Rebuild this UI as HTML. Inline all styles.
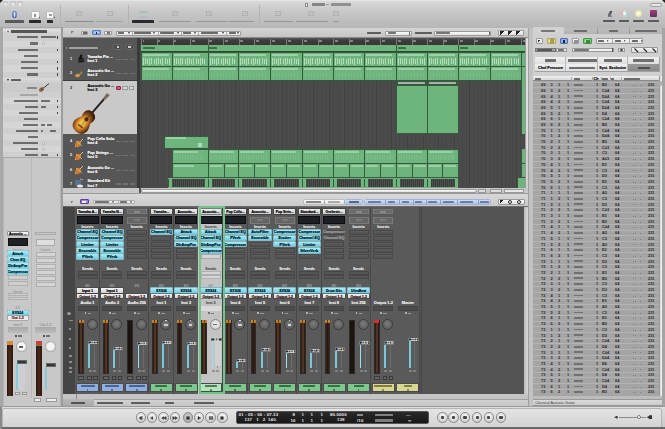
<!DOCTYPE html><html><head><meta charset="utf-8"><style>
html,body{margin:0;padding:0;width:665px;height:429px;overflow:hidden;background:#7a7a7a;}
body{position:relative;font-family:"Liberation Sans",sans-serif;}
div{box-sizing:border-box;}
.t{position:absolute;white-space:nowrap;line-height:1;}
</style></head><body>
<div style="position:absolute;left:0px;top:0px;width:665px;height:429px;background:#c3c3c3;"></div>
<div style="position:absolute;left:0px;top:0px;width:665px;height:27px;background:linear-gradient(#e8e8e8,#cfcfcf 40%,#b9b9b9);"></div>
<div style="position:absolute;left:0px;top:27.3px;width:665px;height:0.8px;background:#a4a4a4;"></div>
<div style="position:absolute;left:0px;top:0px;width:665px;height:27.5px;background:linear-gradient(#eeeeee 0,#d8d8d8 1.5px,#c8c8c8 40%,#b6b6b6);"></div>
<div style="position:absolute;left:0px;top:0px;width:3px;height:3px;background:#222;clip-path:polygon(0 0,100% 0,0 100%);"></div>
<div style="position:absolute;left:662px;top:0px;width:3px;height:3px;background:#222;clip-path:polygon(0 0,100% 0,100% 100%);"></div>
<div style="position:absolute;left:2.5000000000000004px;top:0.6px;width:5.8px;height:5.8px;border-radius:50%;background:radial-gradient(circle at 50% 65%,#f4f4f4,#d0d0d0 50%,#a8a8a8 80%,#8a8a8a);"></div>
<div style="position:absolute;left:10.0px;top:0.6px;width:5.8px;height:5.8px;border-radius:50%;background:radial-gradient(circle at 50% 65%,#f4f4f4,#d0d0d0 50%,#a8a8a8 80%,#8a8a8a);"></div>
<div style="position:absolute;left:17.400000000000002px;top:0.6px;width:5.8px;height:5.8px;border-radius:50%;background:radial-gradient(circle at 50% 65%,#f4f4f4,#d0d0d0 50%,#a8a8a8 80%,#8a8a8a);"></div>
<div style="position:absolute;left:650px;top:2.5px;width:12px;height:4px;border-radius:2px;background:#e8e8e8;border:0.5px solid #a0a0a0;"></div>
<div style="position:absolute;left:305.4px;top:2.5px;width:3px;height:4.5px;background:#f4f4f4;border:0.5px solid #888;"></div>
<div style="position:absolute;left:311.5px;top:3.4px;width:13px;height:2.4px;background:#666;opacity:0.72;border-radius:0.6px"></div>
<div style="position:absolute;left:326px;top:3.8px;width:3px;height:1px;background:#777;opacity:0.72;border-radius:0.6px"></div>
<div style="position:absolute;left:331px;top:3.4px;width:20px;height:2.4px;background:#777;opacity:0.72;border-radius:0.6px"></div>
<div style="position:absolute;left:12px;top:10.5px;width:5px;height:7.5px;border-radius:50%;background:radial-gradient(circle at 50% 40%,#a8c0f0,#4a70c8 60%,#2a4aa0);"></div>
<div style="position:absolute;left:14px;top:12px;width:1px;height:4.5px;background:#e0e8ff;"></div>
<div style="position:absolute;left:5.4px;top:20.4px;width:19px;height:2.3px;background:#333;opacity:0.72;border-radius:0.6px"></div>
<div style="position:absolute;left:31.8px;top:12.2px;width:6.8px;height:6px;background:#f8f8f8;box-shadow:0 0 0 0.5px #b0b0b0;"></div>
<div style="position:absolute;left:34.2px;top:14px;width:2px;height:2.5px;background:#666;opacity:.7"></div>
<div style="position:absolute;left:38.8px;top:16.5px;width:1px;height:1px;background:#444;"></div>
<div style="position:absolute;left:29px;top:20.3px;width:11.6px;height:2.5px;background:#111;opacity:0.86;border-radius:0.6px"></div>
<div style="position:absolute;left:47.4px;top:12.2px;width:6px;height:6px;background:#f8f8f8;box-shadow:0 0 0 0.5px #b0b0b0;"></div>
<div style="position:absolute;left:49.3px;top:14px;width:2.5px;height:2px;background:#777;opacity:.7"></div>
<div style="position:absolute;left:54px;top:16.5px;width:1px;height:1px;background:#444;"></div>
<div style="position:absolute;left:47.4px;top:20.3px;width:5.4px;height:2.5px;background:#111;opacity:0.86;border-radius:0.6px"></div>
<div style="position:absolute;left:59.5px;top:5px;width:0.8px;height:19px;background:#b4b4b4;"></div>
<div style="position:absolute;left:128px;top:5px;width:0.8px;height:19px;background:#b4b4b4;"></div>
<div style="position:absolute;left:258.8px;top:5px;width:0.8px;height:19px;background:#b4b4b4;"></div>
<div style="position:absolute;left:76px;top:11px;width:6px;height:5px;border:0.6px solid #a4a4a4;opacity:.6;border-radius:0.5px"></div>
<div style="position:absolute;left:77.5px;top:12.5px;width:3px;height:1px;background:#aaa;opacity:.5"></div>
<div style="position:absolute;left:107px;top:11px;width:6px;height:5px;border:0.6px solid #a4a4a4;opacity:.6;border-radius:0.5px"></div>
<div style="position:absolute;left:108.5px;top:12.5px;width:3px;height:1px;background:#aaa;opacity:.5"></div>
<div style="position:absolute;left:172px;top:11px;width:6px;height:5px;border:0.6px solid #a4a4a4;opacity:.6;border-radius:0.5px"></div>
<div style="position:absolute;left:173.5px;top:12.5px;width:3px;height:1px;background:#aaa;opacity:.5"></div>
<div style="position:absolute;left:206px;top:11px;width:6px;height:5px;border:0.6px solid #a4a4a4;opacity:.6;border-radius:0.5px"></div>
<div style="position:absolute;left:207.5px;top:12.5px;width:3px;height:1px;background:#aaa;opacity:.5"></div>
<div style="position:absolute;left:242px;top:11px;width:6px;height:5px;border:0.6px solid #a4a4a4;opacity:.6;border-radius:0.5px"></div>
<div style="position:absolute;left:243.5px;top:12.5px;width:3px;height:1px;background:#aaa;opacity:.5"></div>
<div style="position:absolute;left:275px;top:11px;width:6px;height:5px;border:0.6px solid #a4a4a4;opacity:.6;border-radius:0.5px"></div>
<div style="position:absolute;left:276.5px;top:12.5px;width:3px;height:1px;background:#aaa;opacity:.5"></div>
<div style="position:absolute;left:308px;top:11px;width:6px;height:5px;border:0.6px solid #a4a4a4;opacity:.6;border-radius:0.5px"></div>
<div style="position:absolute;left:309.5px;top:12.5px;width:3px;height:1px;background:#aaa;opacity:.5"></div>
<div style="position:absolute;left:333px;top:11px;width:6px;height:5px;border:0.6px solid #a4a4a4;opacity:.6;border-radius:0.5px"></div>
<div style="position:absolute;left:334.5px;top:12.5px;width:3px;height:1px;background:#aaa;opacity:.5"></div>
<div style="position:absolute;left:64.5px;top:20.6px;width:29.7px;height:1.8px;background:#777;opacity:0.72;border-radius:0.6px"></div>
<div style="position:absolute;left:96.3px;top:20.6px;width:26.4px;height:1.8px;background:#9a9a9a;opacity:0.72;border-radius:0.6px"></div>
<div style="position:absolute;left:138.5px;top:10.5px;width:9px;height:7px;background:linear-gradient(#7ab890,#b0d8c0 50%,#a898d8);opacity:.5;border-radius:1px"></div>
<div style="position:absolute;left:131.5px;top:20.3px;width:22.7px;height:2.5px;background:#111;opacity:0.86;border-radius:0.6px"></div>
<div style="position:absolute;left:159px;top:20.6px;width:31.7px;height:1.8px;background:#888;opacity:0.72;border-radius:0.6px"></div>
<div style="position:absolute;left:195.5px;top:20.6px;width:31px;height:1.8px;background:#888;opacity:0.72;border-radius:0.6px"></div>
<div style="position:absolute;left:227.7px;top:20.6px;width:26.3px;height:1.8px;background:#888;opacity:0.72;border-radius:0.6px"></div>
<div style="position:absolute;left:263.6px;top:20.6px;width:29px;height:1.8px;background:#888;opacity:0.72;border-radius:0.6px"></div>
<div style="position:absolute;left:296px;top:20.6px;width:31.7px;height:1.8px;background:#888;opacity:0.72;border-radius:0.6px"></div>
<div style="position:absolute;left:333px;top:20.6px;width:6px;height:1.8px;background:#888;opacity:0.72;border-radius:0.6px"></div>
<div style="position:absolute;left:607.5px;top:10.5px;width:5px;height:6.5px;background:linear-gradient(160deg,#333,#666 50%,#9090c0);clip-path:polygon(60% 0,100% 0,70% 70%,100% 100%,0 100%,10% 60%);"></div>
<div style="position:absolute;left:621px;top:10px;width:7px;height:7px;border-radius:50%;background:conic-gradient(#f0e0a0,#a0d0f0,#a0f0c0,#f0a0d0,#f0e0a0);opacity:.85"></div>
<div style="position:absolute;left:623px;top:12px;width:3px;height:3px;border-radius:50%;background:#fff;"></div>
<div style="position:absolute;left:635px;top:10px;width:6.5px;height:7px;border-radius:50%;background:radial-gradient(#fffff0,#e8e4b0 60%,#d0d8c0);"></div>
<div style="position:absolute;left:650px;top:10px;width:6.5px;height:7px;background:linear-gradient(#a04070,#603060);border-radius:1px;"></div>
<div style="position:absolute;left:603px;top:20.3px;width:12px;height:2px;background:#333;opacity:0.72;border-radius:0.6px"></div>
<div style="position:absolute;left:619px;top:20.3px;width:10px;height:2px;background:#333;opacity:0.72;border-radius:0.6px"></div>
<div style="position:absolute;left:633px;top:20.3px;width:11px;height:2px;background:#333;opacity:0.72;border-radius:0.6px"></div>
<div style="position:absolute;left:648px;top:20.3px;width:11px;height:2px;background:#333;opacity:0.72;border-radius:0.6px"></div>
<div style="position:absolute;left:0px;top:27px;width:63px;height:380px;background:#a8a8a8;"></div>
<div style="position:absolute;left:2.5px;top:28px;width:58.5px;height:129px;background:#cfcfcf;"></div>
<div style="position:absolute;left:61px;top:27px;width:2px;height:380px;background:#9c9c9c;"></div>
<div style="position:absolute;left:3px;top:29px;width:58px;height:5px;background:linear-gradient(#e0e0e0,#cfcfcf);"></div>
<div style="position:absolute;left:7px;top:30.5px;width:2px;height:2px;background:#222;clip-path:polygon(0 0,100% 0,50% 100%);"></div>
<div style="position:absolute;left:10.5px;top:30.4px;width:36px;height:2.3px;background:#222;opacity:0.72;border-radius:0.6px"></div>
<div style="position:absolute;left:3px;top:40.6px;width:58px;height:6.2px;background:#d6d6d6;"></div>
<div style="position:absolute;left:3px;top:53px;width:58px;height:6.2px;background:#d6d6d6;"></div>
<div style="position:absolute;left:3px;top:65.4px;width:58px;height:6.2px;background:#d6d6d6;"></div>
<div style="position:absolute;left:16.5px;top:36.199999999999996px;width:21px;height:2.2px;background:#222;opacity:0.58;border-radius:0.6px"></div>
<div style="position:absolute;left:29.5px;top:42.4px;width:8px;height:2.2px;background:#222;opacity:0.58;border-radius:0.6px"></div>
<div style="position:absolute;left:17.5px;top:48.599999999999994px;width:20px;height:2.2px;background:#222;opacity:0.58;border-radius:0.6px"></div>
<div style="position:absolute;left:23.5px;top:54.8px;width:14px;height:2.2px;background:#222;opacity:0.58;border-radius:0.6px"></div>
<div style="position:absolute;left:20.5px;top:61.0px;width:17px;height:2.2px;background:#222;opacity:0.58;border-radius:0.6px"></div>
<div style="position:absolute;left:20.5px;top:67.2px;width:17px;height:2.2px;background:#222;opacity:0.58;border-radius:0.6px"></div>
<div style="position:absolute;left:26.5px;top:73.39999999999999px;width:11px;height:2.2px;background:#222;opacity:0.58;border-radius:0.6px"></div>
<div style="position:absolute;left:41px;top:36.2px;width:15px;height:2.2px;background:#222;opacity:0.58;border-radius:0.6px"></div>
<div style="position:absolute;left:56.5px;top:36px;width:1px;height:2.6px;background:#333;"></div>
<div style="position:absolute;left:41.5px;top:42.2px;width:3.2px;height:3.2px;border-radius:50%;background:#f8f8f8;border:0.5px solid #aaa;"></div>
<div style="position:absolute;left:56.5px;top:48.5px;width:1px;height:2.6px;background:#444;"></div>
<div style="position:absolute;left:56.5px;top:60.900000000000006px;width:1px;height:2.6px;background:#444;"></div>
<div style="position:absolute;left:56.5px;top:67.10000000000001px;width:1px;height:2.6px;background:#444;"></div>
<div style="position:absolute;left:56.5px;top:73.3px;width:1px;height:2.6px;background:#444;"></div>
<div style="position:absolute;left:3px;top:77.5px;width:58px;height:5px;background:linear-gradient(#dcdcdc,#cdcdcd);"></div>
<div style="position:absolute;left:7px;top:79px;width:2px;height:2px;background:#222;clip-path:polygon(0 0,100% 0,50% 100%);"></div>
<div style="position:absolute;left:10.5px;top:79px;width:10px;height:2.3px;background:#333;opacity:0.72;border-radius:0.6px"></div>
<div style="position:absolute;left:3px;top:83px;width:58px;height:9px;background:#cbcbcb;"></div>
<div style="position:absolute;left:27px;top:86.5px;width:10px;height:2.3px;background:#555;opacity:0.58;border-radius:0.6px"></div>
<svg style="position:absolute;left:38px;top:83px" width="12" height="9" viewBox="0 0 12 9"><path d="M2 8 L11 0.5" stroke="#3a3a3a" stroke-width="1"/><ellipse cx="3.5" cy="6.5" rx="2.8" ry="2" transform="rotate(-40 3.5 6.5)" fill="#8a6a50"/><circle cx="3.8" cy="6.3" r=".7" fill="#222"/></svg>
<div style="position:absolute;left:20px;top:93.8px;width:18px;height:2px;background:#8a8a8a;opacity:0.58;border-radius:0.6px"></div>
<div style="position:absolute;left:3px;top:98.2px;width:58px;height:6px;background:#d6d6d6;"></div>
<div style="position:absolute;left:3px;top:110.2px;width:58px;height:6px;background:#d6d6d6;"></div>
<div style="position:absolute;left:3px;top:122.2px;width:58px;height:6px;background:#d6d6d6;"></div>
<div style="position:absolute;left:3px;top:134.2px;width:58px;height:6px;background:#d6d6d6;"></div>
<div style="position:absolute;left:3px;top:146.2px;width:58px;height:6px;background:#d6d6d6;"></div>
<div style="position:absolute;left:13.5px;top:100.0px;width:24px;height:2.2px;background:#222;opacity:0.58;border-radius:0.6px"></div>
<div style="position:absolute;left:24.5px;top:106.0px;width:13px;height:2.2px;background:#222;opacity:0.58;border-radius:0.6px"></div>
<div style="position:absolute;left:18.5px;top:112.0px;width:19px;height:2.2px;background:#222;opacity:0.58;border-radius:0.6px"></div>
<div style="position:absolute;left:23.5px;top:118.0px;width:14px;height:2.2px;background:#222;opacity:0.58;border-radius:0.6px"></div>
<div style="position:absolute;left:22.5px;top:124.0px;width:15px;height:2.2px;background:#222;opacity:0.58;border-radius:0.6px"></div>
<div style="position:absolute;left:15.5px;top:130.0px;width:22px;height:2.2px;background:#222;opacity:0.58;border-radius:0.6px"></div>
<div style="position:absolute;left:27.5px;top:136.0px;width:10px;height:2.2px;background:#222;opacity:0.58;border-radius:0.6px"></div>
<div style="position:absolute;left:12.5px;top:142.0px;width:25px;height:2.2px;background:#222;opacity:0.58;border-radius:0.6px"></div>
<div style="position:absolute;left:20.5px;top:148.0px;width:17px;height:2.2px;background:#222;opacity:0.58;border-radius:0.6px"></div>
<div style="position:absolute;left:24.5px;top:153.8px;width:13px;height:2.2px;background:#222;opacity:0.58;border-radius:0.6px"></div>
<div style="position:absolute;left:41px;top:100px;width:9px;height:2.2px;background:#222;opacity:0.58;border-radius:0.6px"></div>
<div style="position:absolute;left:41px;top:106px;width:5px;height:2.2px;background:#222;opacity:0.58;border-radius:0.6px"></div>
<div style="position:absolute;left:41px;top:124px;width:4px;height:2.2px;background:#222;opacity:0.58;border-radius:0.6px"></div>
<div style="position:absolute;left:47px;top:124px;width:5px;height:2.2px;background:#222;opacity:0.58;border-radius:0.6px"></div>
<div style="position:absolute;left:41px;top:130px;width:2px;height:2.2px;background:#222;opacity:0.58;border-radius:0.6px"></div>
<div style="position:absolute;left:50px;top:130px;width:6px;height:2.2px;background:#222;opacity:0.58;border-radius:0.6px"></div>
<div style="position:absolute;left:41px;top:153.8px;width:7px;height:2.2px;background:#222;opacity:0.58;border-radius:0.6px"></div>
<div style="position:absolute;left:56.5px;top:99.9px;width:1px;height:2.6px;background:#444;"></div>
<div style="position:absolute;left:56.5px;top:105.9px;width:1px;height:2.6px;background:#444;"></div>
<div style="position:absolute;left:56.5px;top:111.9px;width:1px;height:2.6px;background:#444;"></div>
<div style="position:absolute;left:56.5px;top:153.7px;width:1px;height:2.6px;background:#444;"></div>
<div style="position:absolute;left:41.5px;top:141.6px;width:3.2px;height:3.2px;border-radius:50%;background:#f8f8f8;border:0.5px solid #aaa;"></div>
<div style="position:absolute;left:41.5px;top:147.6px;width:3.2px;height:3.2px;border-radius:50%;background:#f8f8f8;border:0.5px solid #aaa;"></div>
<div style="position:absolute;left:2.5px;top:158px;width:58.5px;height:248px;background:#c8c8c8;"></div>
<div style="position:absolute;left:3px;top:158px;width:0.8px;height:248px;background:#b4b4b4;"></div>
<div style="position:absolute;left:30.5px;top:158px;width:0.8px;height:240px;background:#b8b8b8;"></div>
<div style="position:absolute;left:59.5px;top:158px;width:0.8px;height:248px;background:#b4b4b4;"></div>
<div style="position:absolute;left:2.5px;top:157px;width:58.5px;height:1px;background:#a8a8a8;"></div>
<div style="position:absolute;left:63px;top:28px;width:465px;height:10px;background:linear-gradient(#d4d4d4,#c4c4c4);"></div>
<div style="position:absolute;left:63px;top:37px;width:465px;height:1px;background:#8a8a8a;"></div>
<div style="position:absolute;left:70.5px;top:31px;width:4px;height:3px;background:linear-gradient(135deg,#555 40%,transparent 45%);opacity:.7"></div>
<div style="position:absolute;left:81px;top:30.5px;width:7px;height:4.8px;background:linear-gradient(#f8f8f8,#dcdcdc);border:0.5px solid #999;border-radius:1px;"></div>
<div style="position:absolute;left:83px;top:31.8px;width:3.5px;height:2.2px;background:#666;"></div>
<div style="position:absolute;left:91.6px;top:30.3px;width:9px;height:5.2px;background:radial-gradient(#c8dcff,#7aa0e8);border:0.5px solid #5a7ac0;border-radius:1px;"></div>
<div style="position:absolute;left:95.5px;top:31.5px;width:1.5px;height:2.8px;background:#224;"></div>
<div style="position:absolute;left:104.4px;top:30.5px;width:7.5px;height:4.8px;background:linear-gradient(#f8f8f8,#dcdcdc);border:0.5px solid #999;border-radius:1px;"></div>
<div style="position:absolute;left:106.5px;top:32px;width:3.5px;height:2px;background:#777;"></div>
<div style="position:absolute;left:116px;top:30.5px;width:125px;height:5px;background:linear-gradient(#fafafa,#e0e0e0);border:0.5px solid #999;border-radius:1px;"></div>
<div style="position:absolute;left:118px;top:32px;width:6px;height:2px;background:#333;opacity:0.72;border-radius:0.6px"></div>
<div style="position:absolute;left:134px;top:32px;width:17px;height:2px;background:#333;opacity:0.72;border-radius:0.6px"></div>
<div style="position:absolute;left:160px;top:32px;width:14px;height:2px;background:#333;opacity:0.72;border-radius:0.6px"></div>
<div style="position:absolute;left:183px;top:32px;width:8px;height:2px;background:#333;opacity:0.72;border-radius:0.6px"></div>
<div style="position:absolute;left:201px;top:32px;width:17px;height:2px;background:#333;opacity:0.72;border-radius:0.6px"></div>
<div style="position:absolute;left:229px;top:32px;width:7px;height:2px;background:#333;opacity:0.72;border-radius:0.6px"></div>
<div style="position:absolute;left:128px;top:32px;width:2px;height:2px;background:#333;clip-path:polygon(0 0,100% 0,50% 100%);"></div>
<div style="position:absolute;left:153px;top:32px;width:2px;height:2px;background:#333;clip-path:polygon(0 0,100% 0,50% 100%);"></div>
<div style="position:absolute;left:177px;top:32px;width:2px;height:2px;background:#333;clip-path:polygon(0 0,100% 0,50% 100%);"></div>
<div style="position:absolute;left:194px;top:32px;width:2px;height:2px;background:#333;clip-path:polygon(0 0,100% 0,50% 100%);"></div>
<div style="position:absolute;left:222px;top:32px;width:2px;height:2px;background:#333;clip-path:polygon(0 0,100% 0,50% 100%);"></div>
<div style="position:absolute;left:237px;top:32px;width:2px;height:2px;background:#333;clip-path:polygon(0 0,100% 0,50% 100%);"></div>
<div style="position:absolute;left:131.5px;top:30.8px;width:0.5px;height:4.4px;background:#aaa;"></div>
<div style="position:absolute;left:157.5px;top:30.8px;width:0.5px;height:4.4px;background:#aaa;"></div>
<div style="position:absolute;left:180.5px;top:30.8px;width:0.5px;height:4.4px;background:#aaa;"></div>
<div style="position:absolute;left:198px;top:30.8px;width:0.5px;height:4.4px;background:#aaa;"></div>
<div style="position:absolute;left:225.5px;top:30.8px;width:0.5px;height:4.4px;background:#aaa;"></div>
<div style="position:absolute;left:366.5px;top:32px;width:14px;height:2px;background:#333;opacity:0.72;border-radius:0.6px"></div>
<div style="position:absolute;left:385.3px;top:30.5px;width:26.3px;height:5px;background:linear-gradient(#fafafa,#e4e4e4);border:0.5px solid #999;border-radius:1px;"></div>
<div style="position:absolute;left:387.5px;top:32px;width:8px;height:2px;background:#444;opacity:0.72;border-radius:0.6px"></div>
<div style="position:absolute;left:409px;top:31.5px;width:0.6px;height:3px;background:#666;"></div>
<div style="position:absolute;left:415.4px;top:32px;width:17px;height:2px;background:#333;opacity:0.72;border-radius:0.6px"></div>
<div style="position:absolute;left:434px;top:30.5px;width:57px;height:5px;background:linear-gradient(#fafafa,#e4e4e4);border:0.5px solid #999;border-radius:1px;"></div>
<div style="position:absolute;left:436px;top:32px;width:14px;height:2px;background:#444;opacity:0.72;border-radius:0.6px"></div>
<div style="position:absolute;left:489px;top:31.5px;width:0.6px;height:3px;background:#666;"></div>
<div style="position:absolute;left:498px;top:29.5px;width:26px;height:6.5px;background:linear-gradient(#fafafa,#dedede);border:0.5px solid #999;border-radius:1px;"></div>
<div style="position:absolute;left:500px;top:31px;width:5px;height:4px;background:linear-gradient(135deg,#222 45%,transparent 50%);"></div>
<div style="position:absolute;left:508px;top:31px;width:5px;height:4px;background:linear-gradient(135deg,#222 45%,transparent 50%);"></div>
<div style="position:absolute;left:516px;top:31px;width:5px;height:4px;background:linear-gradient(135deg,#222 45%,transparent 50%);"></div>
<div style="position:absolute;left:63px;top:38px;width:74px;height:150px;background:#565656;"></div>
<div style="position:absolute;left:136.5px;top:38px;width:4.5px;height:150px;background:#3a3a3a;"></div>
<div style="position:absolute;left:140px;top:38px;width:385px;height:150px;background:#4b4b4b;"></div>
<div style="position:absolute;left:141px;top:46px;width:384px;height:142px;"><div style="position:absolute;left:0.00px;top:0;width:0.8px;height:142px;background:#424242"></div><div style="position:absolute;left:3.91px;top:0;width:0.8px;height:142px;background:#474747"></div><div style="position:absolute;left:7.82px;top:0;width:0.8px;height:142px;background:#474747"></div><div style="position:absolute;left:11.73px;top:0;width:0.8px;height:142px;background:#474747"></div><div style="position:absolute;left:15.64px;top:0;width:0.8px;height:142px;background:#424242"></div><div style="position:absolute;left:19.55px;top:0;width:0.8px;height:142px;background:#474747"></div><div style="position:absolute;left:23.46px;top:0;width:0.8px;height:142px;background:#474747"></div><div style="position:absolute;left:27.37px;top:0;width:0.8px;height:142px;background:#474747"></div><div style="position:absolute;left:31.28px;top:0;width:0.8px;height:142px;background:#424242"></div><div style="position:absolute;left:35.19px;top:0;width:0.8px;height:142px;background:#474747"></div><div style="position:absolute;left:39.10px;top:0;width:0.8px;height:142px;background:#474747"></div><div style="position:absolute;left:43.01px;top:0;width:0.8px;height:142px;background:#474747"></div><div style="position:absolute;left:46.92px;top:0;width:0.8px;height:142px;background:#424242"></div><div style="position:absolute;left:50.83px;top:0;width:0.8px;height:142px;background:#474747"></div><div style="position:absolute;left:54.74px;top:0;width:0.8px;height:142px;background:#474747"></div><div style="position:absolute;left:58.65px;top:0;width:0.8px;height:142px;background:#474747"></div><div style="position:absolute;left:62.56px;top:0;width:0.8px;height:142px;background:#424242"></div><div style="position:absolute;left:66.47px;top:0;width:0.8px;height:142px;background:#474747"></div><div style="position:absolute;left:70.38px;top:0;width:0.8px;height:142px;background:#474747"></div><div style="position:absolute;left:74.29px;top:0;width:0.8px;height:142px;background:#474747"></div><div style="position:absolute;left:78.20px;top:0;width:0.8px;height:142px;background:#424242"></div><div style="position:absolute;left:82.11px;top:0;width:0.8px;height:142px;background:#474747"></div><div style="position:absolute;left:86.02px;top:0;width:0.8px;height:142px;background:#474747"></div><div style="position:absolute;left:89.93px;top:0;width:0.8px;height:142px;background:#474747"></div><div style="position:absolute;left:93.84px;top:0;width:0.8px;height:142px;background:#424242"></div><div style="position:absolute;left:97.75px;top:0;width:0.8px;height:142px;background:#474747"></div><div style="position:absolute;left:101.66px;top:0;width:0.8px;height:142px;background:#474747"></div><div style="position:absolute;left:105.57px;top:0;width:0.8px;height:142px;background:#474747"></div><div style="position:absolute;left:109.48px;top:0;width:0.8px;height:142px;background:#424242"></div><div style="position:absolute;left:113.39px;top:0;width:0.8px;height:142px;background:#474747"></div><div style="position:absolute;left:117.30px;top:0;width:0.8px;height:142px;background:#474747"></div><div style="position:absolute;left:121.21px;top:0;width:0.8px;height:142px;background:#474747"></div><div style="position:absolute;left:125.12px;top:0;width:0.8px;height:142px;background:#424242"></div><div style="position:absolute;left:129.03px;top:0;width:0.8px;height:142px;background:#474747"></div><div style="position:absolute;left:132.94px;top:0;width:0.8px;height:142px;background:#474747"></div><div style="position:absolute;left:136.85px;top:0;width:0.8px;height:142px;background:#474747"></div><div style="position:absolute;left:140.76px;top:0;width:0.8px;height:142px;background:#424242"></div><div style="position:absolute;left:144.67px;top:0;width:0.8px;height:142px;background:#474747"></div><div style="position:absolute;left:148.58px;top:0;width:0.8px;height:142px;background:#474747"></div><div style="position:absolute;left:152.49px;top:0;width:0.8px;height:142px;background:#474747"></div><div style="position:absolute;left:156.40px;top:0;width:0.8px;height:142px;background:#424242"></div><div style="position:absolute;left:160.31px;top:0;width:0.8px;height:142px;background:#474747"></div><div style="position:absolute;left:164.22px;top:0;width:0.8px;height:142px;background:#474747"></div><div style="position:absolute;left:168.13px;top:0;width:0.8px;height:142px;background:#474747"></div><div style="position:absolute;left:172.04px;top:0;width:0.8px;height:142px;background:#424242"></div><div style="position:absolute;left:175.95px;top:0;width:0.8px;height:142px;background:#474747"></div><div style="position:absolute;left:179.86px;top:0;width:0.8px;height:142px;background:#474747"></div><div style="position:absolute;left:183.77px;top:0;width:0.8px;height:142px;background:#474747"></div><div style="position:absolute;left:187.68px;top:0;width:0.8px;height:142px;background:#424242"></div><div style="position:absolute;left:191.59px;top:0;width:0.8px;height:142px;background:#474747"></div><div style="position:absolute;left:195.50px;top:0;width:0.8px;height:142px;background:#474747"></div><div style="position:absolute;left:199.41px;top:0;width:0.8px;height:142px;background:#474747"></div><div style="position:absolute;left:203.32px;top:0;width:0.8px;height:142px;background:#424242"></div><div style="position:absolute;left:207.23px;top:0;width:0.8px;height:142px;background:#474747"></div><div style="position:absolute;left:211.14px;top:0;width:0.8px;height:142px;background:#474747"></div><div style="position:absolute;left:215.05px;top:0;width:0.8px;height:142px;background:#474747"></div><div style="position:absolute;left:218.96px;top:0;width:0.8px;height:142px;background:#424242"></div><div style="position:absolute;left:222.87px;top:0;width:0.8px;height:142px;background:#474747"></div><div style="position:absolute;left:226.78px;top:0;width:0.8px;height:142px;background:#474747"></div><div style="position:absolute;left:230.69px;top:0;width:0.8px;height:142px;background:#474747"></div><div style="position:absolute;left:234.60px;top:0;width:0.8px;height:142px;background:#424242"></div><div style="position:absolute;left:238.51px;top:0;width:0.8px;height:142px;background:#474747"></div><div style="position:absolute;left:242.42px;top:0;width:0.8px;height:142px;background:#474747"></div><div style="position:absolute;left:246.33px;top:0;width:0.8px;height:142px;background:#474747"></div><div style="position:absolute;left:250.24px;top:0;width:0.8px;height:142px;background:#424242"></div><div style="position:absolute;left:254.15px;top:0;width:0.8px;height:142px;background:#474747"></div><div style="position:absolute;left:258.06px;top:0;width:0.8px;height:142px;background:#474747"></div><div style="position:absolute;left:261.97px;top:0;width:0.8px;height:142px;background:#474747"></div><div style="position:absolute;left:265.88px;top:0;width:0.8px;height:142px;background:#424242"></div><div style="position:absolute;left:269.79px;top:0;width:0.8px;height:142px;background:#474747"></div><div style="position:absolute;left:273.70px;top:0;width:0.8px;height:142px;background:#474747"></div><div style="position:absolute;left:277.61px;top:0;width:0.8px;height:142px;background:#474747"></div><div style="position:absolute;left:281.52px;top:0;width:0.8px;height:142px;background:#424242"></div><div style="position:absolute;left:285.43px;top:0;width:0.8px;height:142px;background:#474747"></div><div style="position:absolute;left:289.34px;top:0;width:0.8px;height:142px;background:#474747"></div><div style="position:absolute;left:293.25px;top:0;width:0.8px;height:142px;background:#474747"></div><div style="position:absolute;left:297.16px;top:0;width:0.8px;height:142px;background:#424242"></div><div style="position:absolute;left:301.07px;top:0;width:0.8px;height:142px;background:#474747"></div><div style="position:absolute;left:304.98px;top:0;width:0.8px;height:142px;background:#474747"></div><div style="position:absolute;left:308.89px;top:0;width:0.8px;height:142px;background:#474747"></div><div style="position:absolute;left:312.80px;top:0;width:0.8px;height:142px;background:#424242"></div><div style="position:absolute;left:316.71px;top:0;width:0.8px;height:142px;background:#474747"></div><div style="position:absolute;left:320.62px;top:0;width:0.8px;height:142px;background:#474747"></div><div style="position:absolute;left:324.53px;top:0;width:0.8px;height:142px;background:#474747"></div><div style="position:absolute;left:328.44px;top:0;width:0.8px;height:142px;background:#424242"></div><div style="position:absolute;left:332.35px;top:0;width:0.8px;height:142px;background:#474747"></div><div style="position:absolute;left:336.26px;top:0;width:0.8px;height:142px;background:#474747"></div><div style="position:absolute;left:340.17px;top:0;width:0.8px;height:142px;background:#474747"></div><div style="position:absolute;left:344.08px;top:0;width:0.8px;height:142px;background:#424242"></div><div style="position:absolute;left:347.99px;top:0;width:0.8px;height:142px;background:#474747"></div><div style="position:absolute;left:351.90px;top:0;width:0.8px;height:142px;background:#474747"></div><div style="position:absolute;left:355.81px;top:0;width:0.8px;height:142px;background:#474747"></div><div style="position:absolute;left:359.72px;top:0;width:0.8px;height:142px;background:#424242"></div><div style="position:absolute;left:363.63px;top:0;width:0.8px;height:142px;background:#474747"></div><div style="position:absolute;left:367.54px;top:0;width:0.8px;height:142px;background:#474747"></div><div style="position:absolute;left:371.45px;top:0;width:0.8px;height:142px;background:#474747"></div><div style="position:absolute;left:375.36px;top:0;width:0.8px;height:142px;background:#424242"></div><div style="position:absolute;left:379.27px;top:0;width:0.8px;height:142px;background:#474747"></div><div style="position:absolute;left:383.18px;top:0;width:0.8px;height:142px;background:#474747"></div></div>
<div style="position:absolute;left:140px;top:38px;width:385px;height:7px;background:linear-gradient(#5a5a5a,#3e3e3e 30%,#363636);"></div>
<div style="position:absolute;left:141px;top:45px;width:384px;height:7px;background:#6eb67d;border-bottom:0.6px solid #2e4a33;"></div>
<div style="position:absolute;left:63px;top:80px;width:73.5px;height:53.5px;background:#c9c9c9;border-top:0.6px solid #3a3a3a;"></div>
<div style="position:absolute;left:65.5px;top:47px;width:2px;height:2px;background:#ccc;clip-path:polygon(0 0,100% 50%,0 100%);"></div>
<div style="position:absolute;left:68.5px;top:46.8px;width:29.5px;height:2.2px;background:#cfcfcf;opacity:0.61;border-radius:0.6px"></div>
<div style="position:absolute;left:114px;top:44.5px;width:7px;height:4.5px;background:#4a4a4a;box-shadow:0 0 0 0.5px #7a7a7a;border-radius:1px;"></div>
<div style="position:absolute;left:116.5px;top:46px;width:2px;height:1.5px;background:#ccc;"></div>
<div style="position:absolute;left:125.5px;top:44.5px;width:7.5px;height:4.5px;background:#4a4a4a;box-shadow:0 0 0 0.5px #7a7a7a;border-radius:1px;"></div>
<div style="position:absolute;left:127.5px;top:46px;width:3.5px;height:1.5px;background:#ccc;"></div>
<div class="t" style="left:70px;top:58.10px;font-size:3.8px;color:#f4f4f4;font-weight:bold">1</div>
<div class="t" style="left:87.5px;top:56.00px;font-size:3.8px;color:#f4f4f4;font-weight:bold;text-shadow:0 0 0.3px #f4f4f4">Yamaha Pia ...</div>
<div class="t" style="left:87.5px;top:60.10px;font-size:3.8px;color:#f4f4f4;font-weight:bold;text-shadow:0 0 0.3px #f4f4f4">Inst 1</div>
<div style="position:absolute;left:115.5px;top:59.0px;width:5px;height:1.2px;background:#777;opacity:0.8;"></div>
<div style="position:absolute;left:122.5px;top:59.0px;width:5px;height:1.2px;background:#777;opacity:0.8;"></div>
<div style="position:absolute;left:129.5px;top:59.0px;width:5px;height:1.2px;background:#777;opacity:0.8;"></div>
<div class="t" style="left:70px;top:72.10px;font-size:3.8px;color:#f4f4f4;font-weight:bold">2</div>
<div class="t" style="left:87.5px;top:70.00px;font-size:3.8px;color:#f4f4f4;font-weight:bold;text-shadow:0 0 0.3px #f4f4f4">Acoustic Gu ...</div>
<div class="t" style="left:87.5px;top:74.10px;font-size:3.8px;color:#f4f4f4;font-weight:bold;text-shadow:0 0 0.3px #f4f4f4">Inst 2</div>
<div style="position:absolute;left:115.5px;top:73.0px;width:5px;height:1.2px;background:#777;opacity:0.8;"></div>
<div style="position:absolute;left:122.5px;top:73.0px;width:5px;height:1.2px;background:#777;opacity:0.8;"></div>
<div style="position:absolute;left:129.5px;top:73.0px;width:5px;height:1.2px;background:#777;opacity:0.8;"></div>
<div class="t" style="left:70px;top:86.60px;font-size:3.8px;color:#1a1a1a;font-weight:bold">3</div>
<div class="t" style="left:87.5px;top:84.50px;font-size:3.8px;color:#1a1a1a;font-weight:bold;text-shadow:0 0 0.3px #1a1a1a">Acoustic Gu ...</div>
<div class="t" style="left:87.5px;top:88.60px;font-size:3.8px;color:#1a1a1a;font-weight:bold;text-shadow:0 0 0.3px #1a1a1a">Inst 3</div>
<div style="position:absolute;left:115.9px;top:85.8px;width:5.2px;height:4.6px;background:radial-gradient(#f070a0,#d03a70);border:0.5px solid #902050;border-radius:1px;"></div>
<div style="position:absolute;left:122px;top:86.2px;width:5.5px;height:3.8px;background:#d8d8d8;border:0.5px solid #999;"></div>
<div style="position:absolute;left:128.8px;top:86.2px;width:5.5px;height:3.8px;background:#d8d8d8;border:0.5px solid #999;"></div>
<div class="t" style="left:70px;top:140.10px;font-size:3.8px;color:#f4f4f4;font-weight:bold">4</div>
<div class="t" style="left:87.5px;top:138.00px;font-size:3.8px;color:#f4f4f4;font-weight:bold;text-shadow:0 0 0.3px #f4f4f4">Pop Cello Solo</div>
<div class="t" style="left:87.5px;top:142.10px;font-size:3.8px;color:#f4f4f4;font-weight:bold;text-shadow:0 0 0.3px #f4f4f4">Inst 4</div>
<div style="position:absolute;left:115.5px;top:141.0px;width:5px;height:1.2px;background:#777;opacity:0.8;"></div>
<div style="position:absolute;left:122.5px;top:141.0px;width:5px;height:1.2px;background:#777;opacity:0.8;"></div>
<div style="position:absolute;left:129.5px;top:141.0px;width:5px;height:1.2px;background:#777;opacity:0.8;"></div>
<div class="t" style="left:70px;top:154.30px;font-size:3.8px;color:#f4f4f4;font-weight:bold">5</div>
<div class="t" style="left:87.5px;top:152.20px;font-size:3.8px;color:#f4f4f4;font-weight:bold;text-shadow:0 0 0.3px #f4f4f4">Pop Strings ...</div>
<div class="t" style="left:87.5px;top:156.30px;font-size:3.8px;color:#f4f4f4;font-weight:bold;text-shadow:0 0 0.3px #f4f4f4">Inst 5</div>
<div style="position:absolute;left:115.5px;top:155.20000000000002px;width:5px;height:1.2px;background:#777;opacity:0.8;"></div>
<div style="position:absolute;left:122.5px;top:155.20000000000002px;width:5px;height:1.2px;background:#777;opacity:0.8;"></div>
<div style="position:absolute;left:129.5px;top:155.20000000000002px;width:5px;height:1.2px;background:#777;opacity:0.8;"></div>
<div class="t" style="left:70px;top:168.70px;font-size:3.8px;color:#f4f4f4;font-weight:bold">6</div>
<div class="t" style="left:87.5px;top:166.60px;font-size:3.8px;color:#f4f4f4;font-weight:bold;text-shadow:0 0 0.3px #f4f4f4">Acoustic Gu ...</div>
<div class="t" style="left:87.5px;top:170.70px;font-size:3.8px;color:#f4f4f4;font-weight:bold;text-shadow:0 0 0.3px #f4f4f4">Inst 6</div>
<div style="position:absolute;left:115.5px;top:169.60000000000002px;width:5px;height:1.2px;background:#777;opacity:0.8;"></div>
<div style="position:absolute;left:122.5px;top:169.60000000000002px;width:5px;height:1.2px;background:#777;opacity:0.8;"></div>
<div style="position:absolute;left:129.5px;top:169.60000000000002px;width:5px;height:1.2px;background:#777;opacity:0.8;"></div>
<div class="t" style="left:70px;top:182.50px;font-size:3.8px;color:#f4f4f4;font-weight:bold">7</div>
<div class="t" style="left:87.5px;top:180.40px;font-size:3.8px;color:#f4f4f4;font-weight:bold;text-shadow:0 0 0.3px #f4f4f4">Standard Kit</div>
<div class="t" style="left:87.5px;top:184.50px;font-size:3.8px;color:#f4f4f4;font-weight:bold;text-shadow:0 0 0.3px #f4f4f4">Inst 7</div>
<div style="position:absolute;left:115.5px;top:183.4px;width:5px;height:1.2px;background:#777;opacity:0.8;"></div>
<div style="position:absolute;left:122.5px;top:183.4px;width:5px;height:1.2px;background:#777;opacity:0.8;"></div>
<div style="position:absolute;left:129.5px;top:183.4px;width:5px;height:1.2px;background:#777;opacity:0.8;"></div>
<svg style="position:absolute;left:76px;top:53.5px" width="10" height="10" viewBox="0 0 10 10"><path d="M4.5 0.5 L6.5 1 L5.5 3.5 L8 4.5 L8.5 7 L5 8.5 L2 7.5 L2.5 5Z" fill="#111"/><path d="M2.5 6.5 L8 5.5" stroke="#777" stroke-width=".5"/><path d="M3 8 L3 9.5 M7 7.5 L7 9" stroke="#222" stroke-width=".6"/></svg>
<svg style="position:absolute;left:75px;top:70px" width="8" height="8" viewBox="0 0 8 8"><path d="M0.5 7 L7 1 L7.5 3 L3 7.5Z" fill="#a08040"/><ellipse cx="2.5" cy="5.5" rx="2.2" ry="1.8" fill="#d0a040"/></svg>
<svg style="position:absolute;left:74px;top:137.5px" width="10" height="10" viewBox="0 0 10 10"><path d="M1 9 L9 1" stroke="#e0c090" stroke-width="1"/><ellipse cx="4" cy="6" rx="2.6" ry="3.3" transform="rotate(40 4 6)" fill="#d07a28"/><path d="M2 3 L8 8" stroke="#f0e0c0" stroke-width=".6"/></svg>
<svg style="position:absolute;left:74px;top:151px" width="10" height="10" viewBox="0 0 10 10"><path d="M1 9 L9 1" stroke="#e0c090" stroke-width="1"/><ellipse cx="4" cy="6" rx="2.6" ry="3.3" transform="rotate(40 4 6)" fill="#d07a28"/><path d="M2 3 L8 8" stroke="#f0e0c0" stroke-width=".6"/></svg>
<svg style="position:absolute;left:74px;top:164.5px" width="10" height="10" viewBox="0 0 10 10"><path d="M1 9 L9 1" stroke="#e0c090" stroke-width="1"/><ellipse cx="4" cy="6" rx="2.6" ry="3.3" transform="rotate(40 4 6)" fill="#d07a28"/><path d="M2 3 L8 8" stroke="#f0e0c0" stroke-width=".6"/></svg>
<svg style="position:absolute;left:74px;top:178px" width="10" height="10" viewBox="0 0 10 10"><rect x="1" y="2" width="6" height="6" fill="#5a7090"/><ellipse cx="6" cy="8" rx="3" ry="1.6" fill="#e8e8e8"/><path d="M6 1 L9 2" stroke="#bbb" stroke-width=".8"/></svg>
<svg style="position:absolute;left:0px;top:0px" width="140" height="140" viewBox="0 0 140 140">
<defs><radialGradient id="gg" cx="45%" cy="60%" r="60%"><stop offset="0" stop-color="#f8d860"/><stop offset=".35" stop-color="#e8a030"/><stop offset=".7" stop-color="#8a4a18"/><stop offset="1" stop-color="#2a1408"/></radialGradient></defs>
<g transform="translate(81.5,125) rotate(41)">
<rect x="-1" y="-34.5" width="2" height="19" fill="#2a2220"/>
<path d="M-1.8 -41 L1.8 -41 L1.3 -34 L-1.3 -34Z" fill="#7a6a5a"/>
<path d="M0 8.5 C-6 8.5 -8.5 5 -8.2 0 C-8 -3 -6.5 -5 -5.6 -6.5 C-6.3 -8.5 -6.8 -10.5 -6.3 -12.5 C-5.6 -15.5 -3.2 -17 0 -17 C3.2 -17 5.6 -15.5 6.3 -12.5 C6.8 -10.5 6.3 -8.5 5.6 -6.5 C6.5 -5 8 -3 8.2 0 C8.5 5 6 8.5 0 8.5Z" fill="url(#gg)"/>
<ellipse cx="0" cy="-7.5" rx="2" ry="2" fill="#2a1808" opacity=".85"/>
<rect x="-2.8" y="1" width="5.6" height="1.3" fill="#2a1408" opacity=".8"/>
<rect x="-0.5" y="-15" width="1" height="16" fill="#3a2a1a" opacity=".5"/>
</g></svg>
<div style="position:absolute;left:143px;top:47.3px;width:12px;height:2px;background:#1a3a20;opacity:0.58;border-radius:0.6px"></div>
<div style="position:absolute;left:209px;top:47.3px;width:8px;height:2px;background:#1a3a20;opacity:0.58;border-radius:0.6px"></div>
<div style="position:absolute;left:398px;top:47.3px;width:8px;height:2px;background:#1a3a20;opacity:0.58;border-radius:0.6px"></div>
<div style="position:absolute;left:460px;top:47.3px;width:8px;height:2px;background:#1a3a20;opacity:0.58;border-radius:0.6px"></div>
<div style="position:absolute;left:208px;top:45px;width:1px;height:7px;background:#355a3e;"></div>
<div style="position:absolute;left:396px;top:45px;width:1px;height:7px;background:#355a3e;"></div>
<div style="position:absolute;left:458px;top:45px;width:1px;height:7px;background:#355a3e;"></div>
<div style="position:absolute;left:141px;top:52px;width:384px;height:28px;background:#6db57c;"></div>
<div style="position:absolute;left:141px;top:52px;width:385px;height:1px;background:#355a3e;"></div>
<div style="position:absolute;left:141px;top:66px;width:385px;height:1px;background:#355a3e;"></div>
<div style="position:absolute;left:141px;top:80px;width:385px;height:1px;background:#355a3e;"></div>
<div style="position:absolute;left:143px;top:53.8px;width:26px;height:2px;background:#e4f4e8;opacity:0.43;border-radius:0.6px"></div>
<div style="position:absolute;left:142px;top:57.5px;width:29px;height:7.5px;opacity:.8"><div style="position:absolute;left:0.60px;top:0.0px;width:0.7px;height:7.0px;background:#c8e8ce"></div><div style="position:absolute;left:2.80px;top:0.6px;width:0.7px;height:6.4px;background:#c8e8ce"></div><div style="position:absolute;left:5.00px;top:1.2px;width:0.7px;height:5.8px;background:#c8e8ce"></div><div style="position:absolute;left:7.20px;top:0.0px;width:0.7px;height:7.0px;background:#c8e8ce"></div><div style="position:absolute;left:9.40px;top:0.6px;width:0.7px;height:6.4px;background:#c8e8ce"></div><div style="position:absolute;left:11.60px;top:1.2px;width:0.7px;height:5.8px;background:#c8e8ce"></div><div style="position:absolute;left:13.80px;top:0.0px;width:0.7px;height:7.0px;background:#c8e8ce"></div><div style="position:absolute;left:16.00px;top:0.6px;width:0.7px;height:6.4px;background:#c8e8ce"></div><div style="position:absolute;left:18.20px;top:1.2px;width:0.7px;height:5.8px;background:#c8e8ce"></div><div style="position:absolute;left:20.40px;top:0.0px;width:0.7px;height:7.0px;background:#c8e8ce"></div><div style="position:absolute;left:22.60px;top:0.6px;width:0.7px;height:6.4px;background:#c8e8ce"></div><div style="position:absolute;left:24.80px;top:1.2px;width:0.7px;height:5.8px;background:#c8e8ce"></div><div style="position:absolute;left:27.00px;top:0.0px;width:0.7px;height:7.0px;background:#c8e8ce"></div></div>
<div style="position:absolute;left:143px;top:67.8px;width:26px;height:2px;background:#e4f4e8;opacity:0.40;border-radius:0.6px"></div>
<div style="position:absolute;left:144px;top:73px;width:25px;height:4px;background:repeating-linear-gradient(90deg,#8cc498 0 1px,transparent 1px 3px);opacity:.45"></div>
<div style="position:absolute;left:174px;top:53.8px;width:26px;height:2px;background:#e4f4e8;opacity:0.43;border-radius:0.6px"></div>
<div style="position:absolute;left:173px;top:57.5px;width:34px;height:7.5px;opacity:.8"><div style="position:absolute;left:0.60px;top:0.0px;width:0.7px;height:7.0px;background:#c8e8ce"></div><div style="position:absolute;left:2.80px;top:0.6px;width:0.7px;height:6.4px;background:#c8e8ce"></div><div style="position:absolute;left:5.00px;top:1.2px;width:0.7px;height:5.8px;background:#c8e8ce"></div><div style="position:absolute;left:7.20px;top:0.0px;width:0.7px;height:7.0px;background:#c8e8ce"></div><div style="position:absolute;left:9.40px;top:0.6px;width:0.7px;height:6.4px;background:#c8e8ce"></div><div style="position:absolute;left:11.60px;top:1.2px;width:0.7px;height:5.8px;background:#c8e8ce"></div><div style="position:absolute;left:13.80px;top:0.0px;width:0.7px;height:7.0px;background:#c8e8ce"></div><div style="position:absolute;left:16.00px;top:0.6px;width:0.7px;height:6.4px;background:#c8e8ce"></div><div style="position:absolute;left:18.20px;top:1.2px;width:0.7px;height:5.8px;background:#c8e8ce"></div><div style="position:absolute;left:20.40px;top:0.0px;width:0.7px;height:7.0px;background:#c8e8ce"></div><div style="position:absolute;left:22.60px;top:0.6px;width:0.7px;height:6.4px;background:#c8e8ce"></div><div style="position:absolute;left:24.80px;top:1.2px;width:0.7px;height:5.8px;background:#c8e8ce"></div><div style="position:absolute;left:27.00px;top:0.0px;width:0.7px;height:7.0px;background:#c8e8ce"></div><div style="position:absolute;left:29.20px;top:0.6px;width:0.7px;height:6.4px;background:#c8e8ce"></div><div style="position:absolute;left:31.40px;top:1.2px;width:0.7px;height:5.8px;background:#c8e8ce"></div></div>
<div style="position:absolute;left:174px;top:67.8px;width:26px;height:2px;background:#e4f4e8;opacity:0.40;border-radius:0.6px"></div>
<div style="position:absolute;left:175px;top:73px;width:30px;height:4px;background:repeating-linear-gradient(90deg,#8cc498 0 1px,transparent 1px 3px);opacity:.45"></div>
<div style="position:absolute;left:210px;top:53.8px;width:26px;height:2px;background:#e4f4e8;opacity:0.43;border-radius:0.6px"></div>
<div style="position:absolute;left:209px;top:57.5px;width:28px;height:7.5px;opacity:.8"><div style="position:absolute;left:0.60px;top:0.0px;width:0.7px;height:7.0px;background:#c8e8ce"></div><div style="position:absolute;left:2.80px;top:0.6px;width:0.7px;height:6.4px;background:#c8e8ce"></div><div style="position:absolute;left:5.00px;top:1.2px;width:0.7px;height:5.8px;background:#c8e8ce"></div><div style="position:absolute;left:7.20px;top:0.0px;width:0.7px;height:7.0px;background:#c8e8ce"></div><div style="position:absolute;left:9.40px;top:0.6px;width:0.7px;height:6.4px;background:#c8e8ce"></div><div style="position:absolute;left:11.60px;top:1.2px;width:0.7px;height:5.8px;background:#c8e8ce"></div><div style="position:absolute;left:13.80px;top:0.0px;width:0.7px;height:7.0px;background:#c8e8ce"></div><div style="position:absolute;left:16.00px;top:0.6px;width:0.7px;height:6.4px;background:#c8e8ce"></div><div style="position:absolute;left:18.20px;top:1.2px;width:0.7px;height:5.8px;background:#c8e8ce"></div><div style="position:absolute;left:20.40px;top:0.0px;width:0.7px;height:7.0px;background:#c8e8ce"></div><div style="position:absolute;left:22.60px;top:0.6px;width:0.7px;height:6.4px;background:#c8e8ce"></div><div style="position:absolute;left:24.80px;top:1.2px;width:0.7px;height:5.8px;background:#c8e8ce"></div></div>
<div style="position:absolute;left:210px;top:67.8px;width:26px;height:2px;background:#e4f4e8;opacity:0.40;border-radius:0.6px"></div>
<div style="position:absolute;left:211px;top:73px;width:24px;height:4px;background:repeating-linear-gradient(90deg,#8cc498 0 1px,transparent 1px 3px);opacity:.45"></div>
<div style="position:absolute;left:240px;top:53.8px;width:26px;height:2px;background:#e4f4e8;opacity:0.43;border-radius:0.6px"></div>
<div style="position:absolute;left:239px;top:57.5px;width:30px;height:7.5px;opacity:.8"><div style="position:absolute;left:0.60px;top:0.0px;width:0.7px;height:7.0px;background:#c8e8ce"></div><div style="position:absolute;left:2.80px;top:0.6px;width:0.7px;height:6.4px;background:#c8e8ce"></div><div style="position:absolute;left:5.00px;top:1.2px;width:0.7px;height:5.8px;background:#c8e8ce"></div><div style="position:absolute;left:7.20px;top:0.0px;width:0.7px;height:7.0px;background:#c8e8ce"></div><div style="position:absolute;left:9.40px;top:0.6px;width:0.7px;height:6.4px;background:#c8e8ce"></div><div style="position:absolute;left:11.60px;top:1.2px;width:0.7px;height:5.8px;background:#c8e8ce"></div><div style="position:absolute;left:13.80px;top:0.0px;width:0.7px;height:7.0px;background:#c8e8ce"></div><div style="position:absolute;left:16.00px;top:0.6px;width:0.7px;height:6.4px;background:#c8e8ce"></div><div style="position:absolute;left:18.20px;top:1.2px;width:0.7px;height:5.8px;background:#c8e8ce"></div><div style="position:absolute;left:20.40px;top:0.0px;width:0.7px;height:7.0px;background:#c8e8ce"></div><div style="position:absolute;left:22.60px;top:0.6px;width:0.7px;height:6.4px;background:#c8e8ce"></div><div style="position:absolute;left:24.80px;top:1.2px;width:0.7px;height:5.8px;background:#c8e8ce"></div><div style="position:absolute;left:27.00px;top:0.0px;width:0.7px;height:7.0px;background:#c8e8ce"></div></div>
<div style="position:absolute;left:240px;top:67.8px;width:26px;height:2px;background:#e4f4e8;opacity:0.40;border-radius:0.6px"></div>
<div style="position:absolute;left:241px;top:73px;width:26px;height:4px;background:repeating-linear-gradient(90deg,#8cc498 0 1px,transparent 1px 3px);opacity:.45"></div>
<div style="position:absolute;left:272px;top:53.8px;width:26px;height:2px;background:#e4f4e8;opacity:0.43;border-radius:0.6px"></div>
<div style="position:absolute;left:271px;top:57.5px;width:30px;height:7.5px;opacity:.8"><div style="position:absolute;left:0.60px;top:0.0px;width:0.7px;height:7.0px;background:#c8e8ce"></div><div style="position:absolute;left:2.80px;top:0.6px;width:0.7px;height:6.4px;background:#c8e8ce"></div><div style="position:absolute;left:5.00px;top:1.2px;width:0.7px;height:5.8px;background:#c8e8ce"></div><div style="position:absolute;left:7.20px;top:0.0px;width:0.7px;height:7.0px;background:#c8e8ce"></div><div style="position:absolute;left:9.40px;top:0.6px;width:0.7px;height:6.4px;background:#c8e8ce"></div><div style="position:absolute;left:11.60px;top:1.2px;width:0.7px;height:5.8px;background:#c8e8ce"></div><div style="position:absolute;left:13.80px;top:0.0px;width:0.7px;height:7.0px;background:#c8e8ce"></div><div style="position:absolute;left:16.00px;top:0.6px;width:0.7px;height:6.4px;background:#c8e8ce"></div><div style="position:absolute;left:18.20px;top:1.2px;width:0.7px;height:5.8px;background:#c8e8ce"></div><div style="position:absolute;left:20.40px;top:0.0px;width:0.7px;height:7.0px;background:#c8e8ce"></div><div style="position:absolute;left:22.60px;top:0.6px;width:0.7px;height:6.4px;background:#c8e8ce"></div><div style="position:absolute;left:24.80px;top:1.2px;width:0.7px;height:5.8px;background:#c8e8ce"></div><div style="position:absolute;left:27.00px;top:0.0px;width:0.7px;height:7.0px;background:#c8e8ce"></div></div>
<div style="position:absolute;left:272px;top:67.8px;width:26px;height:2px;background:#e4f4e8;opacity:0.40;border-radius:0.6px"></div>
<div style="position:absolute;left:273px;top:73px;width:26px;height:4px;background:repeating-linear-gradient(90deg,#8cc498 0 1px,transparent 1px 3px);opacity:.45"></div>
<div style="position:absolute;left:304px;top:53.8px;width:26px;height:2px;background:#e4f4e8;opacity:0.43;border-radius:0.6px"></div>
<div style="position:absolute;left:303px;top:57.5px;width:29px;height:7.5px;opacity:.8"><div style="position:absolute;left:0.60px;top:0.0px;width:0.7px;height:7.0px;background:#c8e8ce"></div><div style="position:absolute;left:2.80px;top:0.6px;width:0.7px;height:6.4px;background:#c8e8ce"></div><div style="position:absolute;left:5.00px;top:1.2px;width:0.7px;height:5.8px;background:#c8e8ce"></div><div style="position:absolute;left:7.20px;top:0.0px;width:0.7px;height:7.0px;background:#c8e8ce"></div><div style="position:absolute;left:9.40px;top:0.6px;width:0.7px;height:6.4px;background:#c8e8ce"></div><div style="position:absolute;left:11.60px;top:1.2px;width:0.7px;height:5.8px;background:#c8e8ce"></div><div style="position:absolute;left:13.80px;top:0.0px;width:0.7px;height:7.0px;background:#c8e8ce"></div><div style="position:absolute;left:16.00px;top:0.6px;width:0.7px;height:6.4px;background:#c8e8ce"></div><div style="position:absolute;left:18.20px;top:1.2px;width:0.7px;height:5.8px;background:#c8e8ce"></div><div style="position:absolute;left:20.40px;top:0.0px;width:0.7px;height:7.0px;background:#c8e8ce"></div><div style="position:absolute;left:22.60px;top:0.6px;width:0.7px;height:6.4px;background:#c8e8ce"></div><div style="position:absolute;left:24.80px;top:1.2px;width:0.7px;height:5.8px;background:#c8e8ce"></div><div style="position:absolute;left:27.00px;top:0.0px;width:0.7px;height:7.0px;background:#c8e8ce"></div></div>
<div style="position:absolute;left:304px;top:67.8px;width:26px;height:2px;background:#e4f4e8;opacity:0.40;border-radius:0.6px"></div>
<div style="position:absolute;left:305px;top:73px;width:25px;height:4px;background:repeating-linear-gradient(90deg,#8cc498 0 1px,transparent 1px 3px);opacity:.45"></div>
<div style="position:absolute;left:335px;top:53.8px;width:26px;height:2px;background:#e4f4e8;opacity:0.43;border-radius:0.6px"></div>
<div style="position:absolute;left:334px;top:57.5px;width:29px;height:7.5px;opacity:.8"><div style="position:absolute;left:0.60px;top:0.0px;width:0.7px;height:7.0px;background:#c8e8ce"></div><div style="position:absolute;left:2.80px;top:0.6px;width:0.7px;height:6.4px;background:#c8e8ce"></div><div style="position:absolute;left:5.00px;top:1.2px;width:0.7px;height:5.8px;background:#c8e8ce"></div><div style="position:absolute;left:7.20px;top:0.0px;width:0.7px;height:7.0px;background:#c8e8ce"></div><div style="position:absolute;left:9.40px;top:0.6px;width:0.7px;height:6.4px;background:#c8e8ce"></div><div style="position:absolute;left:11.60px;top:1.2px;width:0.7px;height:5.8px;background:#c8e8ce"></div><div style="position:absolute;left:13.80px;top:0.0px;width:0.7px;height:7.0px;background:#c8e8ce"></div><div style="position:absolute;left:16.00px;top:0.6px;width:0.7px;height:6.4px;background:#c8e8ce"></div><div style="position:absolute;left:18.20px;top:1.2px;width:0.7px;height:5.8px;background:#c8e8ce"></div><div style="position:absolute;left:20.40px;top:0.0px;width:0.7px;height:7.0px;background:#c8e8ce"></div><div style="position:absolute;left:22.60px;top:0.6px;width:0.7px;height:6.4px;background:#c8e8ce"></div><div style="position:absolute;left:24.80px;top:1.2px;width:0.7px;height:5.8px;background:#c8e8ce"></div><div style="position:absolute;left:27.00px;top:0.0px;width:0.7px;height:7.0px;background:#c8e8ce"></div></div>
<div style="position:absolute;left:335px;top:67.8px;width:26px;height:2px;background:#e4f4e8;opacity:0.40;border-radius:0.6px"></div>
<div style="position:absolute;left:336px;top:73px;width:25px;height:4px;background:repeating-linear-gradient(90deg,#8cc498 0 1px,transparent 1px 3px);opacity:.45"></div>
<div style="position:absolute;left:366px;top:53.8px;width:26px;height:2px;background:#e4f4e8;opacity:0.43;border-radius:0.6px"></div>
<div style="position:absolute;left:365px;top:57.5px;width:30px;height:7.5px;opacity:.8"><div style="position:absolute;left:0.60px;top:0.0px;width:0.7px;height:7.0px;background:#c8e8ce"></div><div style="position:absolute;left:2.80px;top:0.6px;width:0.7px;height:6.4px;background:#c8e8ce"></div><div style="position:absolute;left:5.00px;top:1.2px;width:0.7px;height:5.8px;background:#c8e8ce"></div><div style="position:absolute;left:7.20px;top:0.0px;width:0.7px;height:7.0px;background:#c8e8ce"></div><div style="position:absolute;left:9.40px;top:0.6px;width:0.7px;height:6.4px;background:#c8e8ce"></div><div style="position:absolute;left:11.60px;top:1.2px;width:0.7px;height:5.8px;background:#c8e8ce"></div><div style="position:absolute;left:13.80px;top:0.0px;width:0.7px;height:7.0px;background:#c8e8ce"></div><div style="position:absolute;left:16.00px;top:0.6px;width:0.7px;height:6.4px;background:#c8e8ce"></div><div style="position:absolute;left:18.20px;top:1.2px;width:0.7px;height:5.8px;background:#c8e8ce"></div><div style="position:absolute;left:20.40px;top:0.0px;width:0.7px;height:7.0px;background:#c8e8ce"></div><div style="position:absolute;left:22.60px;top:0.6px;width:0.7px;height:6.4px;background:#c8e8ce"></div><div style="position:absolute;left:24.80px;top:1.2px;width:0.7px;height:5.8px;background:#c8e8ce"></div><div style="position:absolute;left:27.00px;top:0.0px;width:0.7px;height:7.0px;background:#c8e8ce"></div></div>
<div style="position:absolute;left:366px;top:67.8px;width:26px;height:2px;background:#e4f4e8;opacity:0.40;border-radius:0.6px"></div>
<div style="position:absolute;left:367px;top:73px;width:26px;height:4px;background:repeating-linear-gradient(90deg,#8cc498 0 1px,transparent 1px 3px);opacity:.45"></div>
<div style="position:absolute;left:398px;top:53.8px;width:26px;height:2px;background:#e4f4e8;opacity:0.43;border-radius:0.6px"></div>
<div style="position:absolute;left:397px;top:57.5px;width:29px;height:7.5px;opacity:.8"><div style="position:absolute;left:0.60px;top:0.0px;width:0.7px;height:7.0px;background:#c8e8ce"></div><div style="position:absolute;left:2.80px;top:0.6px;width:0.7px;height:6.4px;background:#c8e8ce"></div><div style="position:absolute;left:5.00px;top:1.2px;width:0.7px;height:5.8px;background:#c8e8ce"></div><div style="position:absolute;left:7.20px;top:0.0px;width:0.7px;height:7.0px;background:#c8e8ce"></div><div style="position:absolute;left:9.40px;top:0.6px;width:0.7px;height:6.4px;background:#c8e8ce"></div><div style="position:absolute;left:11.60px;top:1.2px;width:0.7px;height:5.8px;background:#c8e8ce"></div><div style="position:absolute;left:13.80px;top:0.0px;width:0.7px;height:7.0px;background:#c8e8ce"></div><div style="position:absolute;left:16.00px;top:0.6px;width:0.7px;height:6.4px;background:#c8e8ce"></div><div style="position:absolute;left:18.20px;top:1.2px;width:0.7px;height:5.8px;background:#c8e8ce"></div><div style="position:absolute;left:20.40px;top:0.0px;width:0.7px;height:7.0px;background:#c8e8ce"></div><div style="position:absolute;left:22.60px;top:0.6px;width:0.7px;height:6.4px;background:#c8e8ce"></div><div style="position:absolute;left:24.80px;top:1.2px;width:0.7px;height:5.8px;background:#c8e8ce"></div><div style="position:absolute;left:27.00px;top:0.0px;width:0.7px;height:7.0px;background:#c8e8ce"></div></div>
<div style="position:absolute;left:398px;top:67.8px;width:26px;height:2px;background:#e4f4e8;opacity:0.40;border-radius:0.6px"></div>
<div style="position:absolute;left:399px;top:73px;width:25px;height:4px;background:repeating-linear-gradient(90deg,#8cc498 0 1px,transparent 1px 3px);opacity:.45"></div>
<div style="position:absolute;left:429px;top:53.8px;width:26px;height:2px;background:#e4f4e8;opacity:0.43;border-radius:0.6px"></div>
<div style="position:absolute;left:428px;top:57.5px;width:29px;height:7.5px;opacity:.8"><div style="position:absolute;left:0.60px;top:0.0px;width:0.7px;height:7.0px;background:#c8e8ce"></div><div style="position:absolute;left:2.80px;top:0.6px;width:0.7px;height:6.4px;background:#c8e8ce"></div><div style="position:absolute;left:5.00px;top:1.2px;width:0.7px;height:5.8px;background:#c8e8ce"></div><div style="position:absolute;left:7.20px;top:0.0px;width:0.7px;height:7.0px;background:#c8e8ce"></div><div style="position:absolute;left:9.40px;top:0.6px;width:0.7px;height:6.4px;background:#c8e8ce"></div><div style="position:absolute;left:11.60px;top:1.2px;width:0.7px;height:5.8px;background:#c8e8ce"></div><div style="position:absolute;left:13.80px;top:0.0px;width:0.7px;height:7.0px;background:#c8e8ce"></div><div style="position:absolute;left:16.00px;top:0.6px;width:0.7px;height:6.4px;background:#c8e8ce"></div><div style="position:absolute;left:18.20px;top:1.2px;width:0.7px;height:5.8px;background:#c8e8ce"></div><div style="position:absolute;left:20.40px;top:0.0px;width:0.7px;height:7.0px;background:#c8e8ce"></div><div style="position:absolute;left:22.60px;top:0.6px;width:0.7px;height:6.4px;background:#c8e8ce"></div><div style="position:absolute;left:24.80px;top:1.2px;width:0.7px;height:5.8px;background:#c8e8ce"></div><div style="position:absolute;left:27.00px;top:0.0px;width:0.7px;height:7.0px;background:#c8e8ce"></div></div>
<div style="position:absolute;left:429px;top:67.8px;width:26px;height:2px;background:#e4f4e8;opacity:0.40;border-radius:0.6px"></div>
<div style="position:absolute;left:430px;top:73px;width:25px;height:4px;background:repeating-linear-gradient(90deg,#8cc498 0 1px,transparent 1px 3px);opacity:.45"></div>
<div style="position:absolute;left:460px;top:53.8px;width:26px;height:2px;background:#e4f4e8;opacity:0.43;border-radius:0.6px"></div>
<div style="position:absolute;left:459px;top:57.5px;width:30px;height:7.5px;opacity:.8"><div style="position:absolute;left:0.60px;top:0.0px;width:0.7px;height:7.0px;background:#c8e8ce"></div><div style="position:absolute;left:2.80px;top:0.6px;width:0.7px;height:6.4px;background:#c8e8ce"></div><div style="position:absolute;left:5.00px;top:1.2px;width:0.7px;height:5.8px;background:#c8e8ce"></div><div style="position:absolute;left:7.20px;top:0.0px;width:0.7px;height:7.0px;background:#c8e8ce"></div><div style="position:absolute;left:9.40px;top:0.6px;width:0.7px;height:6.4px;background:#c8e8ce"></div><div style="position:absolute;left:11.60px;top:1.2px;width:0.7px;height:5.8px;background:#c8e8ce"></div><div style="position:absolute;left:13.80px;top:0.0px;width:0.7px;height:7.0px;background:#c8e8ce"></div><div style="position:absolute;left:16.00px;top:0.6px;width:0.7px;height:6.4px;background:#c8e8ce"></div><div style="position:absolute;left:18.20px;top:1.2px;width:0.7px;height:5.8px;background:#c8e8ce"></div><div style="position:absolute;left:20.40px;top:0.0px;width:0.7px;height:7.0px;background:#c8e8ce"></div><div style="position:absolute;left:22.60px;top:0.6px;width:0.7px;height:6.4px;background:#c8e8ce"></div><div style="position:absolute;left:24.80px;top:1.2px;width:0.7px;height:5.8px;background:#c8e8ce"></div><div style="position:absolute;left:27.00px;top:0.0px;width:0.7px;height:7.0px;background:#c8e8ce"></div></div>
<div style="position:absolute;left:460px;top:67.8px;width:26px;height:2px;background:#e4f4e8;opacity:0.40;border-radius:0.6px"></div>
<div style="position:absolute;left:461px;top:73px;width:26px;height:4px;background:repeating-linear-gradient(90deg,#8cc498 0 1px,transparent 1px 3px);opacity:.45"></div>
<div style="position:absolute;left:492px;top:53.8px;width:26px;height:2px;background:#e4f4e8;opacity:0.43;border-radius:0.6px"></div>
<div style="position:absolute;left:491px;top:57.5px;width:29px;height:7.5px;opacity:.8"><div style="position:absolute;left:0.60px;top:0.0px;width:0.7px;height:7.0px;background:#c8e8ce"></div><div style="position:absolute;left:2.80px;top:0.6px;width:0.7px;height:6.4px;background:#c8e8ce"></div><div style="position:absolute;left:5.00px;top:1.2px;width:0.7px;height:5.8px;background:#c8e8ce"></div><div style="position:absolute;left:7.20px;top:0.0px;width:0.7px;height:7.0px;background:#c8e8ce"></div><div style="position:absolute;left:9.40px;top:0.6px;width:0.7px;height:6.4px;background:#c8e8ce"></div><div style="position:absolute;left:11.60px;top:1.2px;width:0.7px;height:5.8px;background:#c8e8ce"></div><div style="position:absolute;left:13.80px;top:0.0px;width:0.7px;height:7.0px;background:#c8e8ce"></div><div style="position:absolute;left:16.00px;top:0.6px;width:0.7px;height:6.4px;background:#c8e8ce"></div><div style="position:absolute;left:18.20px;top:1.2px;width:0.7px;height:5.8px;background:#c8e8ce"></div><div style="position:absolute;left:20.40px;top:0.0px;width:0.7px;height:7.0px;background:#c8e8ce"></div><div style="position:absolute;left:22.60px;top:0.6px;width:0.7px;height:6.4px;background:#c8e8ce"></div><div style="position:absolute;left:24.80px;top:1.2px;width:0.7px;height:5.8px;background:#c8e8ce"></div><div style="position:absolute;left:27.00px;top:0.0px;width:0.7px;height:7.0px;background:#c8e8ce"></div></div>
<div style="position:absolute;left:492px;top:67.8px;width:26px;height:2px;background:#e4f4e8;opacity:0.40;border-radius:0.6px"></div>
<div style="position:absolute;left:493px;top:73px;width:25px;height:4px;background:repeating-linear-gradient(90deg,#8cc498 0 1px,transparent 1px 3px);opacity:.45"></div>
<div style="position:absolute;left:141px;top:52px;width:1px;height:28px;background:#355a3e;"></div>
<div style="position:absolute;left:172px;top:52px;width:1px;height:28px;background:#355a3e;"></div>
<div style="position:absolute;left:208px;top:52px;width:1px;height:28px;background:#355a3e;"></div>
<div style="position:absolute;left:238px;top:52px;width:1px;height:28px;background:#355a3e;"></div>
<div style="position:absolute;left:270px;top:52px;width:1px;height:28px;background:#355a3e;"></div>
<div style="position:absolute;left:302px;top:52px;width:1px;height:28px;background:#355a3e;"></div>
<div style="position:absolute;left:333px;top:52px;width:1px;height:28px;background:#355a3e;"></div>
<div style="position:absolute;left:364px;top:52px;width:1px;height:28px;background:#355a3e;"></div>
<div style="position:absolute;left:396px;top:52px;width:1px;height:28px;background:#355a3e;"></div>
<div style="position:absolute;left:427px;top:52px;width:1px;height:28px;background:#355a3e;"></div>
<div style="position:absolute;left:458px;top:52px;width:1px;height:28px;background:#355a3e;"></div>
<div style="position:absolute;left:490px;top:52px;width:1px;height:28px;background:#355a3e;"></div>
<div style="position:absolute;left:521px;top:52px;width:1px;height:28px;background:#355a3e;"></div>
<div style="position:absolute;left:396px;top:80px;width:62px;height:53.5px;background:#6db57c;"></div>
<div style="position:absolute;left:396px;top:80px;width:62px;height:5.5px;background:#3a5a40;"></div>
<div style="position:absolute;left:397.5px;top:81.6px;width:27px;height:2.3px;background:#f4f4f4;opacity:0.58;border-radius:0.6px"></div>
<div style="position:absolute;left:428.5px;top:81.6px;width:27px;height:2.3px;background:#f4f4f4;opacity:0.58;border-radius:0.6px"></div>
<div style="position:absolute;left:396px;top:80px;width:1px;height:53.5px;background:#355a3e;"></div>
<div style="position:absolute;left:427px;top:80px;width:1px;height:53.5px;background:#355a3e;"></div>
<div style="position:absolute;left:458px;top:80px;width:1px;height:53.5px;background:#355a3e;"></div>
<div style="position:absolute;left:396px;top:133px;width:63px;height:1px;background:#355a3e;"></div>
<div style="position:absolute;left:521px;top:80px;width:4px;height:53.5px;background:#6db57c;"></div>
<div style="position:absolute;left:521px;top:80px;width:1px;height:53.5px;background:#355a3e;"></div>
<div style="position:absolute;left:164px;top:135.5px;width:44px;height:12.5px;background:#6db57c;"></div>
<div style="position:absolute;left:164px;top:135.5px;width:45px;height:1px;background:#355a3e;"></div>
<div style="position:absolute;left:164px;top:147.5px;width:45px;height:1px;background:#355a3e;"></div>
<div style="position:absolute;left:164px;top:135.5px;width:1px;height:12.5px;background:#355a3e;"></div>
<div style="position:absolute;left:208px;top:135.5px;width:1px;height:12.5px;background:#355a3e;"></div>
<div style="position:absolute;left:166px;top:137px;width:20px;height:2px;background:#e4f4e8;opacity:0.40;border-radius:0.6px"></div>
<div style="position:absolute;left:198px;top:143px;width:4px;height:4px;background:#e0f0e4;opacity:.6"></div>
<div style="position:absolute;left:172px;top:149px;width:286px;height:28px;background:#6db57c;"></div>
<div style="position:absolute;left:172px;top:149px;width:287px;height:1px;background:#355a3e;"></div>
<div style="position:absolute;left:172px;top:163px;width:287px;height:1px;background:#355a3e;"></div>
<div style="position:absolute;left:172px;top:177px;width:287px;height:1px;background:#355a3e;"></div>
<div style="position:absolute;left:172px;top:149px;width:1px;height:14px;background:#355a3e;"></div>
<div style="position:absolute;left:208px;top:149px;width:1px;height:14px;background:#355a3e;"></div>
<div style="position:absolute;left:238px;top:149px;width:1px;height:14px;background:#355a3e;"></div>
<div style="position:absolute;left:270px;top:149px;width:1px;height:14px;background:#355a3e;"></div>
<div style="position:absolute;left:302px;top:149px;width:1px;height:14px;background:#355a3e;"></div>
<div style="position:absolute;left:333px;top:149px;width:1px;height:14px;background:#355a3e;"></div>
<div style="position:absolute;left:364px;top:149px;width:1px;height:14px;background:#355a3e;"></div>
<div style="position:absolute;left:396px;top:149px;width:1px;height:14px;background:#355a3e;"></div>
<div style="position:absolute;left:427px;top:149px;width:1px;height:14px;background:#355a3e;"></div>
<div style="position:absolute;left:458px;top:149px;width:1px;height:14px;background:#355a3e;"></div>
<div style="position:absolute;left:174px;top:150.5px;width:24px;height:2px;background:#e4f4e8;opacity:0.40;border-radius:0.6px"></div>
<div style="position:absolute;left:175px;top:155px;width:29.0px;height:5px;background:repeating-linear-gradient(90deg,#8cc498 0 1px,transparent 1px 2.5px);opacity:.4"></div>
<div style="position:absolute;left:210px;top:150.5px;width:24px;height:2px;background:#e4f4e8;opacity:0.40;border-radius:0.6px"></div>
<div style="position:absolute;left:211px;top:155px;width:25.0px;height:5px;background:repeating-linear-gradient(90deg,#8cc498 0 1px,transparent 1px 2.5px);opacity:.4"></div>
<div style="position:absolute;left:240px;top:150.5px;width:24px;height:2px;background:#e4f4e8;opacity:0.40;border-radius:0.6px"></div>
<div style="position:absolute;left:241px;top:155px;width:25.5px;height:5px;background:repeating-linear-gradient(90deg,#8cc498 0 1px,transparent 1px 2.5px);opacity:.4"></div>
<div style="position:absolute;left:272px;top:150.5px;width:24px;height:2px;background:#e4f4e8;opacity:0.40;border-radius:0.6px"></div>
<div style="position:absolute;left:273px;top:155px;width:26px;height:5px;background:repeating-linear-gradient(90deg,#8cc498 0 1px,transparent 1px 2.5px);opacity:.4"></div>
<div style="position:absolute;left:304px;top:150.5px;width:24px;height:2px;background:#e4f4e8;opacity:0.40;border-radius:0.6px"></div>
<div style="position:absolute;left:305px;top:155px;width:25px;height:5px;background:repeating-linear-gradient(90deg,#8cc498 0 1px,transparent 1px 2.5px);opacity:.4"></div>
<div style="position:absolute;left:335px;top:150.5px;width:24px;height:2px;background:#e4f4e8;opacity:0.40;border-radius:0.6px"></div>
<div style="position:absolute;left:336px;top:155px;width:25.5px;height:5px;background:repeating-linear-gradient(90deg,#8cc498 0 1px,transparent 1px 2.5px);opacity:.4"></div>
<div style="position:absolute;left:366px;top:150.5px;width:24px;height:2px;background:#e4f4e8;opacity:0.40;border-radius:0.6px"></div>
<div style="position:absolute;left:367px;top:155px;width:25.5px;height:5px;background:repeating-linear-gradient(90deg,#8cc498 0 1px,transparent 1px 2.5px);opacity:.4"></div>
<div style="position:absolute;left:398px;top:150.5px;width:24px;height:2px;background:#e4f4e8;opacity:0.40;border-radius:0.6px"></div>
<div style="position:absolute;left:399px;top:155px;width:25px;height:5px;background:repeating-linear-gradient(90deg,#8cc498 0 1px,transparent 1px 2.5px);opacity:.4"></div>
<div style="position:absolute;left:429px;top:150.5px;width:24px;height:2px;background:#e4f4e8;opacity:0.40;border-radius:0.6px"></div>
<div style="position:absolute;left:430px;top:155px;width:25px;height:5px;background:repeating-linear-gradient(90deg,#8cc498 0 1px,transparent 1px 2.5px);opacity:.4"></div>
<div style="position:absolute;left:172px;top:163px;width:1px;height:14px;background:#355a3e;"></div>
<div style="position:absolute;left:208px;top:163px;width:1px;height:14px;background:#355a3e;"></div>
<div style="position:absolute;left:224px;top:163px;width:1px;height:14px;background:#355a3e;"></div>
<div style="position:absolute;left:238px;top:163px;width:1px;height:14px;background:#355a3e;"></div>
<div style="position:absolute;left:254px;top:163px;width:1px;height:14px;background:#355a3e;"></div>
<div style="position:absolute;left:270px;top:163px;width:1px;height:14px;background:#355a3e;"></div>
<div style="position:absolute;left:286px;top:163px;width:1px;height:14px;background:#355a3e;"></div>
<div style="position:absolute;left:302px;top:163px;width:1px;height:14px;background:#355a3e;"></div>
<div style="position:absolute;left:318px;top:163px;width:1px;height:14px;background:#355a3e;"></div>
<div style="position:absolute;left:333px;top:163px;width:1px;height:14px;background:#355a3e;"></div>
<div style="position:absolute;left:349px;top:163px;width:1px;height:14px;background:#355a3e;"></div>
<div style="position:absolute;left:364px;top:163px;width:1px;height:14px;background:#355a3e;"></div>
<div style="position:absolute;left:380px;top:163px;width:1px;height:14px;background:#355a3e;"></div>
<div style="position:absolute;left:396px;top:163px;width:1px;height:14px;background:#355a3e;"></div>
<div style="position:absolute;left:412px;top:163px;width:1px;height:14px;background:#355a3e;"></div>
<div style="position:absolute;left:427px;top:163px;width:1px;height:14px;background:#355a3e;"></div>
<div style="position:absolute;left:442px;top:163px;width:1px;height:14px;background:#355a3e;"></div>
<div style="position:absolute;left:458px;top:163px;width:1px;height:14px;background:#355a3e;"></div>
<div style="position:absolute;left:174px;top:164.5px;width:20px;height:2px;background:#e4f4e8;opacity:0.40;border-radius:0.6px"></div>
<div style="position:absolute;left:210px;top:164.5px;width:12.0px;height:2px;background:#e4f4e8;opacity:0.40;border-radius:0.6px"></div>
<div style="position:absolute;left:226px;top:164.5px;width:11.0px;height:2px;background:#e4f4e8;opacity:0.40;border-radius:0.6px"></div>
<div style="position:absolute;left:240px;top:164.5px;width:11.5px;height:2px;background:#e4f4e8;opacity:0.40;border-radius:0.6px"></div>
<div style="position:absolute;left:256px;top:164.5px;width:12px;height:2px;background:#e4f4e8;opacity:0.40;border-radius:0.6px"></div>
<div style="position:absolute;left:272px;top:164.5px;width:12px;height:2px;background:#e4f4e8;opacity:0.40;border-radius:0.6px"></div>
<div style="position:absolute;left:288px;top:164.5px;width:12px;height:2px;background:#e4f4e8;opacity:0.40;border-radius:0.6px"></div>
<div style="position:absolute;left:304px;top:164.5px;width:11.5px;height:2px;background:#e4f4e8;opacity:0.40;border-radius:0.6px"></div>
<div style="position:absolute;left:320px;top:164.5px;width:11.5px;height:2px;background:#e4f4e8;opacity:0.40;border-radius:0.6px"></div>
<div style="position:absolute;left:335px;top:164.5px;width:12px;height:2px;background:#e4f4e8;opacity:0.40;border-radius:0.6px"></div>
<div style="position:absolute;left:351px;top:164.5px;width:11.5px;height:2px;background:#e4f4e8;opacity:0.40;border-radius:0.6px"></div>
<div style="position:absolute;left:366px;top:164.5px;width:11.5px;height:2px;background:#e4f4e8;opacity:0.40;border-radius:0.6px"></div>
<div style="position:absolute;left:382px;top:164.5px;width:12px;height:2px;background:#e4f4e8;opacity:0.40;border-radius:0.6px"></div>
<div style="position:absolute;left:398px;top:164.5px;width:11.5px;height:2px;background:#e4f4e8;opacity:0.40;border-radius:0.6px"></div>
<div style="position:absolute;left:414px;top:164.5px;width:11.5px;height:2px;background:#e4f4e8;opacity:0.40;border-radius:0.6px"></div>
<div style="position:absolute;left:429px;top:164.5px;width:11.5px;height:2px;background:#e4f4e8;opacity:0.40;border-radius:0.6px"></div>
<div style="position:absolute;left:444px;top:164.5px;width:11.5px;height:2px;background:#e4f4e8;opacity:0.40;border-radius:0.6px"></div>
<div style="position:absolute;left:521px;top:149px;width:4px;height:28px;background:#6db57c;"></div>
<div style="position:absolute;left:521px;top:163px;width:5px;height:1px;background:#355a3e;"></div>
<div style="position:absolute;left:521px;top:149px;width:1px;height:28px;background:#355a3e;"></div>
<div style="position:absolute;left:168px;top:177.5px;width:290px;height:10.5px;background:repeating-linear-gradient(90deg,#4e4e4e 0 1px,#3c3c3c 1px 2px);"></div>
<div style="position:absolute;left:168px;top:177.5px;width:4px;height:10.5px;background:#6db57c;"></div>
<div style="position:absolute;left:205px;top:177.5px;width:3px;height:10.5px;background:#6db57c;"></div>
<div style="position:absolute;left:208px;top:177.5px;width:4px;height:10.5px;background:#6db57c;"></div>
<div style="position:absolute;left:235px;top:177.5px;width:3px;height:10.5px;background:#6db57c;"></div>
<div style="position:absolute;left:238px;top:177.5px;width:4px;height:10.5px;background:#6db57c;"></div>
<div style="position:absolute;left:267px;top:177.5px;width:3px;height:10.5px;background:#6db57c;"></div>
<div style="position:absolute;left:270px;top:177.5px;width:4px;height:10.5px;background:#6db57c;"></div>
<div style="position:absolute;left:299px;top:177.5px;width:3px;height:10.5px;background:#6db57c;"></div>
<div style="position:absolute;left:302px;top:177.5px;width:4px;height:10.5px;background:#6db57c;"></div>
<div style="position:absolute;left:330px;top:177.5px;width:3px;height:10.5px;background:#6db57c;"></div>
<div style="position:absolute;left:333px;top:177.5px;width:4px;height:10.5px;background:#6db57c;"></div>
<div style="position:absolute;left:361px;top:177.5px;width:3px;height:10.5px;background:#6db57c;"></div>
<div style="position:absolute;left:364px;top:177.5px;width:4px;height:10.5px;background:#6db57c;"></div>
<div style="position:absolute;left:393px;top:177.5px;width:3px;height:10.5px;background:#6db57c;"></div>
<div style="position:absolute;left:396px;top:177.5px;width:4px;height:10.5px;background:#6db57c;"></div>
<div style="position:absolute;left:424px;top:177.5px;width:3px;height:10.5px;background:#6db57c;"></div>
<div style="position:absolute;left:427px;top:177.5px;width:4px;height:10.5px;background:#6db57c;"></div>
<div style="position:absolute;left:455px;top:177.5px;width:3px;height:10.5px;background:#6db57c;"></div>
<div style="position:absolute;left:168px;top:177.5px;width:1px;height:10.5px;background:#355a3e;"></div>
<div style="position:absolute;left:208px;top:177.5px;width:1px;height:10.5px;background:#355a3e;"></div>
<div style="position:absolute;left:238px;top:177.5px;width:1px;height:10.5px;background:#355a3e;"></div>
<div style="position:absolute;left:270px;top:177.5px;width:1px;height:10.5px;background:#355a3e;"></div>
<div style="position:absolute;left:302px;top:177.5px;width:1px;height:10.5px;background:#355a3e;"></div>
<div style="position:absolute;left:333px;top:177.5px;width:1px;height:10.5px;background:#355a3e;"></div>
<div style="position:absolute;left:364px;top:177.5px;width:1px;height:10.5px;background:#355a3e;"></div>
<div style="position:absolute;left:396px;top:177.5px;width:1px;height:10.5px;background:#355a3e;"></div>
<div style="position:absolute;left:427px;top:177.5px;width:1px;height:10.5px;background:#355a3e;"></div>
<div style="position:absolute;left:458px;top:177.5px;width:1px;height:10.5px;background:#355a3e;"></div>
<div style="position:absolute;left:168px;top:177.5px;width:290px;height:0.8px;background:#6db57c;"></div>
<div style="position:absolute;left:168px;top:187.2px;width:290px;height:0.8px;background:#6db57c;"></div>
<div style="position:absolute;left:517px;top:177.5px;width:8px;height:10.5px;background:#6db57c;"></div>
<div style="position:absolute;left:517px;top:177.5px;width:1px;height:10.5px;background:#355a3e;"></div>
<div style="position:absolute;left:141px;top:39px;width:0.5px;height:6px;background:#7a7a7a;"></div>
<div style="position:absolute;left:142.5px;top:40.4px;width:1.5px;height:2.1px;background:#d0d0d0;opacity:0.50;border-radius:0.6px"></div>
<div style="position:absolute;left:156.75px;top:39px;width:0.5px;height:6px;background:#7a7a7a;"></div>
<div style="position:absolute;left:158.25px;top:40.4px;width:1.5px;height:2.1px;background:#d0d0d0;opacity:0.50;border-radius:0.6px"></div>
<div style="position:absolute;left:172.5px;top:39px;width:0.5px;height:6px;background:#7a7a7a;"></div>
<div style="position:absolute;left:174.0px;top:40.4px;width:1.5px;height:2.1px;background:#d0d0d0;opacity:0.50;border-radius:0.6px"></div>
<div style="position:absolute;left:190.0px;top:39px;width:0.5px;height:6px;background:#7a7a7a;"></div>
<div style="position:absolute;left:191.5px;top:40.4px;width:3.0px;height:2.1px;background:#d0d0d0;opacity:0.50;border-radius:0.6px"></div>
<div style="position:absolute;left:207.5px;top:39px;width:0.5px;height:6px;background:#7a7a7a;"></div>
<div style="position:absolute;left:209.0px;top:40.4px;width:3.0px;height:2.1px;background:#d0d0d0;opacity:0.50;border-radius:0.6px"></div>
<div style="position:absolute;left:223.0px;top:39px;width:0.5px;height:6px;background:#7a7a7a;"></div>
<div style="position:absolute;left:224.5px;top:40.4px;width:3.0px;height:2.1px;background:#d0d0d0;opacity:0.50;border-radius:0.6px"></div>
<div style="position:absolute;left:238.5px;top:39px;width:0.5px;height:6px;background:#7a7a7a;"></div>
<div style="position:absolute;left:240.0px;top:40.4px;width:3.0px;height:2.1px;background:#d0d0d0;opacity:0.50;border-radius:0.6px"></div>
<div style="position:absolute;left:254.25px;top:39px;width:0.5px;height:6px;background:#7a7a7a;"></div>
<div style="position:absolute;left:255.75px;top:40.4px;width:3.0px;height:2.1px;background:#d0d0d0;opacity:0.50;border-radius:0.6px"></div>
<div style="position:absolute;left:270px;top:39px;width:0.5px;height:6px;background:#7a7a7a;"></div>
<div style="position:absolute;left:271.5px;top:40.4px;width:3.0px;height:2.1px;background:#d0d0d0;opacity:0.50;border-radius:0.6px"></div>
<div style="position:absolute;left:286.0px;top:39px;width:0.5px;height:6px;background:#7a7a7a;"></div>
<div style="position:absolute;left:287.5px;top:40.4px;width:3.0px;height:2.1px;background:#d0d0d0;opacity:0.50;border-radius:0.6px"></div>
<div style="position:absolute;left:302px;top:39px;width:0.5px;height:6px;background:#7a7a7a;"></div>
<div style="position:absolute;left:303.5px;top:40.4px;width:3.0px;height:2.1px;background:#d0d0d0;opacity:0.50;border-radius:0.6px"></div>
<div style="position:absolute;left:317.5px;top:39px;width:0.5px;height:6px;background:#7a7a7a;"></div>
<div style="position:absolute;left:319.0px;top:40.4px;width:3.0px;height:2.1px;background:#d0d0d0;opacity:0.50;border-radius:0.6px"></div>
<div style="position:absolute;left:333px;top:39px;width:0.5px;height:6px;background:#7a7a7a;"></div>
<div style="position:absolute;left:334.5px;top:40.4px;width:3.0px;height:2.1px;background:#d0d0d0;opacity:0.50;border-radius:0.6px"></div>
<div style="position:absolute;left:348.75px;top:39px;width:0.5px;height:6px;background:#7a7a7a;"></div>
<div style="position:absolute;left:350.25px;top:40.4px;width:3.0px;height:2.1px;background:#d0d0d0;opacity:0.50;border-radius:0.6px"></div>
<div style="position:absolute;left:364.5px;top:39px;width:0.5px;height:6px;background:#7a7a7a;"></div>
<div style="position:absolute;left:366.0px;top:40.4px;width:3.0px;height:2.1px;background:#d0d0d0;opacity:0.50;border-radius:0.6px"></div>
<div style="position:absolute;left:380.25px;top:39px;width:0.5px;height:6px;background:#7a7a7a;"></div>
<div style="position:absolute;left:381.75px;top:40.4px;width:3.0px;height:2.1px;background:#d0d0d0;opacity:0.50;border-radius:0.6px"></div>
<div style="position:absolute;left:396px;top:39px;width:0.5px;height:6px;background:#7a7a7a;"></div>
<div style="position:absolute;left:397.5px;top:40.4px;width:3.0px;height:2.1px;background:#d0d0d0;opacity:0.50;border-radius:0.6px"></div>
<div style="position:absolute;left:411.5px;top:39px;width:0.5px;height:6px;background:#7a7a7a;"></div>
<div style="position:absolute;left:413.0px;top:40.4px;width:3.0px;height:2.1px;background:#d0d0d0;opacity:0.50;border-radius:0.6px"></div>
<div style="position:absolute;left:427px;top:39px;width:0.5px;height:6px;background:#7a7a7a;"></div>
<div style="position:absolute;left:428.5px;top:40.4px;width:3.0px;height:2.1px;background:#d0d0d0;opacity:0.50;border-radius:0.6px"></div>
<div style="position:absolute;left:442.5px;top:39px;width:0.5px;height:6px;background:#7a7a7a;"></div>
<div style="position:absolute;left:444.0px;top:40.4px;width:3.0px;height:2.1px;background:#d0d0d0;opacity:0.50;border-radius:0.6px"></div>
<div style="position:absolute;left:458px;top:39px;width:0.5px;height:6px;background:#7a7a7a;"></div>
<div style="position:absolute;left:459.5px;top:40.4px;width:3.0px;height:2.1px;background:#d0d0d0;opacity:0.50;border-radius:0.6px"></div>
<div style="position:absolute;left:473.75px;top:39px;width:0.5px;height:6px;background:#7a7a7a;"></div>
<div style="position:absolute;left:475.25px;top:40.4px;width:3.0px;height:2.1px;background:#d0d0d0;opacity:0.50;border-radius:0.6px"></div>
<div style="position:absolute;left:489.5px;top:39px;width:0.5px;height:6px;background:#7a7a7a;"></div>
<div style="position:absolute;left:491.0px;top:40.4px;width:3.0px;height:2.1px;background:#d0d0d0;opacity:0.50;border-radius:0.6px"></div>
<div style="position:absolute;left:505.25px;top:39px;width:0.5px;height:6px;background:#7a7a7a;"></div>
<div style="position:absolute;left:506.75px;top:40.4px;width:3.0px;height:2.1px;background:#d0d0d0;opacity:0.50;border-radius:0.6px"></div>
<div style="position:absolute;left:521px;top:39px;width:0.5px;height:6px;background:#7a7a7a;"></div>
<div style="position:absolute;left:522.5px;top:40.4px;width:3.0px;height:2.1px;background:#d0d0d0;opacity:0.50;border-radius:0.6px"></div>
<div style="position:absolute;left:63px;top:188px;width:465px;height:6px;background:#c8c8c8;"></div>
<div style="position:absolute;left:63px;top:193.3px;width:465px;height:0.8px;background:#9a9a9a;"></div>
<div style="position:absolute;left:141px;top:189.2px;width:336px;height:3.8px;background:linear-gradient(#ffffff,#dcdcdc);border-radius:2px;border:0.5px solid #9a9a9a;"></div>
<div style="position:absolute;left:478px;top:189px;width:8px;height:4px;background:#ddd;border:0.5px solid #999;"></div>
<div style="position:absolute;left:490px;top:189px;width:12px;height:4px;background:#ddd;border:0.5px solid #999;"></div>
<div style="position:absolute;left:504px;top:189px;width:20px;height:4px;background:#e8e8e8;border:0.5px solid #999;"></div>
<div style="position:absolute;left:139px;top:188px;width:1.5px;height:5px;background:#555;"></div>
<div style="position:absolute;left:525px;top:38px;width:5px;height:150px;background:linear-gradient(90deg,#d8d8d8,#f0f0f0);border-left:0.5px solid #999;"></div>
<div style="position:absolute;left:525.5px;top:150px;width:4px;height:38px;background:#d0d0d0;"></div>
<div style="position:absolute;left:63px;top:194px;width:465px;height:13px;background:linear-gradient(#d8d8d8,#cacaca);"></div>
<div style="position:absolute;left:63px;top:206px;width:465px;height:1px;background:#6a6a6a;"></div>
<div style="position:absolute;left:70.5px;top:200.5px;width:3.5px;height:3px;background:linear-gradient(135deg,#555 40%,transparent 45%);opacity:.7"></div>
<div style="position:absolute;left:79.5px;top:199.3px;width:9px;height:5px;background:radial-gradient(#c8b0f0,#8060c8);border:0.5px solid #5a40a0;border-radius:1px;"></div>
<div style="position:absolute;left:82px;top:200.8px;width:4px;height:2px;background:#f0f0ff;"></div>
<div style="position:absolute;left:93px;top:199.5px;width:41.5px;height:4.8px;background:linear-gradient(#f4f4f4,#e0e0e0);border:0.4px solid #b0b0b0;border-radius:1px;"></div>
<div style="position:absolute;left:95px;top:200.9px;width:14px;height:2px;background:#333;opacity:0.65;border-radius:0.6px"></div>
<div style="position:absolute;left:112px;top:201.2px;width:2px;height:1.8px;background:#333;clip-path:polygon(0 0,100% 0,50% 100%);"></div>
<div style="position:absolute;left:117.5px;top:199.8px;width:0.5px;height:4.2px;background:#aaa;"></div>
<div style="position:absolute;left:120px;top:200.9px;width:7px;height:2px;background:#333;opacity:0.65;border-radius:0.6px"></div>
<div style="position:absolute;left:130px;top:201.2px;width:2px;height:1.8px;background:#333;clip-path:polygon(0 0,100% 0,50% 100%);"></div>
<div style="position:absolute;left:303.5px;top:199.5px;width:40px;height:4.8px;background:linear-gradient(#fafafa,#e0e0e0);box-shadow:0 0 0 0.5px #aaa;border-radius:1px;"></div>
<div style="position:absolute;left:306px;top:200.9px;width:15px;height:2px;background:#444;opacity:0.61;border-radius:0.6px"></div>
<div style="position:absolute;left:324px;top:199.8px;width:0.5px;height:4.2px;background:#aaa;"></div>
<div style="position:absolute;left:328px;top:200.9px;width:12px;height:2px;background:#666;opacity:0.50;border-radius:0.6px"></div>
<div style="position:absolute;left:345px;top:199.5px;width:17px;height:4.8px;background:linear-gradient(#d0dcf8,#a8c0ec);box-shadow:0 0 0 0.5px #7a98d0;border-radius:1px;"></div>
<div style="position:absolute;left:348.5px;top:200.9px;width:10px;height:2px;background:#223;opacity:0.61;border-radius:0.6px"></div>
<div style="position:absolute;left:364.7px;top:199.5px;width:125.3px;height:4.8px;background:linear-gradient(#d0dcf8,#a8c0ec);box-shadow:0 0 0 0.5px #7a98d0;border-radius:1px;"></div>
<div style="position:absolute;left:368px;top:201px;width:13px;height:2px;background:#1a2040;opacity:0.47;border-radius:0.6px"></div>
<div style="position:absolute;left:388px;top:201px;width:7px;height:2px;background:#1a2040;opacity:0.47;border-radius:0.6px"></div>
<div style="position:absolute;left:402px;top:201px;width:7px;height:2px;background:#1a2040;opacity:0.47;border-radius:0.6px"></div>
<div style="position:absolute;left:415px;top:201px;width:7px;height:2px;background:#1a2040;opacity:0.47;border-radius:0.6px"></div>
<div style="position:absolute;left:428px;top:201px;width:9px;height:2px;background:#1a2040;opacity:0.47;border-radius:0.6px"></div>
<div style="position:absolute;left:443px;top:201px;width:11px;height:2px;background:#1a2040;opacity:0.47;border-radius:0.6px"></div>
<div style="position:absolute;left:460px;top:201px;width:13px;height:2px;background:#1a2040;opacity:0.47;border-radius:0.6px"></div>
<div style="position:absolute;left:480px;top:201px;width:9px;height:2px;background:#1a2040;opacity:0.47;border-radius:0.6px"></div>
<div style="position:absolute;left:385px;top:199.8px;width:0.5px;height:4.2px;background:#8aa0d0;"></div>
<div style="position:absolute;left:398.5px;top:199.8px;width:0.5px;height:4.2px;background:#8aa0d0;"></div>
<div style="position:absolute;left:412.5px;top:199.8px;width:0.5px;height:4.2px;background:#8aa0d0;"></div>
<div style="position:absolute;left:425.5px;top:199.8px;width:0.5px;height:4.2px;background:#8aa0d0;"></div>
<div style="position:absolute;left:440px;top:199.8px;width:0.5px;height:4.2px;background:#8aa0d0;"></div>
<div style="position:absolute;left:457px;top:199.8px;width:0.5px;height:4.2px;background:#8aa0d0;"></div>
<div style="position:absolute;left:477.5px;top:199.8px;width:0.5px;height:4.2px;background:#8aa0d0;"></div>
<div style="position:absolute;left:497.7px;top:198.5px;width:27.3px;height:6.8px;background:linear-gradient(#fafafa,#dedede);border:0.5px solid #999;border-radius:1px;"></div>
<div style="position:absolute;left:500px;top:200px;width:4px;height:3.5px;background:linear-gradient(135deg,#222 45%,transparent 50%);"></div>
<div style="position:absolute;left:507.5px;top:199.7px;width:4.5px;height:4.5px;border-radius:50%;border:0.8px solid #333;"></div>
<div style="position:absolute;left:516.5px;top:199.7px;width:4.5px;height:4.5px;border-radius:50%;border:0.8px solid #333;"></div>
<div style="position:absolute;left:63px;top:207px;width:461px;height:186.5px;background:#545454;"></div>
<div style="position:absolute;left:524px;top:207px;width:4px;height:186.5px;background:linear-gradient(90deg,#b8b8b8,#dadada);"></div>
<div style="position:absolute;left:63px;top:393.5px;width:465px;height:4px;background:#c2c2c2;"></div>
<div style="position:absolute;left:63px;top:207px;width:13px;height:186.5px;background:#454545;"></div>
<div style="position:absolute;left:75.0px;top:207px;width:24.65px;height:186.5px;background:#5a5a5a;"></div>
<div style="position:absolute;left:99.0px;top:207px;width:0.8px;height:186.5px;background:#484848;"></div>
<div style="position:absolute;left:76.8px;top:209.3px;width:21.4px;height:4.5px;background:linear-gradient(#ececec,#d0d0d0);box-shadow:0 0 0 0.5px #333;"></div>
<div class="t" style="left:76.5px;top:209.89px;line-height:1.3;width:22px;font-size:3.4px;color:#111;text-align:center;overflow:hidden;font-weight:bold;text-shadow:0 0 0.25px #111;opacity:1">Yamaha A...</div>
<div style="position:absolute;left:76.5px;top:216px;width:22px;height:8px;background:#1c2026;border:0.5px solid #0e0e0e;"></div>
<div class="t" style="left:76.5px;top:225.44px;line-height:1.3;width:22px;font-size:3.7px;color:#dedede;text-align:center;overflow:hidden;font-weight:bold;text-shadow:0 0 0.25px #dedede;opacity:1">Inserts</div>
<div style="position:absolute;left:76.8px;top:229.7px;width:21.4px;height:4.6px;background:linear-gradient(#a8ecf8,#70cce0);box-shadow:0 0 0 0.5px #d8f4f8,0 0 0 1px #3a7a88;"></div>
<div class="t" style="left:76.5px;top:230.34px;line-height:1.3;width:22px;font-size:3.7px;color:#0a2a34;text-align:center;overflow:hidden;font-weight:bold;text-shadow:0 0 0.25px #0a2a34;opacity:1">Channel EQ</div>
<div style="position:absolute;left:76.8px;top:235.79999999999998px;width:21.4px;height:4.6px;background:linear-gradient(#a8ecf8,#70cce0);box-shadow:0 0 0 0.5px #d8f4f8,0 0 0 1px #3a7a88;"></div>
<div class="t" style="left:76.5px;top:236.44px;line-height:1.3;width:22px;font-size:3.7px;color:#0a2a34;text-align:center;overflow:hidden;font-weight:bold;text-shadow:0 0 0.25px #0a2a34;opacity:1">Compressor</div>
<div style="position:absolute;left:76.8px;top:241.89999999999998px;width:21.4px;height:4.6px;background:linear-gradient(#a8ecf8,#70cce0);box-shadow:0 0 0 0.5px #d8f4f8,0 0 0 1px #3a7a88;"></div>
<div class="t" style="left:76.5px;top:242.54px;line-height:1.3;width:22px;font-size:3.7px;color:#0a2a34;text-align:center;overflow:hidden;font-weight:bold;text-shadow:0 0 0.25px #0a2a34;opacity:1">Limiter</div>
<div style="position:absolute;left:76.8px;top:248.0px;width:21.4px;height:4.6px;background:linear-gradient(#a8ecf8,#70cce0);box-shadow:0 0 0 0.5px #d8f4f8,0 0 0 1px #3a7a88;"></div>
<div class="t" style="left:76.5px;top:248.65px;line-height:1.3;width:22px;font-size:3.7px;color:#0a2a34;text-align:center;overflow:hidden;font-weight:bold;text-shadow:0 0 0.25px #0a2a34;opacity:1">Ensemble</div>
<div style="position:absolute;left:76.8px;top:254.1px;width:21.4px;height:4.6px;background:linear-gradient(#a8ecf8,#70cce0);box-shadow:0 0 0 0.5px #d8f4f8,0 0 0 1px #3a7a88;"></div>
<div class="t" style="left:76.5px;top:254.75px;line-height:1.3;width:22px;font-size:3.7px;color:#0a2a34;text-align:center;overflow:hidden;font-weight:bold;text-shadow:0 0 0.25px #0a2a34;opacity:1">PVerb</div>
<div class="t" style="left:76.5px;top:266.64px;line-height:1.3;width:22px;font-size:3.7px;color:#dedede;text-align:center;overflow:hidden;font-weight:bold;text-shadow:0 0 0.25px #dedede;opacity:1">Sends</div>
<div style="position:absolute;left:77.5px;top:271px;width:20px;height:3.5px;background:#555;border:0.5px solid #474747;"></div>
<div style="position:absolute;left:77.5px;top:275px;width:20px;height:3.5px;background:#555;border:0.5px solid #474747;"></div>
<div class="t" style="left:76.5px;top:284.38px;line-height:1.3;width:22px;font-size:3.5px;color:#dedede;text-align:center;overflow:hidden;opacity:1">I/O</div>
<div style="position:absolute;left:76.8px;top:288.2px;width:21.4px;height:4.4px;background:linear-gradient(#f2f2f2,#d4d4d4);box-shadow:0 0 0 0.5px #3a3a3a;"></div>
<div class="t" style="left:76.5px;top:289.09px;line-height:1.3;width:22px;font-size:3.4px;color:#111;text-align:center;overflow:hidden;font-weight:bold;text-shadow:0 0 0.25px #111;opacity:1">Input 1</div>
<div style="position:absolute;left:76.8px;top:293.5px;width:21.4px;height:4.4px;background:linear-gradient(#f2f2f2,#d4d4d4);box-shadow:0 0 0 0.5px #3a3a3a;"></div>
<div class="t" style="left:76.5px;top:294.61px;line-height:1.3;width:22px;font-size:3.3px;color:#3a2020;text-align:center;overflow:hidden;font-weight:bold;text-shadow:0 0 0.25px #3a2020;opacity:1">Output 1-2</div>
<div class="t" style="left:75.5px;top:300.83px;line-height:1.3;width:24px;font-size:3.8px;color:#e8e8e8;text-align:center;overflow:hidden;font-weight:bold;text-shadow:0 0 0.25px #e8e8e8;opacity:1">Audio 1</div>
<div style="position:absolute;left:77.5px;top:305.5px;width:20px;height:5px;background:#4c4c4c;border:0.5px solid #444;"></div>
<div style="position:absolute;left:84.5px;top:312.2px;width:1.8px;height:1.8px;border-radius:50%;background:#ccc;"></div>
<div style="position:absolute;left:87.5px;top:312.5px;width:3.5px;height:1.5px;background:#aaa;opacity:0.8;"></div>
<div style="position:absolute;left:78.1px;top:319.5px;width:5.8px;height:54px;background:linear-gradient(90deg,#24140c,#3a2216 20%,#5a3a2a 45%,#2a1810 50%,#5a3a2a 55%,#3a2216 80%,#24140c);border:0.5px solid #2a2a2a;"></div>
<div style="position:absolute;left:78.5px;top:320px;width:5px;height:2.6px;background:linear-gradient(90deg,#c88020 0 45%,#5a3a20 45% 55%,#c88020 55%);"></div>
<div style="position:absolute;left:86.5px;top:319px;width:11px;height:11px;border-radius:50%;background:radial-gradient(circle at 50% 40%,#7a7a7a,#626262 65%,#555);border:1.1px solid #3c3c3c;"></div>
<div style="position:absolute;left:88.39999999999999px;top:344.40000000000003px;width:1.7px;height:23.599999999999977px;background:linear-gradient(90deg,#5ab0c4,#9ae0f0,#5ab0c4);"></div>
<div style="position:absolute;left:94.0px;top:344.6px;width:0.6px;height:23.399999999999977px;background:#7a7a7a;opacity:.6"></div>
<div style="position:absolute;left:88.0px;top:340.6px;width:10.5px;height:3.9px;background:#262626;border:0.5px solid #777;"></div>
<div class="t" style="left:88.0px;top:340.77px;line-height:1.3;width:10.5px;font-size:3.2px;color:#e8e8e8;text-align:center;overflow:hidden;font-weight:bold;text-shadow:0 0 0.25px #e8e8e8;opacity:1">-17.1</div>
<div style="position:absolute;left:88.5px;top:370.2px;width:3px;height:1.6px;background:#999;opacity:0.6;"></div>
<div style="position:absolute;left:93.0px;top:370.2px;width:3px;height:1.6px;background:#999;opacity:0.6;"></div>
<div style="position:absolute;left:78.0px;top:376px;width:6px;height:4px;background:#666;border:0.5px solid #3a3a3a;"></div>
<div style="position:absolute;left:87.0px;top:376px;width:4.5px;height:4px;background:#666;border:0.5px solid #3a3a3a;"></div>
<div style="position:absolute;left:93.0px;top:376px;width:4.5px;height:4px;background:#666;border:0.5px solid #3a3a3a;"></div>
<div style="position:absolute;left:76.0px;top:383.3px;width:23px;height:8.7px;background:linear-gradient(#8fb0e0,#8fb0e0);border:0.5px solid #4a4a4a;border-radius:0.5px;"></div>
<div style="position:absolute;left:80.5px;top:384.9px;width:14.0px;height:2.2px;background:#1a2a50;opacity:0.58;border-radius:0.6px"></div>
<div style="position:absolute;left:86.5px;top:388.8px;width:1.8px;height:2px;background:#1a2a50;opacity:0.5;"></div>
<div style="position:absolute;left:99.65px;top:207px;width:24.65px;height:186.5px;background:#5a5a5a;"></div>
<div style="position:absolute;left:123.65px;top:207px;width:0.8px;height:186.5px;background:#484848;"></div>
<div style="position:absolute;left:101.45px;top:209.3px;width:21.4px;height:4.5px;background:linear-gradient(#ececec,#d0d0d0);box-shadow:0 0 0 0.5px #333;"></div>
<div class="t" style="left:101.15px;top:209.89px;line-height:1.3;width:22px;font-size:3.4px;color:#111;text-align:center;overflow:hidden;font-weight:bold;text-shadow:0 0 0.25px #111;opacity:1">Yamaha N...</div>
<div style="position:absolute;left:101.15px;top:216px;width:22px;height:8px;background:#1c2026;border:0.5px solid #0e0e0e;"></div>
<div class="t" style="left:101.15px;top:225.44px;line-height:1.3;width:22px;font-size:3.7px;color:#dedede;text-align:center;overflow:hidden;font-weight:bold;text-shadow:0 0 0.25px #dedede;opacity:1">Inserts</div>
<div style="position:absolute;left:101.45px;top:229.7px;width:21.4px;height:4.6px;background:linear-gradient(#a8ecf8,#70cce0);box-shadow:0 0 0 0.5px #d8f4f8,0 0 0 1px #3a7a88;"></div>
<div class="t" style="left:101.15px;top:230.34px;line-height:1.3;width:22px;font-size:3.7px;color:#0a2a34;text-align:center;overflow:hidden;font-weight:bold;text-shadow:0 0 0.25px #0a2a34;opacity:1">Channel EQ</div>
<div style="position:absolute;left:101.45px;top:235.79999999999998px;width:21.4px;height:4.6px;background:linear-gradient(#a8ecf8,#70cce0);box-shadow:0 0 0 0.5px #d8f4f8,0 0 0 1px #3a7a88;"></div>
<div class="t" style="left:101.15px;top:236.44px;line-height:1.3;width:22px;font-size:3.7px;color:#0a2a34;text-align:center;overflow:hidden;font-weight:bold;text-shadow:0 0 0.25px #0a2a34;opacity:1">Compressor</div>
<div style="position:absolute;left:101.45px;top:241.89999999999998px;width:21.4px;height:4.6px;background:linear-gradient(#a8ecf8,#70cce0);box-shadow:0 0 0 0.5px #d8f4f8,0 0 0 1px #3a7a88;"></div>
<div class="t" style="left:101.15px;top:242.54px;line-height:1.3;width:22px;font-size:3.7px;color:#0a2a34;text-align:center;overflow:hidden;font-weight:bold;text-shadow:0 0 0.25px #0a2a34;opacity:1">Limiter</div>
<div style="position:absolute;left:101.45px;top:248.0px;width:21.4px;height:4.6px;background:linear-gradient(#a8ecf8,#70cce0);box-shadow:0 0 0 0.5px #d8f4f8,0 0 0 1px #3a7a88;"></div>
<div class="t" style="left:101.15px;top:248.65px;line-height:1.3;width:22px;font-size:3.7px;color:#0a2a34;text-align:center;overflow:hidden;font-weight:bold;text-shadow:0 0 0.25px #0a2a34;opacity:1">Ensemble</div>
<div style="position:absolute;left:101.45px;top:254.1px;width:21.4px;height:4.6px;background:linear-gradient(#a8ecf8,#70cce0);box-shadow:0 0 0 0.5px #d8f4f8,0 0 0 1px #3a7a88;"></div>
<div class="t" style="left:101.15px;top:254.75px;line-height:1.3;width:22px;font-size:3.7px;color:#0a2a34;text-align:center;overflow:hidden;font-weight:bold;text-shadow:0 0 0.25px #0a2a34;opacity:1">PVerb</div>
<div class="t" style="left:101.15px;top:266.64px;line-height:1.3;width:22px;font-size:3.7px;color:#dedede;text-align:center;overflow:hidden;font-weight:bold;text-shadow:0 0 0.25px #dedede;opacity:1">Sends</div>
<div style="position:absolute;left:102.15px;top:271px;width:20px;height:3.5px;background:#555;border:0.5px solid #474747;"></div>
<div style="position:absolute;left:102.15px;top:275px;width:20px;height:3.5px;background:#555;border:0.5px solid #474747;"></div>
<div class="t" style="left:101.15px;top:284.38px;line-height:1.3;width:22px;font-size:3.5px;color:#dedede;text-align:center;overflow:hidden;opacity:1">I/O</div>
<div style="position:absolute;left:101.45px;top:288.2px;width:21.4px;height:4.4px;background:linear-gradient(#f2f2f2,#d4d4d4);box-shadow:0 0 0 0.5px #3a3a3a;"></div>
<div class="t" style="left:101.15px;top:289.09px;line-height:1.3;width:22px;font-size:3.4px;color:#111;text-align:center;overflow:hidden;font-weight:bold;text-shadow:0 0 0.25px #111;opacity:1">Input 1</div>
<div style="position:absolute;left:101.45px;top:293.5px;width:21.4px;height:4.4px;background:linear-gradient(#f2f2f2,#d4d4d4);box-shadow:0 0 0 0.5px #3a3a3a;"></div>
<div class="t" style="left:101.15px;top:294.61px;line-height:1.3;width:22px;font-size:3.3px;color:#3a2020;text-align:center;overflow:hidden;font-weight:bold;text-shadow:0 0 0.25px #3a2020;opacity:1">Output 1-2</div>
<div class="t" style="left:100.15px;top:300.83px;line-height:1.3;width:24px;font-size:3.8px;color:#e8e8e8;text-align:center;overflow:hidden;font-weight:bold;text-shadow:0 0 0.25px #e8e8e8;opacity:1">Audio 2</div>
<div style="position:absolute;left:102.15px;top:305.5px;width:20px;height:5px;background:#4c4c4c;border:0.5px solid #444;"></div>
<div style="position:absolute;left:109.15px;top:312.2px;width:1.8px;height:1.8px;border-radius:50%;background:#ccc;"></div>
<div style="position:absolute;left:112.15px;top:312.5px;width:3.5px;height:1.5px;background:#aaa;opacity:0.8;"></div>
<div style="position:absolute;left:102.75px;top:319.5px;width:5.8px;height:54px;background:linear-gradient(90deg,#24140c,#3a2216 20%,#5a3a2a 45%,#2a1810 50%,#5a3a2a 55%,#3a2216 80%,#24140c);border:0.5px solid #2a2a2a;"></div>
<div style="position:absolute;left:103.15px;top:320px;width:5px;height:2.6px;background:linear-gradient(90deg,#c88020 0 45%,#5a3a20 45% 55%,#c88020 55%);"></div>
<div style="position:absolute;left:111.15px;top:319px;width:11px;height:11px;border-radius:50%;background:radial-gradient(circle at 50% 40%,#7a7a7a,#626262 65%,#555);border:1.1px solid #3c3c3c;"></div>
<div style="position:absolute;left:113.05px;top:350.40000000000003px;width:1.7px;height:17.599999999999977px;background:linear-gradient(90deg,#5ab0c4,#9ae0f0,#5ab0c4);"></div>
<div style="position:absolute;left:118.65px;top:350.6px;width:0.6px;height:17.399999999999977px;background:#7a7a7a;opacity:.6"></div>
<div style="position:absolute;left:112.65px;top:346.6px;width:10.5px;height:3.9px;background:#262626;border:0.5px solid #777;"></div>
<div class="t" style="left:112.65px;top:346.77px;line-height:1.3;width:10.5px;font-size:3.2px;color:#e8e8e8;text-align:center;overflow:hidden;font-weight:bold;text-shadow:0 0 0.25px #e8e8e8;opacity:1">-17.1</div>
<div style="position:absolute;left:113.15px;top:370.2px;width:3px;height:1.6px;background:#999;opacity:0.6;"></div>
<div style="position:absolute;left:117.65px;top:370.2px;width:3px;height:1.6px;background:#999;opacity:0.6;"></div>
<div style="position:absolute;left:102.65px;top:376px;width:6px;height:4px;background:#666;border:0.5px solid #3a3a3a;"></div>
<div style="position:absolute;left:111.65px;top:376px;width:4.5px;height:4px;background:#666;border:0.5px solid #3a3a3a;"></div>
<div style="position:absolute;left:117.65px;top:376px;width:4.5px;height:4px;background:#666;border:0.5px solid #3a3a3a;"></div>
<div style="position:absolute;left:100.65px;top:383.3px;width:23px;height:8.7px;background:linear-gradient(#8fb0e0,#8fb0e0);border:0.5px solid #4a4a4a;border-radius:0.5px;"></div>
<div style="position:absolute;left:105.15px;top:384.9px;width:14.0px;height:2.2px;background:#1a2a50;opacity:0.58;border-radius:0.6px"></div>
<div style="position:absolute;left:111.15px;top:388.8px;width:1.8px;height:2px;background:#1a2a50;opacity:0.5;"></div>
<div style="position:absolute;left:124.3px;top:207px;width:24.65px;height:186.5px;background:#5a5a5a;"></div>
<div style="position:absolute;left:148.3px;top:207px;width:0.8px;height:186.5px;background:#484848;"></div>
<div style="position:absolute;left:126.8px;top:209px;width:20px;height:5px;background:#6a6a6a;border:0.5px solid #7a7a7a;"></div>
<div style="position:absolute;left:133.8px;top:210.5px;width:6px;height:2px;background:#8a8a8a;opacity:1;"></div>
<div style="position:absolute;left:126.8px;top:216.5px;width:20px;height:7px;background:#666;border:0.5px solid #7a7a7a;"></div>
<div style="position:absolute;left:133.8px;top:219px;width:6px;height:2px;background:#7a7a7a;opacity:1;"></div>
<div class="t" style="left:125.8px;top:225.44px;line-height:1.3;width:22px;font-size:3.7px;color:#dedede;text-align:center;overflow:hidden;font-weight:bold;text-shadow:0 0 0.25px #dedede;opacity:1">Inserts</div>
<div style="position:absolute;left:126.8px;top:229.5px;width:20px;height:5px;background:#555;border:0.5px solid #474747;box-shadow:inset 0 0.6px 0 #666;"></div>
<div style="position:absolute;left:126.8px;top:235.6px;width:20px;height:5px;background:#555;border:0.5px solid #474747;box-shadow:inset 0 0.6px 0 #666;"></div>
<div style="position:absolute;left:126.8px;top:241.7px;width:20px;height:5px;background:#555;border:0.5px solid #474747;box-shadow:inset 0 0.6px 0 #666;"></div>
<div style="position:absolute;left:126.8px;top:247.8px;width:20px;height:5px;background:#555;border:0.5px solid #474747;box-shadow:inset 0 0.6px 0 #666;"></div>
<div style="position:absolute;left:126.8px;top:253.9px;width:20px;height:5px;background:#555;border:0.5px solid #474747;box-shadow:inset 0 0.6px 0 #666;"></div>
<div class="t" style="left:125.8px;top:266.64px;line-height:1.3;width:22px;font-size:3.7px;color:#dedede;text-align:center;overflow:hidden;font-weight:bold;text-shadow:0 0 0.25px #dedede;opacity:1">Sends</div>
<div style="position:absolute;left:126.8px;top:271px;width:20px;height:3.5px;background:#555;border:0.5px solid #474747;"></div>
<div style="position:absolute;left:126.8px;top:275px;width:20px;height:3.5px;background:#555;border:0.5px solid #474747;"></div>
<div class="t" style="left:125.8px;top:284.38px;line-height:1.3;width:22px;font-size:3.5px;color:#dedede;text-align:center;overflow:hidden;opacity:1">I/O</div>
<div style="position:absolute;left:126.1px;top:293.5px;width:21.4px;height:4.4px;background:linear-gradient(#f2f2f2,#d4d4d4);box-shadow:0 0 0 0.5px #3a3a3a;"></div>
<div class="t" style="left:125.8px;top:294.61px;line-height:1.3;width:22px;font-size:3.3px;color:#3a2020;text-align:center;overflow:hidden;font-weight:bold;text-shadow:0 0 0.25px #3a2020;opacity:1">Output 1-2</div>
<div class="t" style="left:124.8px;top:300.83px;line-height:1.3;width:24px;font-size:3.8px;color:#e8e8e8;text-align:center;overflow:hidden;font-weight:bold;text-shadow:0 0 0.25px #e8e8e8;opacity:1">Audio 256</div>
<div style="position:absolute;left:126.8px;top:305.5px;width:20px;height:5px;background:#4c4c4c;border:0.5px solid #444;"></div>
<div style="position:absolute;left:133.8px;top:312.2px;width:1.8px;height:1.8px;border-radius:50%;background:#ccc;"></div>
<div style="position:absolute;left:136.8px;top:312.5px;width:3.5px;height:1.5px;background:#aaa;opacity:0.8;"></div>
<div style="position:absolute;left:127.39999999999999px;top:319.5px;width:5.8px;height:54px;background:#1e140e;border:0.5px solid #2a2a2a;"></div>
<div style="position:absolute;left:135.8px;top:319px;width:11px;height:11px;border-radius:50%;background:radial-gradient(circle at 50% 40%,#7a7a7a,#626262 65%,#555);border:1.1px solid #3c3c3c;"></div>
<div style="position:absolute;left:137.70000000000002px;top:345.3px;width:1.7px;height:22.7px;background:linear-gradient(90deg,#5ab0c4,#9ae0f0,#5ab0c4);"></div>
<div style="position:absolute;left:143.3px;top:345.5px;width:0.6px;height:22.5px;background:#7a7a7a;opacity:.6"></div>
<div style="position:absolute;left:137.3px;top:341.5px;width:10.5px;height:3.9px;background:#262626;border:0.5px solid #777;"></div>
<div class="t" style="left:137.3px;top:341.67px;line-height:1.3;width:10.5px;font-size:3.2px;color:#e8e8e8;text-align:center;overflow:hidden;font-weight:bold;text-shadow:0 0 0.25px #e8e8e8;opacity:1">-13.9</div>
<div style="position:absolute;left:137.8px;top:370.2px;width:3px;height:1.6px;background:#999;opacity:0.6;"></div>
<div style="position:absolute;left:142.3px;top:370.2px;width:3px;height:1.6px;background:#999;opacity:0.6;"></div>
<div style="position:absolute;left:127.3px;top:376px;width:6px;height:4px;background:#666;border:0.5px solid #3a3a3a;"></div>
<div style="position:absolute;left:136.3px;top:376px;width:4.5px;height:4px;background:#666;border:0.5px solid #3a3a3a;"></div>
<div style="position:absolute;left:142.3px;top:376px;width:4.5px;height:4px;background:#666;border:0.5px solid #3a3a3a;"></div>
<div style="position:absolute;left:125.3px;top:383.3px;width:23px;height:8.7px;background:linear-gradient(#8fb0e0,#8fb0e0);border:0.5px solid #4a4a4a;border-radius:0.5px;"></div>
<div style="position:absolute;left:128.8px;top:384.9px;width:16.0px;height:2.2px;background:#1a2a50;opacity:0.58;border-radius:0.6px"></div>
<div style="position:absolute;left:135.8px;top:388.8px;width:1.8px;height:2px;background:#1a2a50;opacity:0.5;"></div>
<div style="position:absolute;left:148.95px;top:207px;width:24.65px;height:186.5px;background:#5a5a5a;"></div>
<div style="position:absolute;left:172.95px;top:207px;width:0.8px;height:186.5px;background:#484848;"></div>
<div style="position:absolute;left:150.75px;top:209.3px;width:21.4px;height:4.5px;background:linear-gradient(#ececec,#d0d0d0);box-shadow:0 0 0 0.5px #333;"></div>
<div class="t" style="left:150.45px;top:209.89px;line-height:1.3;width:22px;font-size:3.4px;color:#111;text-align:center;overflow:hidden;font-weight:bold;text-shadow:0 0 0.25px #111;opacity:1">Yamaha...</div>
<div style="position:absolute;left:150.45px;top:216px;width:22px;height:8px;background:#1c2026;border:0.5px solid #0e0e0e;"></div>
<div class="t" style="left:150.45px;top:225.44px;line-height:1.3;width:22px;font-size:3.7px;color:#dedede;text-align:center;overflow:hidden;font-weight:bold;text-shadow:0 0 0.25px #dedede;opacity:1">Inserts</div>
<div style="position:absolute;left:150.75px;top:229.7px;width:21.4px;height:4.6px;background:linear-gradient(#a8ecf8,#70cce0);box-shadow:0 0 0 0.5px #d8f4f8,0 0 0 1px #3a7a88;"></div>
<div class="t" style="left:150.45px;top:230.34px;line-height:1.3;width:22px;font-size:3.7px;color:#0a2a34;text-align:center;overflow:hidden;font-weight:bold;text-shadow:0 0 0.25px #0a2a34;opacity:1">Channel EQ</div>
<div style="position:absolute;left:151.45px;top:235.6px;width:20px;height:5px;background:#555;border:0.5px solid #474747;box-shadow:inset 0 0.6px 0 #666;"></div>
<div style="position:absolute;left:151.45px;top:241.7px;width:20px;height:5px;background:#555;border:0.5px solid #474747;box-shadow:inset 0 0.6px 0 #666;"></div>
<div style="position:absolute;left:151.45px;top:247.8px;width:20px;height:5px;background:#555;border:0.5px solid #474747;box-shadow:inset 0 0.6px 0 #666;"></div>
<div style="position:absolute;left:151.45px;top:253.9px;width:20px;height:5px;background:#555;border:0.5px solid #474747;box-shadow:inset 0 0.6px 0 #666;"></div>
<div class="t" style="left:150.45px;top:266.64px;line-height:1.3;width:22px;font-size:3.7px;color:#dedede;text-align:center;overflow:hidden;font-weight:bold;text-shadow:0 0 0.25px #dedede;opacity:1">Sends</div>
<div style="position:absolute;left:151.45px;top:271px;width:20px;height:3.5px;background:#555;border:0.5px solid #474747;"></div>
<div style="position:absolute;left:151.45px;top:275px;width:20px;height:3.5px;background:#555;border:0.5px solid #474747;"></div>
<div class="t" style="left:150.45px;top:284.38px;line-height:1.3;width:22px;font-size:3.5px;color:#dedede;text-align:center;overflow:hidden;opacity:1">I/O</div>
<div style="position:absolute;left:150.75px;top:288.2px;width:21.4px;height:4.4px;background:linear-gradient(#a8ecf8,#70cce0);box-shadow:0 0 0 0.5px #d8f4f8,0 0 0 1px #3a7a88;"></div>
<div class="t" style="left:150.45px;top:289.09px;line-height:1.3;width:22px;font-size:3.4px;color:#0a2a34;text-align:center;overflow:hidden;font-weight:bold;text-shadow:0 0 0.25px #0a2a34;opacity:1">EXS24</div>
<div style="position:absolute;left:150.75px;top:293.5px;width:21.4px;height:4.4px;background:linear-gradient(#f2f2f2,#d4d4d4);box-shadow:0 0 0 0.5px #3a3a3a;"></div>
<div class="t" style="left:150.45px;top:294.61px;line-height:1.3;width:22px;font-size:3.3px;color:#3a2020;text-align:center;overflow:hidden;font-weight:bold;text-shadow:0 0 0.25px #3a2020;opacity:1">Output 1-2</div>
<div class="t" style="left:149.45px;top:300.83px;line-height:1.3;width:24px;font-size:3.8px;color:#e8e8e8;text-align:center;overflow:hidden;font-weight:bold;text-shadow:0 0 0.25px #e8e8e8;opacity:1">Inst 1</div>
<div style="position:absolute;left:151.45px;top:305.5px;width:20px;height:5px;background:#4c4c4c;border:0.5px solid #444;"></div>
<div style="position:absolute;left:158.45px;top:312.2px;width:1.8px;height:1.8px;border-radius:50%;background:#ccc;"></div>
<div style="position:absolute;left:161.45px;top:312.5px;width:3.5px;height:1.5px;background:#aaa;opacity:0.8;"></div>
<div style="position:absolute;left:152.04999999999998px;top:319.5px;width:5.8px;height:54px;background:linear-gradient(90deg,#24140c,#3a2216 20%,#5a3a2a 45%,#2a1810 50%,#5a3a2a 55%,#3a2216 80%,#24140c);border:0.5px solid #2a2a2a;"></div>
<div style="position:absolute;left:152.45px;top:320px;width:5px;height:2.6px;background:linear-gradient(90deg,#c88020 0 45%,#5a3a20 45% 55%,#c88020 55%);"></div>
<div style="position:absolute;left:160.45px;top:319px;width:11px;height:11px;border-radius:50%;background:radial-gradient(circle at 50% 40%,#7a7a7a,#626262 65%,#555);border:1.1px solid #3c3c3c;"></div>
<div style="position:absolute;left:164.25px;top:323.6px;width:3.5px;height:2px;background:#f0f0f0;opacity:0.75;"></div>
<div style="position:absolute;left:165.25px;top:319.8px;width:1.5px;height:1.5px;border-radius:50%;background:#e8e8e8;"></div>
<div style="position:absolute;left:162.35px;top:344.40000000000003px;width:1.7px;height:23.599999999999977px;background:linear-gradient(90deg,#5ab0c4,#9ae0f0,#5ab0c4);"></div>
<div style="position:absolute;left:167.95px;top:344.6px;width:0.6px;height:23.399999999999977px;background:#7a7a7a;opacity:.6"></div>
<div style="position:absolute;left:161.95px;top:340.6px;width:10.5px;height:3.9px;background:#262626;border:0.5px solid #777;"></div>
<div class="t" style="left:161.95px;top:340.77px;line-height:1.3;width:10.5px;font-size:3.2px;color:#e8e8e8;text-align:center;overflow:hidden;font-weight:bold;text-shadow:0 0 0.25px #e8e8e8;opacity:1">-13.9</div>
<div style="position:absolute;left:162.45px;top:370.2px;width:3px;height:1.6px;background:#999;opacity:0.6;"></div>
<div style="position:absolute;left:166.95px;top:370.2px;width:3px;height:1.6px;background:#999;opacity:0.6;"></div>
<div style="position:absolute;left:149.95px;top:383.3px;width:23px;height:8.7px;background:linear-gradient(#7cc88c,#7cc88c);border:0.5px solid #4a4a4a;border-radius:0.5px;"></div>
<div style="position:absolute;left:155.45px;top:384.9px;width:12.0px;height:2.2px;background:#0a2a10;opacity:0.58;border-radius:0.6px"></div>
<div style="position:absolute;left:160.45px;top:388.8px;width:1.8px;height:2px;background:#0a2a10;opacity:0.5;"></div>
<div style="position:absolute;left:173.6px;top:207px;width:24.65px;height:186.5px;background:#5a5a5a;"></div>
<div style="position:absolute;left:197.6px;top:207px;width:0.8px;height:186.5px;background:#484848;"></div>
<div style="position:absolute;left:175.4px;top:209.3px;width:21.4px;height:4.5px;background:linear-gradient(#ececec,#d0d0d0);box-shadow:0 0 0 0.5px #333;"></div>
<div class="t" style="left:175.1px;top:209.89px;line-height:1.3;width:22px;font-size:3.4px;color:#111;text-align:center;overflow:hidden;font-weight:bold;text-shadow:0 0 0.25px #111;opacity:1">Acoustic...</div>
<div style="position:absolute;left:175.1px;top:216px;width:22px;height:8px;background:#1c2026;border:0.5px solid #0e0e0e;"></div>
<div class="t" style="left:175.1px;top:225.44px;line-height:1.3;width:22px;font-size:3.7px;color:#dedede;text-align:center;overflow:hidden;font-weight:bold;text-shadow:0 0 0.25px #dedede;opacity:1">Inserts</div>
<div style="position:absolute;left:175.4px;top:229.7px;width:21.4px;height:4.6px;background:linear-gradient(#a8ecf8,#70cce0);box-shadow:0 0 0 0.5px #d8f4f8,0 0 0 1px #3a7a88;"></div>
<div class="t" style="left:175.1px;top:230.34px;line-height:1.3;width:22px;font-size:3.7px;color:#0a2a34;text-align:center;overflow:hidden;font-weight:bold;text-shadow:0 0 0.25px #0a2a34;opacity:1">Attack</div>
<div style="position:absolute;left:175.4px;top:235.79999999999998px;width:21.4px;height:4.6px;background:linear-gradient(#a8ecf8,#70cce0);box-shadow:0 0 0 0.5px #d8f4f8,0 0 0 1px #3a7a88;"></div>
<div class="t" style="left:175.1px;top:236.44px;line-height:1.3;width:22px;font-size:3.7px;color:#0a2a34;text-align:center;overflow:hidden;font-weight:bold;text-shadow:0 0 0.25px #0a2a34;opacity:1">Channel EQ</div>
<div style="position:absolute;left:175.4px;top:241.89999999999998px;width:21.4px;height:4.6px;background:linear-gradient(#a8ecf8,#70cce0);box-shadow:0 0 0 0.5px #d8f4f8,0 0 0 1px #3a7a88;"></div>
<div class="t" style="left:175.1px;top:242.54px;line-height:1.3;width:22px;font-size:3.7px;color:#0a2a34;text-align:center;overflow:hidden;font-weight:bold;text-shadow:0 0 0.25px #0a2a34;opacity:1">DirAmpPro</div>
<div style="position:absolute;left:176.1px;top:247.8px;width:20px;height:5px;background:#555;border:0.5px solid #474747;box-shadow:inset 0 0.6px 0 #666;"></div>
<div style="position:absolute;left:176.1px;top:253.9px;width:20px;height:5px;background:#555;border:0.5px solid #474747;box-shadow:inset 0 0.6px 0 #666;"></div>
<div class="t" style="left:175.1px;top:266.64px;line-height:1.3;width:22px;font-size:3.7px;color:#dedede;text-align:center;overflow:hidden;font-weight:bold;text-shadow:0 0 0.25px #dedede;opacity:1">Sends</div>
<div style="position:absolute;left:176.1px;top:271px;width:20px;height:3.5px;background:#555;border:0.5px solid #474747;"></div>
<div style="position:absolute;left:176.1px;top:275px;width:20px;height:3.5px;background:#555;border:0.5px solid #474747;"></div>
<div class="t" style="left:175.1px;top:284.38px;line-height:1.3;width:22px;font-size:3.5px;color:#dedede;text-align:center;overflow:hidden;opacity:1">I/O</div>
<div style="position:absolute;left:175.4px;top:288.2px;width:21.4px;height:4.4px;background:linear-gradient(#a8ecf8,#70cce0);box-shadow:0 0 0 0.5px #d8f4f8,0 0 0 1px #3a7a88;"></div>
<div class="t" style="left:175.1px;top:289.09px;line-height:1.3;width:22px;font-size:3.4px;color:#0a2a34;text-align:center;overflow:hidden;font-weight:bold;text-shadow:0 0 0.25px #0a2a34;opacity:1">EXS24</div>
<div style="position:absolute;left:175.4px;top:293.5px;width:21.4px;height:4.4px;background:linear-gradient(#f2f2f2,#d4d4d4);box-shadow:0 0 0 0.5px #3a3a3a;"></div>
<div class="t" style="left:175.1px;top:294.61px;line-height:1.3;width:22px;font-size:3.3px;color:#3a2020;text-align:center;overflow:hidden;font-weight:bold;text-shadow:0 0 0.25px #3a2020;opacity:1">Output 1-2</div>
<div class="t" style="left:174.1px;top:300.83px;line-height:1.3;width:24px;font-size:3.8px;color:#e8e8e8;text-align:center;overflow:hidden;font-weight:bold;text-shadow:0 0 0.25px #e8e8e8;opacity:1">Inst 2</div>
<div style="position:absolute;left:176.1px;top:305.5px;width:20px;height:5px;background:#4c4c4c;border:0.5px solid #444;"></div>
<div style="position:absolute;left:183.1px;top:312.2px;width:1.8px;height:1.8px;border-radius:50%;background:#ccc;"></div>
<div style="position:absolute;left:186.1px;top:312.5px;width:3.5px;height:1.5px;background:#aaa;opacity:0.8;"></div>
<div style="position:absolute;left:176.7px;top:319.5px;width:5.8px;height:54px;background:linear-gradient(90deg,#24140c,#3a2216 20%,#5a3a2a 45%,#2a1810 50%,#5a3a2a 55%,#3a2216 80%,#24140c);border:0.5px solid #2a2a2a;"></div>
<div style="position:absolute;left:177.1px;top:320px;width:5px;height:2.6px;background:linear-gradient(90deg,#c88020 0 45%,#5a3a20 45% 55%,#c88020 55%);"></div>
<div style="position:absolute;left:185.1px;top:319px;width:11px;height:11px;border-radius:50%;background:radial-gradient(circle at 50% 40%,#7a7a7a,#626262 65%,#555);border:1.1px solid #3c3c3c;"></div>
<div style="position:absolute;left:188.9px;top:323.6px;width:3.5px;height:2px;background:#f0f0f0;opacity:0.75;"></div>
<div style="position:absolute;left:189.9px;top:319.8px;width:1.5px;height:1.5px;border-radius:50%;background:#e8e8e8;"></div>
<div style="position:absolute;left:187.0px;top:345.3px;width:1.7px;height:22.7px;background:linear-gradient(90deg,#5ab0c4,#9ae0f0,#5ab0c4);"></div>
<div style="position:absolute;left:192.6px;top:345.5px;width:0.6px;height:22.5px;background:#7a7a7a;opacity:.6"></div>
<div style="position:absolute;left:186.6px;top:341.5px;width:10.5px;height:3.9px;background:#262626;border:0.5px solid #777;"></div>
<div class="t" style="left:186.6px;top:341.67px;line-height:1.3;width:10.5px;font-size:3.2px;color:#e8e8e8;text-align:center;overflow:hidden;font-weight:bold;text-shadow:0 0 0.25px #e8e8e8;opacity:1">-13.9</div>
<div style="position:absolute;left:187.1px;top:370.2px;width:3px;height:1.6px;background:#999;opacity:0.6;"></div>
<div style="position:absolute;left:191.6px;top:370.2px;width:3px;height:1.6px;background:#999;opacity:0.6;"></div>
<div style="position:absolute;left:174.6px;top:383.3px;width:23px;height:8.7px;background:linear-gradient(#7cc88c,#7cc88c);border:0.5px solid #4a4a4a;border-radius:0.5px;"></div>
<div style="position:absolute;left:180.1px;top:384.9px;width:12.0px;height:2.2px;background:#0a2a10;opacity:0.58;border-radius:0.6px"></div>
<div style="position:absolute;left:185.1px;top:388.8px;width:1.8px;height:2px;background:#0a2a10;opacity:0.5;"></div>
<div style="position:absolute;left:198.25px;top:207px;width:24.65px;height:186.5px;background:#c4c4c4;"></div>
<div style="position:absolute;left:222.25px;top:207px;width:0.8px;height:186.5px;background:#484848;"></div>
<div style="position:absolute;left:200.05px;top:209.3px;width:21.4px;height:4.5px;background:linear-gradient(#ececec,#d0d0d0);box-shadow:0 0 0 0.5px #333;"></div>
<div class="t" style="left:199.75px;top:209.89px;line-height:1.3;width:22px;font-size:3.4px;color:#111;text-align:center;overflow:hidden;font-weight:bold;text-shadow:0 0 0.25px #111;opacity:1">Acoustic...</div>
<div style="position:absolute;left:199.75px;top:216px;width:22px;height:8px;background:#1c2026;border:0.5px solid #0e0e0e;"></div>
<div class="t" style="left:199.75px;top:225.44px;line-height:1.3;width:22px;font-size:3.7px;color:#666;text-align:center;overflow:hidden;font-weight:bold;text-shadow:0 0 0.25px #666;opacity:1">Inserts</div>
<div style="position:absolute;left:200.05px;top:229.7px;width:21.4px;height:4.6px;background:linear-gradient(#a8ecf8,#70cce0);box-shadow:0 0 0 0.5px #d8f4f8,0 0 0 1px #3a7a88;"></div>
<div class="t" style="left:199.75px;top:230.34px;line-height:1.3;width:22px;font-size:3.7px;color:#0a2a34;text-align:center;overflow:hidden;font-weight:bold;text-shadow:0 0 0.25px #0a2a34;opacity:1">Attack</div>
<div style="position:absolute;left:200.05px;top:235.79999999999998px;width:21.4px;height:4.6px;background:linear-gradient(#a8ecf8,#70cce0);box-shadow:0 0 0 0.5px #d8f4f8,0 0 0 1px #3a7a88;"></div>
<div class="t" style="left:199.75px;top:236.44px;line-height:1.3;width:22px;font-size:3.7px;color:#0a2a34;text-align:center;overflow:hidden;font-weight:bold;text-shadow:0 0 0.25px #0a2a34;opacity:1">Channel EQ</div>
<div style="position:absolute;left:200.05px;top:241.89999999999998px;width:21.4px;height:4.6px;background:linear-gradient(#a8ecf8,#70cce0);box-shadow:0 0 0 0.5px #d8f4f8,0 0 0 1px #3a7a88;"></div>
<div class="t" style="left:199.75px;top:242.54px;line-height:1.3;width:22px;font-size:3.7px;color:#0a2a34;text-align:center;overflow:hidden;font-weight:bold;text-shadow:0 0 0.25px #0a2a34;opacity:1">DirAmpPro</div>
<div style="position:absolute;left:200.05px;top:248.0px;width:21.4px;height:4.6px;background:linear-gradient(#a8ecf8,#70cce0);box-shadow:0 0 0 0.5px #d8f4f8,0 0 0 1px #3a7a88;"></div>
<div class="t" style="left:199.75px;top:248.65px;line-height:1.3;width:22px;font-size:3.7px;color:#0a2a34;text-align:center;overflow:hidden;font-weight:bold;text-shadow:0 0 0.25px #0a2a34;opacity:1">Compressor</div>
<div style="position:absolute;left:200.75px;top:253.9px;width:20px;height:5px;background:#d4d4d4;border:0.5px solid #a8a8a8;"></div>
<div class="t" style="left:199.75px;top:266.64px;line-height:1.3;width:22px;font-size:3.7px;color:#666;text-align:center;overflow:hidden;font-weight:bold;text-shadow:0 0 0.25px #666;opacity:1">Sends</div>
<div style="position:absolute;left:200.75px;top:271px;width:20px;height:3.5px;background:#d4d4d4;border:0.5px solid #b0b0b0;"></div>
<div style="position:absolute;left:200.75px;top:275px;width:20px;height:3.5px;background:#d4d4d4;border:0.5px solid #b0b0b0;"></div>
<div class="t" style="left:199.75px;top:284.38px;line-height:1.3;width:22px;font-size:3.5px;color:#666;text-align:center;overflow:hidden;opacity:1">I/O</div>
<div style="position:absolute;left:200.05px;top:288.2px;width:21.4px;height:4.4px;background:linear-gradient(#a8ecf8,#70cce0);box-shadow:0 0 0 0.5px #d8f4f8,0 0 0 1px #3a7a88;"></div>
<div class="t" style="left:199.75px;top:289.09px;line-height:1.3;width:22px;font-size:3.4px;color:#0a2a34;text-align:center;overflow:hidden;font-weight:bold;text-shadow:0 0 0.25px #0a2a34;opacity:1">EXS24</div>
<div style="position:absolute;left:200.05px;top:293.5px;width:21.4px;height:4.4px;background:linear-gradient(#f2f2f2,#d4d4d4);box-shadow:0 0 0 0.5px #3a3a3a;"></div>
<div class="t" style="left:199.75px;top:294.61px;line-height:1.3;width:22px;font-size:3.3px;color:#3a2020;text-align:center;overflow:hidden;font-weight:bold;text-shadow:0 0 0.25px #3a2020;opacity:1">Output 1-2</div>
<div class="t" style="left:198.75px;top:300.83px;line-height:1.3;width:24px;font-size:3.8px;color:#666;text-align:center;overflow:hidden;font-weight:bold;text-shadow:0 0 0.25px #666;opacity:1">Inst 3</div>
<div style="position:absolute;left:200.75px;top:305.5px;width:20px;height:5px;background:#dadada;"></div>
<div style="position:absolute;left:207.75px;top:312.2px;width:1.8px;height:1.8px;border-radius:50%;background:#555;"></div>
<div style="position:absolute;left:210.75px;top:312.5px;width:3.5px;height:1.5px;background:#666;opacity:0.8;"></div>
<div style="position:absolute;left:201.35px;top:319.5px;width:5.8px;height:54px;background:linear-gradient(90deg,#24140c,#3a2216 20%,#5a3a2a 45%,#2a1810 50%,#5a3a2a 55%,#3a2216 80%,#24140c);border:0.5px solid #2a2a2a;"></div>
<div style="position:absolute;left:201.75px;top:320px;width:5px;height:2.6px;background:linear-gradient(90deg,#c88020 0 45%,#5a3a20 45% 55%,#c88020 55%);"></div>
<div style="position:absolute;left:209.75px;top:319px;width:11px;height:11px;border-radius:50%;background:radial-gradient(circle at 50% 45%,#f4f4f4,#d8d8d8 60%,#b0b0b0);border:1px solid #8a8a8a;"></div>
<div style="position:absolute;left:213.25px;top:323.7px;width:4px;height:1.8px;background:#333;opacity:0.7;"></div>
<div style="position:absolute;left:211.65px;top:341.40000000000003px;width:1.7px;height:26.599999999999977px;background:linear-gradient(90deg,#5ab0c4,#9ae0f0,#5ab0c4);"></div>
<div style="position:absolute;left:217.25px;top:341.6px;width:0.6px;height:26.399999999999977px;background:#7a7a7a;opacity:.6"></div>
<div style="position:absolute;left:211.25px;top:337.6px;width:10.5px;height:3.9px;background:#262626;border:0.5px solid #777;"></div>
<div class="t" style="left:211.25px;top:337.77px;line-height:1.3;width:10.5px;font-size:3.2px;color:#e8e8e8;text-align:center;overflow:hidden;font-weight:bold;text-shadow:0 0 0.25px #e8e8e8;opacity:1">0.0</div>
<div style="position:absolute;left:214.75px;top:341.20000000000005px;width:6px;height:25px;background:#d0d0d0;"></div>
<div style="position:absolute;left:211.75px;top:370.2px;width:3px;height:1.6px;background:#777;opacity:0.6;"></div>
<div style="position:absolute;left:216.25px;top:370.2px;width:3px;height:1.6px;background:#777;opacity:0.6;"></div>
<div style="position:absolute;left:199.25px;top:383.3px;width:23px;height:8.7px;background:linear-gradient(#b4e4bc,#b4e4bc);border:0.5px solid #4a4a4a;border-radius:0.5px;"></div>
<div style="position:absolute;left:204.75px;top:384.9px;width:12.0px;height:2.2px;background:#0a2a10;opacity:0.58;border-radius:0.6px"></div>
<div style="position:absolute;left:209.75px;top:388.8px;width:1.8px;height:2px;background:#0a2a10;opacity:0.5;"></div>
<div style="position:absolute;left:222.89999999999998px;top:207px;width:24.65px;height:186.5px;background:#5a5a5a;"></div>
<div style="position:absolute;left:246.89999999999998px;top:207px;width:0.8px;height:186.5px;background:#484848;"></div>
<div style="position:absolute;left:224.7px;top:209.3px;width:21.4px;height:4.5px;background:linear-gradient(#ececec,#d0d0d0);box-shadow:0 0 0 0.5px #333;"></div>
<div class="t" style="left:224.39999999999998px;top:209.89px;line-height:1.3;width:22px;font-size:3.4px;color:#111;text-align:center;overflow:hidden;font-weight:bold;text-shadow:0 0 0.25px #111;opacity:1">Pop Cello...</div>
<div style="position:absolute;left:224.39999999999998px;top:216px;width:22px;height:8px;background:#1c2026;border:0.5px solid #0e0e0e;"></div>
<div class="t" style="left:224.39999999999998px;top:225.44px;line-height:1.3;width:22px;font-size:3.7px;color:#dedede;text-align:center;overflow:hidden;font-weight:bold;text-shadow:0 0 0.25px #dedede;opacity:1">Inserts</div>
<div style="position:absolute;left:224.7px;top:229.7px;width:21.4px;height:4.6px;background:linear-gradient(#a8ecf8,#70cce0);box-shadow:0 0 0 0.5px #d8f4f8,0 0 0 1px #3a7a88;"></div>
<div class="t" style="left:224.39999999999998px;top:230.34px;line-height:1.3;width:22px;font-size:3.7px;color:#0a2a34;text-align:center;overflow:hidden;font-weight:bold;text-shadow:0 0 0.25px #0a2a34;opacity:1">Channel EQ</div>
<div style="position:absolute;left:224.7px;top:235.79999999999998px;width:21.4px;height:4.6px;background:linear-gradient(#a8ecf8,#70cce0);box-shadow:0 0 0 0.5px #d8f4f8,0 0 0 1px #3a7a88;"></div>
<div class="t" style="left:224.39999999999998px;top:236.44px;line-height:1.3;width:22px;font-size:3.7px;color:#0a2a34;text-align:center;overflow:hidden;font-weight:bold;text-shadow:0 0 0.25px #0a2a34;opacity:1">PVerb</div>
<div style="position:absolute;left:224.7px;top:241.89999999999998px;width:21.4px;height:4.6px;background:linear-gradient(#a8ecf8,#70cce0);box-shadow:0 0 0 0.5px #d8f4f8,0 0 0 1px #3a7a88;"></div>
<div class="t" style="left:224.39999999999998px;top:242.54px;line-height:1.3;width:22px;font-size:3.7px;color:#0a2a34;text-align:center;overflow:hidden;font-weight:bold;text-shadow:0 0 0.25px #0a2a34;opacity:1">Compressor</div>
<div style="position:absolute;left:225.39999999999998px;top:247.8px;width:20px;height:5px;background:#555;border:0.5px solid #474747;box-shadow:inset 0 0.6px 0 #666;"></div>
<div style="position:absolute;left:225.39999999999998px;top:253.9px;width:20px;height:5px;background:#555;border:0.5px solid #474747;box-shadow:inset 0 0.6px 0 #666;"></div>
<div class="t" style="left:224.39999999999998px;top:266.64px;line-height:1.3;width:22px;font-size:3.7px;color:#dedede;text-align:center;overflow:hidden;font-weight:bold;text-shadow:0 0 0.25px #dedede;opacity:1">Sends</div>
<div style="position:absolute;left:225.39999999999998px;top:271px;width:20px;height:3.5px;background:#555;border:0.5px solid #474747;"></div>
<div style="position:absolute;left:225.39999999999998px;top:275px;width:20px;height:3.5px;background:#555;border:0.5px solid #474747;"></div>
<div class="t" style="left:224.39999999999998px;top:284.38px;line-height:1.3;width:22px;font-size:3.5px;color:#dedede;text-align:center;overflow:hidden;opacity:1">I/O</div>
<div style="position:absolute;left:224.7px;top:288.2px;width:21.4px;height:4.4px;background:linear-gradient(#a8ecf8,#70cce0);box-shadow:0 0 0 0.5px #d8f4f8,0 0 0 1px #3a7a88;"></div>
<div class="t" style="left:224.39999999999998px;top:289.09px;line-height:1.3;width:22px;font-size:3.4px;color:#0a2a34;text-align:center;overflow:hidden;font-weight:bold;text-shadow:0 0 0.25px #0a2a34;opacity:1">EXS24</div>
<div style="position:absolute;left:224.7px;top:293.5px;width:21.4px;height:4.4px;background:linear-gradient(#f2f2f2,#d4d4d4);box-shadow:0 0 0 0.5px #3a3a3a;"></div>
<div class="t" style="left:224.39999999999998px;top:294.61px;line-height:1.3;width:22px;font-size:3.3px;color:#3a2020;text-align:center;overflow:hidden;font-weight:bold;text-shadow:0 0 0.25px #3a2020;opacity:1">Output 1-2</div>
<div class="t" style="left:223.39999999999998px;top:300.83px;line-height:1.3;width:24px;font-size:3.8px;color:#e8e8e8;text-align:center;overflow:hidden;font-weight:bold;text-shadow:0 0 0.25px #e8e8e8;opacity:1">Inst 4</div>
<div style="position:absolute;left:225.39999999999998px;top:305.5px;width:20px;height:5px;background:#4c4c4c;border:0.5px solid #444;"></div>
<div style="position:absolute;left:232.39999999999998px;top:312.2px;width:1.8px;height:1.8px;border-radius:50%;background:#ccc;"></div>
<div style="position:absolute;left:235.39999999999998px;top:312.5px;width:3.5px;height:1.5px;background:#aaa;opacity:0.8;"></div>
<div style="position:absolute;left:225.99999999999997px;top:319.5px;width:5.8px;height:54px;background:linear-gradient(90deg,#24140c,#3a2216 20%,#5a3a2a 45%,#2a1810 50%,#5a3a2a 55%,#3a2216 80%,#24140c);border:0.5px solid #2a2a2a;"></div>
<div style="position:absolute;left:226.39999999999998px;top:320px;width:5px;height:2.6px;background:linear-gradient(90deg,#c88020 0 45%,#5a3a20 45% 55%,#c88020 55%);"></div>
<div style="position:absolute;left:234.39999999999998px;top:319px;width:11px;height:11px;border-radius:50%;background:radial-gradient(circle at 50% 40%,#7a7a7a,#626262 65%,#555);border:1.1px solid #3c3c3c;"></div>
<div style="position:absolute;left:238.2px;top:323.6px;width:3.5px;height:2px;background:#f0f0f0;opacity:0.75;"></div>
<div style="position:absolute;left:239.2px;top:319.8px;width:1.5px;height:1.5px;border-radius:50%;background:#e8e8e8;"></div>
<div style="position:absolute;left:236.29999999999998px;top:362.40000000000003px;width:1.7px;height:5.599999999999977px;background:linear-gradient(90deg,#5ab0c4,#9ae0f0,#5ab0c4);"></div>
<div style="position:absolute;left:241.89999999999998px;top:362.6px;width:0.6px;height:5.399999999999977px;background:#7a7a7a;opacity:.6"></div>
<div style="position:absolute;left:235.89999999999998px;top:358.6px;width:10.5px;height:3.9px;background:#262626;border:0.5px solid #777;"></div>
<div class="t" style="left:235.89999999999998px;top:358.77px;line-height:1.3;width:10.5px;font-size:3.2px;color:#e8e8e8;text-align:center;overflow:hidden;font-weight:bold;text-shadow:0 0 0.25px #e8e8e8;opacity:1">-17.3</div>
<div style="position:absolute;left:236.39999999999998px;top:370.2px;width:3px;height:1.6px;background:#999;opacity:0.6;"></div>
<div style="position:absolute;left:240.89999999999998px;top:370.2px;width:3px;height:1.6px;background:#999;opacity:0.6;"></div>
<div style="position:absolute;left:223.89999999999998px;top:383.3px;width:23px;height:8.7px;background:linear-gradient(#7cc88c,#7cc88c);border:0.5px solid #4a4a4a;border-radius:0.5px;"></div>
<div style="position:absolute;left:229.39999999999998px;top:384.9px;width:12.0px;height:2.2px;background:#0a2a10;opacity:0.58;border-radius:0.6px"></div>
<div style="position:absolute;left:234.39999999999998px;top:388.8px;width:1.8px;height:2px;background:#0a2a10;opacity:0.5;"></div>
<div style="position:absolute;left:247.54999999999998px;top:207px;width:24.65px;height:186.5px;background:#5a5a5a;"></div>
<div style="position:absolute;left:271.54999999999995px;top:207px;width:0.8px;height:186.5px;background:#484848;"></div>
<div style="position:absolute;left:249.35px;top:209.3px;width:21.4px;height:4.5px;background:linear-gradient(#ececec,#d0d0d0);box-shadow:0 0 0 0.5px #333;"></div>
<div class="t" style="left:249.04999999999998px;top:209.89px;line-height:1.3;width:22px;font-size:3.4px;color:#111;text-align:center;overflow:hidden;font-weight:bold;text-shadow:0 0 0.25px #111;opacity:1">Acoustic...</div>
<div style="position:absolute;left:250.04999999999998px;top:216.5px;width:20px;height:7px;background:#666;border:0.5px solid #7a7a7a;"></div>
<div style="position:absolute;left:257.04999999999995px;top:219px;width:6px;height:2px;background:#7a7a7a;opacity:1;"></div>
<div class="t" style="left:249.04999999999998px;top:225.44px;line-height:1.3;width:22px;font-size:3.7px;color:#dedede;text-align:center;overflow:hidden;font-weight:bold;text-shadow:0 0 0.25px #dedede;opacity:1">Inserts</div>
<div style="position:absolute;left:249.35px;top:229.7px;width:21.4px;height:4.6px;background:linear-gradient(#a8ecf8,#70cce0);box-shadow:0 0 0 0.5px #d8f4f8,0 0 0 1px #3a7a88;"></div>
<div class="t" style="left:249.04999999999998px;top:230.34px;line-height:1.3;width:22px;font-size:3.7px;color:#0a2a34;text-align:center;overflow:hidden;font-weight:bold;text-shadow:0 0 0.25px #0a2a34;opacity:1">AutoFilter</div>
<div style="position:absolute;left:249.35px;top:235.79999999999998px;width:21.4px;height:4.6px;background:linear-gradient(#a8ecf8,#70cce0);box-shadow:0 0 0 0.5px #d8f4f8,0 0 0 1px #3a7a88;"></div>
<div class="t" style="left:249.04999999999998px;top:236.44px;line-height:1.3;width:22px;font-size:3.7px;color:#0a2a34;text-align:center;overflow:hidden;font-weight:bold;text-shadow:0 0 0.25px #0a2a34;opacity:1">Ensemble</div>
<div style="position:absolute;left:250.04999999999998px;top:241.7px;width:20px;height:5px;background:#555;border:0.5px solid #474747;box-shadow:inset 0 0.6px 0 #666;"></div>
<div style="position:absolute;left:250.04999999999998px;top:247.8px;width:20px;height:5px;background:#555;border:0.5px solid #474747;box-shadow:inset 0 0.6px 0 #666;"></div>
<div style="position:absolute;left:250.04999999999998px;top:253.9px;width:20px;height:5px;background:#555;border:0.5px solid #474747;box-shadow:inset 0 0.6px 0 #666;"></div>
<div class="t" style="left:249.04999999999998px;top:266.64px;line-height:1.3;width:22px;font-size:3.7px;color:#dedede;text-align:center;overflow:hidden;font-weight:bold;text-shadow:0 0 0.25px #dedede;opacity:1">Sends</div>
<div style="position:absolute;left:250.04999999999998px;top:271px;width:20px;height:3.5px;background:#555;border:0.5px solid #474747;"></div>
<div style="position:absolute;left:250.04999999999998px;top:275px;width:20px;height:3.5px;background:#555;border:0.5px solid #474747;"></div>
<div class="t" style="left:249.04999999999998px;top:284.38px;line-height:1.3;width:22px;font-size:3.5px;color:#dedede;text-align:center;overflow:hidden;opacity:1">I/O</div>
<div style="position:absolute;left:249.35px;top:288.2px;width:21.4px;height:4.4px;background:linear-gradient(#a8ecf8,#70cce0);box-shadow:0 0 0 0.5px #d8f4f8,0 0 0 1px #3a7a88;"></div>
<div class="t" style="left:249.04999999999998px;top:289.09px;line-height:1.3;width:22px;font-size:3.4px;color:#0a2a34;text-align:center;overflow:hidden;font-weight:bold;text-shadow:0 0 0.25px #0a2a34;opacity:1">EXS24</div>
<div style="position:absolute;left:249.35px;top:293.5px;width:21.4px;height:4.4px;background:linear-gradient(#f2f2f2,#d4d4d4);box-shadow:0 0 0 0.5px #3a3a3a;"></div>
<div class="t" style="left:249.04999999999998px;top:294.61px;line-height:1.3;width:22px;font-size:3.3px;color:#3a2020;text-align:center;overflow:hidden;font-weight:bold;text-shadow:0 0 0.25px #3a2020;opacity:1">Output 1-2</div>
<div class="t" style="left:248.04999999999998px;top:300.83px;line-height:1.3;width:24px;font-size:3.8px;color:#e8e8e8;text-align:center;overflow:hidden;font-weight:bold;text-shadow:0 0 0.25px #e8e8e8;opacity:1">Inst 5</div>
<div style="position:absolute;left:250.04999999999998px;top:305.5px;width:20px;height:5px;background:#4c4c4c;border:0.5px solid #444;"></div>
<div style="position:absolute;left:257.04999999999995px;top:312.2px;width:1.8px;height:1.8px;border-radius:50%;background:#ccc;"></div>
<div style="position:absolute;left:260.04999999999995px;top:312.5px;width:3.5px;height:1.5px;background:#aaa;opacity:0.8;"></div>
<div style="position:absolute;left:250.64999999999998px;top:319.5px;width:5.8px;height:54px;background:linear-gradient(90deg,#24140c,#3a2216 20%,#5a3a2a 45%,#2a1810 50%,#5a3a2a 55%,#3a2216 80%,#24140c);border:0.5px solid #2a2a2a;"></div>
<div style="position:absolute;left:251.04999999999998px;top:320px;width:5px;height:2.6px;background:linear-gradient(90deg,#c88020 0 45%,#5a3a20 45% 55%,#c88020 55%);"></div>
<div style="position:absolute;left:259.04999999999995px;top:319px;width:11px;height:11px;border-radius:50%;background:radial-gradient(circle at 50% 40%,#7a7a7a,#626262 65%,#555);border:1.1px solid #3c3c3c;"></div>
<div style="position:absolute;left:260.95px;top:351.8px;width:1.7px;height:16.2px;background:linear-gradient(90deg,#5ab0c4,#9ae0f0,#5ab0c4);"></div>
<div style="position:absolute;left:266.54999999999995px;top:352px;width:0.6px;height:16px;background:#7a7a7a;opacity:.6"></div>
<div style="position:absolute;left:260.54999999999995px;top:348px;width:10.5px;height:3.9px;background:#262626;border:0.5px solid #777;"></div>
<div class="t" style="left:260.54999999999995px;top:348.17px;line-height:1.3;width:10.5px;font-size:3.2px;color:#e8e8e8;text-align:center;overflow:hidden;font-weight:bold;text-shadow:0 0 0.25px #e8e8e8;opacity:1">-17.3</div>
<div style="position:absolute;left:261.04999999999995px;top:370.2px;width:3px;height:1.6px;background:#999;opacity:0.6;"></div>
<div style="position:absolute;left:265.54999999999995px;top:370.2px;width:3px;height:1.6px;background:#999;opacity:0.6;"></div>
<div style="position:absolute;left:248.54999999999998px;top:383.3px;width:23px;height:8.7px;background:linear-gradient(#7cc88c,#7cc88c);border:0.5px solid #4a4a4a;border-radius:0.5px;"></div>
<div style="position:absolute;left:254.04999999999995px;top:384.9px;width:12.0px;height:2.2px;background:#0a2a10;opacity:0.58;border-radius:0.6px"></div>
<div style="position:absolute;left:259.04999999999995px;top:388.8px;width:1.8px;height:2px;background:#0a2a10;opacity:0.5;"></div>
<div style="position:absolute;left:272.2px;top:207px;width:24.65px;height:186.5px;background:#5a5a5a;"></div>
<div style="position:absolute;left:296.2px;top:207px;width:0.8px;height:186.5px;background:#484848;"></div>
<div style="position:absolute;left:274.0px;top:209.3px;width:21.4px;height:4.5px;background:linear-gradient(#ececec,#d0d0d0);box-shadow:0 0 0 0.5px #333;"></div>
<div class="t" style="left:273.7px;top:209.89px;line-height:1.3;width:22px;font-size:3.4px;color:#111;text-align:center;overflow:hidden;font-weight:bold;text-shadow:0 0 0.25px #111;opacity:1">Pop Strin...</div>
<div style="position:absolute;left:274.7px;top:216.5px;width:20px;height:7px;background:#666;border:0.5px solid #7a7a7a;"></div>
<div style="position:absolute;left:281.7px;top:219px;width:6px;height:2px;background:#7a7a7a;opacity:1;"></div>
<div class="t" style="left:273.7px;top:225.44px;line-height:1.3;width:22px;font-size:3.7px;color:#dedede;text-align:center;overflow:hidden;font-weight:bold;text-shadow:0 0 0.25px #dedede;opacity:1">Inserts</div>
<div style="position:absolute;left:274.0px;top:229.7px;width:21.4px;height:4.6px;background:linear-gradient(#a8ecf8,#70cce0);box-shadow:0 0 0 0.5px #d8f4f8,0 0 0 1px #3a7a88;"></div>
<div class="t" style="left:273.7px;top:230.34px;line-height:1.3;width:22px;font-size:3.7px;color:#0a2a34;text-align:center;overflow:hidden;font-weight:bold;text-shadow:0 0 0.25px #0a2a34;opacity:1">Compressor</div>
<div style="position:absolute;left:274.0px;top:235.79999999999998px;width:21.4px;height:4.6px;background:linear-gradient(#a8ecf8,#70cce0);box-shadow:0 0 0 0.5px #d8f4f8,0 0 0 1px #3a7a88;"></div>
<div class="t" style="left:273.7px;top:236.44px;line-height:1.3;width:22px;font-size:3.7px;color:#0a2a34;text-align:center;overflow:hidden;font-weight:bold;text-shadow:0 0 0.25px #0a2a34;opacity:1">Exciter</div>
<div style="position:absolute;left:274.0px;top:241.89999999999998px;width:21.4px;height:4.6px;background:linear-gradient(#a8ecf8,#70cce0);box-shadow:0 0 0 0.5px #d8f4f8,0 0 0 1px #3a7a88;"></div>
<div class="t" style="left:273.7px;top:242.54px;line-height:1.3;width:22px;font-size:3.7px;color:#0a2a34;text-align:center;overflow:hidden;font-weight:bold;text-shadow:0 0 0.25px #0a2a34;opacity:1">PVerb</div>
<div style="position:absolute;left:274.7px;top:247.8px;width:20px;height:5px;background:#555;border:0.5px solid #474747;box-shadow:inset 0 0.6px 0 #666;"></div>
<div style="position:absolute;left:274.7px;top:253.9px;width:20px;height:5px;background:#555;border:0.5px solid #474747;box-shadow:inset 0 0.6px 0 #666;"></div>
<div class="t" style="left:273.7px;top:266.64px;line-height:1.3;width:22px;font-size:3.7px;color:#dedede;text-align:center;overflow:hidden;font-weight:bold;text-shadow:0 0 0.25px #dedede;opacity:1">Sends</div>
<div style="position:absolute;left:274.7px;top:271px;width:20px;height:3.5px;background:#555;border:0.5px solid #474747;"></div>
<div style="position:absolute;left:274.7px;top:275px;width:20px;height:3.5px;background:#555;border:0.5px solid #474747;"></div>
<div class="t" style="left:273.7px;top:284.38px;line-height:1.3;width:22px;font-size:3.5px;color:#dedede;text-align:center;overflow:hidden;opacity:1">I/O</div>
<div style="position:absolute;left:274.0px;top:288.2px;width:21.4px;height:4.4px;background:linear-gradient(#a8ecf8,#70cce0);box-shadow:0 0 0 0.5px #d8f4f8,0 0 0 1px #3a7a88;"></div>
<div class="t" style="left:273.7px;top:289.09px;line-height:1.3;width:22px;font-size:3.4px;color:#0a2a34;text-align:center;overflow:hidden;font-weight:bold;text-shadow:0 0 0.25px #0a2a34;opacity:1">EXS24</div>
<div style="position:absolute;left:274.0px;top:293.5px;width:21.4px;height:4.4px;background:linear-gradient(#f2f2f2,#d4d4d4);box-shadow:0 0 0 0.5px #3a3a3a;"></div>
<div class="t" style="left:273.7px;top:294.61px;line-height:1.3;width:22px;font-size:3.3px;color:#3a2020;text-align:center;overflow:hidden;font-weight:bold;text-shadow:0 0 0.25px #3a2020;opacity:1">Output 1-2</div>
<div class="t" style="left:272.7px;top:300.83px;line-height:1.3;width:24px;font-size:3.8px;color:#e8e8e8;text-align:center;overflow:hidden;font-weight:bold;text-shadow:0 0 0.25px #e8e8e8;opacity:1">Inst 6</div>
<div style="position:absolute;left:274.7px;top:305.5px;width:20px;height:5px;background:#4c4c4c;border:0.5px solid #444;"></div>
<div style="position:absolute;left:281.7px;top:312.2px;width:1.8px;height:1.8px;border-radius:50%;background:#ccc;"></div>
<div style="position:absolute;left:284.7px;top:312.5px;width:3.5px;height:1.5px;background:#aaa;opacity:0.8;"></div>
<div style="position:absolute;left:275.3px;top:319.5px;width:5.8px;height:54px;background:linear-gradient(90deg,#24140c,#3a2216 20%,#5a3a2a 45%,#2a1810 50%,#5a3a2a 55%,#3a2216 80%,#24140c);border:0.5px solid #2a2a2a;"></div>
<div style="position:absolute;left:275.7px;top:320px;width:5px;height:2.6px;background:linear-gradient(90deg,#c88020 0 45%,#5a3a20 45% 55%,#c88020 55%);"></div>
<div style="position:absolute;left:283.7px;top:319px;width:11px;height:11px;border-radius:50%;background:radial-gradient(circle at 50% 40%,#7a7a7a,#626262 65%,#555);border:1.1px solid #3c3c3c;"></div>
<div style="position:absolute;left:287.5px;top:323.6px;width:3.5px;height:2px;background:#f0f0f0;opacity:0.75;"></div>
<div style="position:absolute;left:288.5px;top:319.8px;width:1.5px;height:1.5px;border-radius:50%;background:#e8e8e8;"></div>
<div style="position:absolute;left:285.6px;top:353.40000000000003px;width:1.7px;height:14.599999999999977px;background:linear-gradient(90deg,#5ab0c4,#9ae0f0,#5ab0c4);"></div>
<div style="position:absolute;left:291.2px;top:353.6px;width:0.6px;height:14.399999999999977px;background:#7a7a7a;opacity:.6"></div>
<div style="position:absolute;left:285.2px;top:349.6px;width:10.5px;height:3.9px;background:#262626;border:0.5px solid #777;"></div>
<div class="t" style="left:285.2px;top:349.77px;line-height:1.3;width:10.5px;font-size:3.2px;color:#e8e8e8;text-align:center;overflow:hidden;font-weight:bold;text-shadow:0 0 0.25px #e8e8e8;opacity:1">-13.4</div>
<div style="position:absolute;left:285.7px;top:370.2px;width:3px;height:1.6px;background:#999;opacity:0.6;"></div>
<div style="position:absolute;left:290.2px;top:370.2px;width:3px;height:1.6px;background:#999;opacity:0.6;"></div>
<div style="position:absolute;left:273.2px;top:383.3px;width:23px;height:8.7px;background:linear-gradient(#7cc88c,#7cc88c);border:0.5px solid #4a4a4a;border-radius:0.5px;"></div>
<div style="position:absolute;left:278.7px;top:384.9px;width:12.0px;height:2.2px;background:#0a2a10;opacity:0.58;border-radius:0.6px"></div>
<div style="position:absolute;left:283.7px;top:388.8px;width:1.8px;height:2px;background:#0a2a10;opacity:0.5;"></div>
<div style="position:absolute;left:296.85px;top:207px;width:24.65px;height:186.5px;background:#5a5a5a;"></div>
<div style="position:absolute;left:320.85px;top:207px;width:0.8px;height:186.5px;background:#484848;"></div>
<div style="position:absolute;left:298.65000000000003px;top:209.3px;width:21.4px;height:4.5px;background:linear-gradient(#ececec,#d0d0d0);box-shadow:0 0 0 0.5px #333;"></div>
<div class="t" style="left:298.35px;top:209.89px;line-height:1.3;width:22px;font-size:3.4px;color:#111;text-align:center;overflow:hidden;font-weight:bold;text-shadow:0 0 0.25px #111;opacity:1">Standard...</div>
<div style="position:absolute;left:298.35px;top:216px;width:22px;height:8px;background:#1c2026;border:0.5px solid #0e0e0e;"></div>
<div class="t" style="left:298.35px;top:225.44px;line-height:1.3;width:22px;font-size:3.7px;color:#dedede;text-align:center;overflow:hidden;font-weight:bold;text-shadow:0 0 0.25px #dedede;opacity:1">Inserts</div>
<div style="position:absolute;left:298.65000000000003px;top:229.7px;width:21.4px;height:4.6px;background:linear-gradient(#a8ecf8,#70cce0);box-shadow:0 0 0 0.5px #d8f4f8,0 0 0 1px #3a7a88;"></div>
<div class="t" style="left:298.35px;top:230.34px;line-height:1.3;width:22px;font-size:3.7px;color:#0a2a34;text-align:center;overflow:hidden;font-weight:bold;text-shadow:0 0 0.25px #0a2a34;opacity:1">Compressor</div>
<div style="position:absolute;left:298.65000000000003px;top:235.79999999999998px;width:21.4px;height:4.6px;background:linear-gradient(#a8ecf8,#70cce0);box-shadow:0 0 0 0.5px #d8f4f8,0 0 0 1px #3a7a88;"></div>
<div class="t" style="left:298.35px;top:236.44px;line-height:1.3;width:22px;font-size:3.7px;color:#0a2a34;text-align:center;overflow:hidden;font-weight:bold;text-shadow:0 0 0.25px #0a2a34;opacity:1">Channel EQ</div>
<div style="position:absolute;left:298.65000000000003px;top:241.89999999999998px;width:21.4px;height:4.6px;background:linear-gradient(#a8ecf8,#70cce0);box-shadow:0 0 0 0.5px #d8f4f8,0 0 0 1px #3a7a88;"></div>
<div class="t" style="left:298.35px;top:242.54px;line-height:1.3;width:22px;font-size:3.7px;color:#0a2a34;text-align:center;overflow:hidden;font-weight:bold;text-shadow:0 0 0.25px #0a2a34;opacity:1">Limiter</div>
<div style="position:absolute;left:298.65000000000003px;top:248.0px;width:21.4px;height:4.6px;background:linear-gradient(#a8ecf8,#70cce0);box-shadow:0 0 0 0.5px #d8f4f8,0 0 0 1px #3a7a88;"></div>
<div class="t" style="left:298.35px;top:248.65px;line-height:1.3;width:22px;font-size:3.7px;color:#0a2a34;text-align:center;overflow:hidden;font-weight:bold;text-shadow:0 0 0.25px #0a2a34;opacity:1">SilverVerb</div>
<div style="position:absolute;left:299.35px;top:253.9px;width:20px;height:5px;background:#555;border:0.5px solid #474747;box-shadow:inset 0 0.6px 0 #666;"></div>
<div class="t" style="left:298.35px;top:266.64px;line-height:1.3;width:22px;font-size:3.7px;color:#dedede;text-align:center;overflow:hidden;font-weight:bold;text-shadow:0 0 0.25px #dedede;opacity:1">Sends</div>
<div style="position:absolute;left:299.35px;top:271px;width:20px;height:3.5px;background:#555;border:0.5px solid #474747;"></div>
<div style="position:absolute;left:299.35px;top:275px;width:20px;height:3.5px;background:#555;border:0.5px solid #474747;"></div>
<div class="t" style="left:298.35px;top:284.38px;line-height:1.3;width:22px;font-size:3.5px;color:#dedede;text-align:center;overflow:hidden;opacity:1">I/O</div>
<div style="position:absolute;left:298.65000000000003px;top:288.2px;width:21.4px;height:4.4px;background:linear-gradient(#a8ecf8,#70cce0);box-shadow:0 0 0 0.5px #d8f4f8,0 0 0 1px #3a7a88;"></div>
<div class="t" style="left:298.35px;top:289.09px;line-height:1.3;width:22px;font-size:3.4px;color:#0a2a34;text-align:center;overflow:hidden;font-weight:bold;text-shadow:0 0 0.25px #0a2a34;opacity:1">EXS24</div>
<div style="position:absolute;left:298.65000000000003px;top:293.5px;width:21.4px;height:4.4px;background:linear-gradient(#f2f2f2,#d4d4d4);box-shadow:0 0 0 0.5px #3a3a3a;"></div>
<div class="t" style="left:298.35px;top:294.61px;line-height:1.3;width:22px;font-size:3.3px;color:#3a2020;text-align:center;overflow:hidden;font-weight:bold;text-shadow:0 0 0.25px #3a2020;opacity:1">Output 1-2</div>
<div class="t" style="left:297.35px;top:300.83px;line-height:1.3;width:24px;font-size:3.8px;color:#e8e8e8;text-align:center;overflow:hidden;font-weight:bold;text-shadow:0 0 0.25px #e8e8e8;opacity:1">Inst 7</div>
<div style="position:absolute;left:299.35px;top:305.5px;width:20px;height:5px;background:#4c4c4c;border:0.5px solid #444;"></div>
<div style="position:absolute;left:306.35px;top:312.2px;width:1.8px;height:1.8px;border-radius:50%;background:#ccc;"></div>
<div style="position:absolute;left:309.35px;top:312.5px;width:3.5px;height:1.5px;background:#aaa;opacity:0.8;"></div>
<div style="position:absolute;left:299.95000000000005px;top:319.5px;width:5.8px;height:54px;background:linear-gradient(90deg,#24140c,#3a2216 20%,#5a3a2a 45%,#2a1810 50%,#5a3a2a 55%,#3a2216 80%,#24140c);border:0.5px solid #2a2a2a;"></div>
<div style="position:absolute;left:300.35px;top:320px;width:5px;height:2.6px;background:linear-gradient(90deg,#c88020 0 45%,#5a3a20 45% 55%,#c88020 55%);"></div>
<div style="position:absolute;left:308.35px;top:319px;width:11px;height:11px;border-radius:50%;background:radial-gradient(circle at 50% 40%,#7a7a7a,#626262 65%,#555);border:1.1px solid #3c3c3c;"></div>
<div style="position:absolute;left:310.25000000000006px;top:352.8px;width:1.7px;height:15.2px;background:linear-gradient(90deg,#5ab0c4,#9ae0f0,#5ab0c4);"></div>
<div style="position:absolute;left:315.85px;top:353px;width:0.6px;height:15px;background:#7a7a7a;opacity:.6"></div>
<div style="position:absolute;left:309.85px;top:349px;width:10.5px;height:3.9px;background:#262626;border:0.5px solid #777;"></div>
<div class="t" style="left:309.85px;top:349.17px;line-height:1.3;width:10.5px;font-size:3.2px;color:#e8e8e8;text-align:center;overflow:hidden;font-weight:bold;text-shadow:0 0 0.25px #e8e8e8;opacity:1">-17.3</div>
<div style="position:absolute;left:310.35px;top:370.2px;width:3px;height:1.6px;background:#999;opacity:0.6;"></div>
<div style="position:absolute;left:314.85px;top:370.2px;width:3px;height:1.6px;background:#999;opacity:0.6;"></div>
<div style="position:absolute;left:297.85px;top:383.3px;width:23px;height:8.7px;background:linear-gradient(#7cc88c,#7cc88c);border:0.5px solid #4a4a4a;border-radius:0.5px;"></div>
<div style="position:absolute;left:303.35px;top:384.9px;width:12.0px;height:2.2px;background:#0a2a10;opacity:0.58;border-radius:0.6px"></div>
<div style="position:absolute;left:308.35px;top:388.8px;width:1.8px;height:2px;background:#0a2a10;opacity:0.5;"></div>
<div style="position:absolute;left:321.5px;top:207px;width:24.65px;height:186.5px;background:#5a5a5a;"></div>
<div style="position:absolute;left:345.5px;top:207px;width:0.8px;height:186.5px;background:#484848;"></div>
<div style="position:absolute;left:323.3px;top:209.3px;width:21.4px;height:4.5px;background:linear-gradient(#ececec,#d0d0d0);box-shadow:0 0 0 0.5px #333;"></div>
<div class="t" style="left:323.0px;top:209.89px;line-height:1.3;width:22px;font-size:3.4px;color:#111;text-align:center;overflow:hidden;font-weight:bold;text-shadow:0 0 0.25px #111;opacity:1">Orchestr...</div>
<div style="position:absolute;left:323.0px;top:216px;width:22px;height:8px;background:#1c2026;border:0.5px solid #0e0e0e;"></div>
<div class="t" style="left:323.0px;top:225.44px;line-height:1.3;width:22px;font-size:3.7px;color:#dedede;text-align:center;overflow:hidden;font-weight:bold;text-shadow:0 0 0.25px #dedede;opacity:1">Inserts</div>
<div style="position:absolute;left:324.0px;top:229.5px;width:20px;height:5px;background:#555;border:0.5px solid #474747;box-shadow:inset 0 0.6px 0 #666;"></div>
<div style="position:absolute;left:324.0px;top:235.6px;width:20px;height:5px;background:#555;border:0.5px solid #474747;box-shadow:inset 0 0.6px 0 #666;"></div>
<div style="position:absolute;left:324.0px;top:241.7px;width:20px;height:5px;background:#555;border:0.5px solid #474747;box-shadow:inset 0 0.6px 0 #666;"></div>
<div style="position:absolute;left:324.0px;top:247.8px;width:20px;height:5px;background:#555;border:0.5px solid #474747;box-shadow:inset 0 0.6px 0 #666;"></div>
<div style="position:absolute;left:324.0px;top:253.9px;width:20px;height:5px;background:#555;border:0.5px solid #474747;box-shadow:inset 0 0.6px 0 #666;"></div>
<div class="t" style="left:323.0px;top:230.34px;line-height:1.3;width:22px;font-size:3.7px;color:#9a9a9a;text-align:center;overflow:hidden;font-weight:bold;text-shadow:0 0 0.25px #9a9a9a;opacity:1">Compressor</div>
<div class="t" style="left:323.0px;top:236.44px;line-height:1.3;width:22px;font-size:3.7px;color:#9a9a9a;text-align:center;overflow:hidden;font-weight:bold;text-shadow:0 0 0.25px #9a9a9a;opacity:1">Channel EQ</div>
<div class="t" style="left:323.0px;top:266.64px;line-height:1.3;width:22px;font-size:3.7px;color:#dedede;text-align:center;overflow:hidden;font-weight:bold;text-shadow:0 0 0.25px #dedede;opacity:1">Sends</div>
<div style="position:absolute;left:324.0px;top:271px;width:20px;height:3.5px;background:#555;border:0.5px solid #474747;"></div>
<div style="position:absolute;left:324.0px;top:275px;width:20px;height:3.5px;background:#555;border:0.5px solid #474747;"></div>
<div class="t" style="left:323.0px;top:284.38px;line-height:1.3;width:22px;font-size:3.5px;color:#dedede;text-align:center;overflow:hidden;opacity:1">I/O</div>
<div style="position:absolute;left:323.3px;top:288.2px;width:21.4px;height:4.4px;background:linear-gradient(#a8ecf8,#70cce0);box-shadow:0 0 0 0.5px #d8f4f8,0 0 0 1px #3a7a88;"></div>
<div class="t" style="left:323.0px;top:289.09px;line-height:1.3;width:22px;font-size:3.4px;color:#0a2a34;text-align:center;overflow:hidden;font-weight:bold;text-shadow:0 0 0.25px #0a2a34;opacity:1">Drum Kits</div>
<div style="position:absolute;left:323.3px;top:293.5px;width:21.4px;height:4.4px;background:linear-gradient(#f2f2f2,#d4d4d4);box-shadow:0 0 0 0.5px #3a3a3a;"></div>
<div class="t" style="left:323.0px;top:294.61px;line-height:1.3;width:22px;font-size:3.3px;color:#3a2020;text-align:center;overflow:hidden;font-weight:bold;text-shadow:0 0 0.25px #3a2020;opacity:1">Output 1-2</div>
<div class="t" style="left:322.0px;top:300.83px;line-height:1.3;width:24px;font-size:3.8px;color:#e8e8e8;text-align:center;overflow:hidden;font-weight:bold;text-shadow:0 0 0.25px #e8e8e8;opacity:1">Inst 8</div>
<div style="position:absolute;left:324.0px;top:305.5px;width:20px;height:5px;background:#4c4c4c;border:0.5px solid #444;"></div>
<div style="position:absolute;left:331.0px;top:312.2px;width:1.8px;height:1.8px;border-radius:50%;background:#ccc;"></div>
<div style="position:absolute;left:334.0px;top:312.5px;width:3.5px;height:1.5px;background:#aaa;opacity:0.8;"></div>
<div style="position:absolute;left:324.6px;top:319.5px;width:5.8px;height:54px;background:linear-gradient(90deg,#24140c,#3a2216 20%,#5a3a2a 45%,#2a1810 50%,#5a3a2a 55%,#3a2216 80%,#24140c);border:0.5px solid #2a2a2a;"></div>
<div style="position:absolute;left:325.0px;top:320px;width:5px;height:2.6px;background:linear-gradient(90deg,#c88020 0 45%,#5a3a20 45% 55%,#c88020 55%);"></div>
<div style="position:absolute;left:333.0px;top:319px;width:11px;height:11px;border-radius:50%;background:radial-gradient(circle at 50% 40%,#7a7a7a,#626262 65%,#555);border:1.1px solid #3c3c3c;"></div>
<div style="position:absolute;left:334.90000000000003px;top:351.2px;width:1.7px;height:16.800000000000022px;background:linear-gradient(90deg,#5ab0c4,#9ae0f0,#5ab0c4);"></div>
<div style="position:absolute;left:340.5px;top:351.4px;width:0.6px;height:16.600000000000023px;background:#7a7a7a;opacity:.6"></div>
<div style="position:absolute;left:334.5px;top:347.4px;width:10.5px;height:3.9px;background:#262626;border:0.5px solid #777;"></div>
<div class="t" style="left:334.5px;top:347.57px;line-height:1.3;width:10.5px;font-size:3.2px;color:#e8e8e8;text-align:center;overflow:hidden;font-weight:bold;text-shadow:0 0 0.25px #e8e8e8;opacity:1">-17.3</div>
<div style="position:absolute;left:335.0px;top:370.2px;width:3px;height:1.6px;background:#999;opacity:0.6;"></div>
<div style="position:absolute;left:339.5px;top:370.2px;width:3px;height:1.6px;background:#999;opacity:0.6;"></div>
<div style="position:absolute;left:322.5px;top:383.3px;width:23px;height:8.7px;background:linear-gradient(#7cc88c,#7cc88c);border:0.5px solid #4a4a4a;border-radius:0.5px;"></div>
<div style="position:absolute;left:328.0px;top:384.9px;width:12.0px;height:2.2px;background:#0a2a10;opacity:0.58;border-radius:0.6px"></div>
<div style="position:absolute;left:333.0px;top:388.8px;width:1.8px;height:2px;background:#0a2a10;opacity:0.5;"></div>
<div style="position:absolute;left:346.15px;top:207px;width:24.65px;height:186.5px;background:#5a5a5a;"></div>
<div style="position:absolute;left:370.15px;top:207px;width:0.8px;height:186.5px;background:#484848;"></div>
<div style="position:absolute;left:348.65px;top:209px;width:20px;height:5px;background:#6a6a6a;border:0.5px solid #7a7a7a;"></div>
<div style="position:absolute;left:355.65px;top:210.5px;width:6px;height:2px;background:#8a8a8a;opacity:1;"></div>
<div style="position:absolute;left:348.65px;top:216.5px;width:20px;height:7px;background:#666;border:0.5px solid #7a7a7a;"></div>
<div style="position:absolute;left:355.65px;top:219px;width:6px;height:2px;background:#7a7a7a;opacity:1;"></div>
<div class="t" style="left:347.65px;top:225.44px;line-height:1.3;width:22px;font-size:3.7px;color:#dedede;text-align:center;overflow:hidden;font-weight:bold;text-shadow:0 0 0.25px #dedede;opacity:1">Inserts</div>
<div style="position:absolute;left:348.65px;top:229.5px;width:20px;height:5px;background:#555;border:0.5px solid #474747;box-shadow:inset 0 0.6px 0 #666;"></div>
<div style="position:absolute;left:348.65px;top:235.6px;width:20px;height:5px;background:#555;border:0.5px solid #474747;box-shadow:inset 0 0.6px 0 #666;"></div>
<div style="position:absolute;left:348.65px;top:241.7px;width:20px;height:5px;background:#555;border:0.5px solid #474747;box-shadow:inset 0 0.6px 0 #666;"></div>
<div style="position:absolute;left:348.65px;top:247.8px;width:20px;height:5px;background:#555;border:0.5px solid #474747;box-shadow:inset 0 0.6px 0 #666;"></div>
<div style="position:absolute;left:348.65px;top:253.9px;width:20px;height:5px;background:#555;border:0.5px solid #474747;box-shadow:inset 0 0.6px 0 #666;"></div>
<div class="t" style="left:347.65px;top:266.64px;line-height:1.3;width:22px;font-size:3.7px;color:#dedede;text-align:center;overflow:hidden;font-weight:bold;text-shadow:0 0 0.25px #dedede;opacity:1">Sends</div>
<div style="position:absolute;left:348.65px;top:271px;width:20px;height:3.5px;background:#555;border:0.5px solid #474747;"></div>
<div style="position:absolute;left:348.65px;top:275px;width:20px;height:3.5px;background:#555;border:0.5px solid #474747;"></div>
<div class="t" style="left:347.65px;top:284.38px;line-height:1.3;width:22px;font-size:3.5px;color:#dedede;text-align:center;overflow:hidden;opacity:1">I/O</div>
<div style="position:absolute;left:347.95px;top:288.2px;width:21.4px;height:4.4px;background:linear-gradient(#a8ecf8,#70cce0);box-shadow:0 0 0 0.5px #d8f4f8,0 0 0 1px #3a7a88;"></div>
<div class="t" style="left:347.65px;top:289.09px;line-height:1.3;width:22px;font-size:3.4px;color:#0a2a34;text-align:center;overflow:hidden;font-weight:bold;text-shadow:0 0 0.25px #0a2a34;opacity:1">UltraBeat</div>
<div style="position:absolute;left:347.95px;top:293.5px;width:21.4px;height:4.4px;background:linear-gradient(#f2f2f2,#d4d4d4);box-shadow:0 0 0 0.5px #3a3a3a;"></div>
<div class="t" style="left:347.65px;top:294.61px;line-height:1.3;width:22px;font-size:3.3px;color:#3a2020;text-align:center;overflow:hidden;font-weight:bold;text-shadow:0 0 0.25px #3a2020;opacity:1">Output 1-2</div>
<div class="t" style="left:346.65px;top:300.83px;line-height:1.3;width:24px;font-size:3.8px;color:#e8e8e8;text-align:center;overflow:hidden;font-weight:bold;text-shadow:0 0 0.25px #e8e8e8;opacity:1">Inst 256</div>
<div style="position:absolute;left:348.65px;top:305.5px;width:20px;height:5px;background:#4c4c4c;border:0.5px solid #444;"></div>
<div style="position:absolute;left:355.65px;top:312.2px;width:1.8px;height:1.8px;border-radius:50%;background:#ccc;"></div>
<div style="position:absolute;left:358.65px;top:312.5px;width:3.5px;height:1.5px;background:#aaa;opacity:0.8;"></div>
<div style="position:absolute;left:349.25px;top:319.5px;width:5.8px;height:54px;background:#1e140e;border:0.5px solid #2a2a2a;"></div>
<div style="position:absolute;left:357.65px;top:319px;width:11px;height:11px;border-radius:50%;background:radial-gradient(circle at 50% 40%,#7a7a7a,#626262 65%,#555);border:1.1px solid #3c3c3c;"></div>
<div style="position:absolute;left:359.55px;top:344.8px;width:1.7px;height:23.2px;background:linear-gradient(90deg,#5ab0c4,#9ae0f0,#5ab0c4);"></div>
<div style="position:absolute;left:365.15px;top:345px;width:0.6px;height:23px;background:#7a7a7a;opacity:.6"></div>
<div style="position:absolute;left:359.15px;top:341px;width:10.5px;height:3.9px;background:#262626;border:0.5px solid #777;"></div>
<div class="t" style="left:359.15px;top:341.17px;line-height:1.3;width:10.5px;font-size:3.2px;color:#e8e8e8;text-align:center;overflow:hidden;font-weight:bold;text-shadow:0 0 0.25px #e8e8e8;opacity:1">-13.9</div>
<div style="position:absolute;left:359.65px;top:370.2px;width:3px;height:1.6px;background:#999;opacity:0.6;"></div>
<div style="position:absolute;left:364.15px;top:370.2px;width:3px;height:1.6px;background:#999;opacity:0.6;"></div>
<div style="position:absolute;left:347.15px;top:383.3px;width:23px;height:8.7px;background:linear-gradient(#7cc88c,#7cc88c);border:0.5px solid #4a4a4a;border-radius:0.5px;"></div>
<div style="position:absolute;left:353.65px;top:384.9px;width:10.0px;height:2.2px;background:#0a2a10;opacity:0.58;border-radius:0.6px"></div>
<div style="position:absolute;left:357.65px;top:388.8px;width:1.8px;height:2px;background:#0a2a10;opacity:0.5;"></div>
<div style="position:absolute;left:370.79999999999995px;top:207px;width:24.65px;height:186.5px;background:#5a5a5a;"></div>
<div style="position:absolute;left:394.79999999999995px;top:207px;width:0.8px;height:186.5px;background:#484848;"></div>
<div style="position:absolute;left:373.29999999999995px;top:209px;width:20px;height:5px;background:#6a6a6a;border:0.5px solid #7a7a7a;"></div>
<div style="position:absolute;left:380.29999999999995px;top:210.5px;width:6px;height:2px;background:#8a8a8a;opacity:1;"></div>
<div style="position:absolute;left:373.29999999999995px;top:216.5px;width:20px;height:7px;background:#666;border:0.5px solid #7a7a7a;"></div>
<div style="position:absolute;left:380.29999999999995px;top:219px;width:6px;height:2px;background:#7a7a7a;opacity:1;"></div>
<div class="t" style="left:372.29999999999995px;top:225.44px;line-height:1.3;width:22px;font-size:3.7px;color:#dedede;text-align:center;overflow:hidden;font-weight:bold;text-shadow:0 0 0.25px #dedede;opacity:1">Inserts</div>
<div style="position:absolute;left:373.29999999999995px;top:229.5px;width:20px;height:5px;background:#555;border:0.5px solid #474747;box-shadow:inset 0 0.6px 0 #666;"></div>
<div style="position:absolute;left:373.29999999999995px;top:235.6px;width:20px;height:5px;background:#555;border:0.5px solid #474747;box-shadow:inset 0 0.6px 0 #666;"></div>
<div style="position:absolute;left:373.29999999999995px;top:241.7px;width:20px;height:5px;background:#555;border:0.5px solid #474747;box-shadow:inset 0 0.6px 0 #666;"></div>
<div style="position:absolute;left:373.29999999999995px;top:247.8px;width:20px;height:5px;background:#555;border:0.5px solid #474747;box-shadow:inset 0 0.6px 0 #666;"></div>
<div style="position:absolute;left:373.29999999999995px;top:253.9px;width:20px;height:5px;background:#555;border:0.5px solid #474747;box-shadow:inset 0 0.6px 0 #666;"></div>
<div class="t" style="left:371.29999999999995px;top:300.83px;line-height:1.3;width:24px;font-size:3.8px;color:#e8e8e8;text-align:center;overflow:hidden;font-weight:bold;text-shadow:0 0 0.25px #e8e8e8;opacity:1">Output 1-2</div>
<div style="position:absolute;left:373.29999999999995px;top:305.5px;width:20px;height:5px;background:#4c4c4c;border:0.5px solid #444;"></div>
<div style="position:absolute;left:380.29999999999995px;top:312.2px;width:1.8px;height:1.8px;border-radius:50%;background:#ccc;"></div>
<div style="position:absolute;left:383.29999999999995px;top:312.5px;width:3.5px;height:1.5px;background:#aaa;opacity:0.8;"></div>
<div style="position:absolute;left:373.9px;top:319.5px;width:5.8px;height:54px;background:linear-gradient(90deg,#24140c,#3a2216 20%,#5a3a2a 45%,#2a1810 50%,#5a3a2a 55%,#3a2216 80%,#24140c);border:0.5px solid #2a2a2a;"></div>
<div style="position:absolute;left:374.29999999999995px;top:320px;width:5px;height:2.6px;background:#e02a2a;"></div>
<div style="position:absolute;left:382.29999999999995px;top:319px;width:11px;height:11px;border-radius:50%;background:radial-gradient(circle at 50% 40%,#7a7a7a,#626262 65%,#555);border:1.1px solid #3c3c3c;"></div>
<div style="position:absolute;left:384.2px;top:344.8px;width:1.7px;height:23.2px;background:linear-gradient(90deg,#5ab0c4,#9ae0f0,#5ab0c4);"></div>
<div style="position:absolute;left:389.79999999999995px;top:345px;width:0.6px;height:23px;background:#7a7a7a;opacity:.6"></div>
<div style="position:absolute;left:383.79999999999995px;top:341px;width:10.5px;height:3.9px;background:#262626;border:0.5px solid #777;"></div>
<div class="t" style="left:383.79999999999995px;top:341.17px;line-height:1.3;width:10.5px;font-size:3.2px;color:#e8e8e8;text-align:center;overflow:hidden;font-weight:bold;text-shadow:0 0 0.25px #e8e8e8;opacity:1">-13.9</div>
<div style="position:absolute;left:384.29999999999995px;top:370.2px;width:3px;height:1.6px;background:#999;opacity:0.6;"></div>
<div style="position:absolute;left:388.79999999999995px;top:370.2px;width:3px;height:1.6px;background:#999;opacity:0.6;"></div>
<div style="position:absolute;left:373.79999999999995px;top:376px;width:6px;height:4px;background:#666;border:0.5px solid #3a3a3a;"></div>
<div style="position:absolute;left:382.79999999999995px;top:376px;width:4.5px;height:4px;background:#666;border:0.5px solid #3a3a3a;"></div>
<div style="position:absolute;left:388.79999999999995px;top:376px;width:4.5px;height:4px;background:#666;border:0.5px solid #3a3a3a;"></div>
<div style="position:absolute;left:371.79999999999995px;top:383.3px;width:23px;height:8.7px;background:linear-gradient(#d8d890,#d8d890);border:0.5px solid #4a4a4a;border-radius:0.5px;"></div>
<div style="position:absolute;left:374.29999999999995px;top:384.9px;width:18px;height:2.2px;background:#3a3a10;opacity:0.58;border-radius:0.6px"></div>
<div style="position:absolute;left:382.29999999999995px;top:388.8px;width:1.8px;height:2px;background:#3a3a10;opacity:0.5;"></div>
<div style="position:absolute;left:395.45px;top:207px;width:24.65px;height:186.5px;background:#5a5a5a;"></div>
<div style="position:absolute;left:419.45px;top:207px;width:0.8px;height:186.5px;background:#484848;"></div>
<div class="t" style="left:395.95px;top:300.83px;line-height:1.3;width:24px;font-size:3.8px;color:#e8e8e8;text-align:center;overflow:hidden;font-weight:bold;text-shadow:0 0 0.25px #e8e8e8;opacity:1">Master</div>
<div style="position:absolute;left:397.95px;top:305.5px;width:20px;height:5px;background:#4c4c4c;border:0.5px solid #444;"></div>
<div style="position:absolute;left:404.95px;top:312.2px;width:1.8px;height:1.8px;border-radius:50%;background:#ccc;"></div>
<div style="position:absolute;left:407.95px;top:312.5px;width:3.5px;height:1.5px;background:#aaa;opacity:0.8;"></div>
<div style="position:absolute;left:408.85px;top:341.3px;width:1.7px;height:26.7px;background:linear-gradient(90deg,#5ab0c4,#9ae0f0,#5ab0c4);"></div>
<div style="position:absolute;left:414.45px;top:341.5px;width:0.6px;height:26.5px;background:#7a7a7a;opacity:.6"></div>
<div style="position:absolute;left:408.45px;top:337.5px;width:10.5px;height:3.9px;background:#262626;border:0.5px solid #777;"></div>
<div class="t" style="left:408.45px;top:337.67px;line-height:1.3;width:10.5px;font-size:3.2px;color:#e8e8e8;text-align:center;overflow:hidden;font-weight:bold;text-shadow:0 0 0.25px #e8e8e8;opacity:1">-13.1</div>
<div style="position:absolute;left:408.95px;top:370.2px;width:3px;height:1.6px;background:#999;opacity:0.6;"></div>
<div style="position:absolute;left:413.45px;top:370.2px;width:3px;height:1.6px;background:#999;opacity:0.6;"></div>
<div style="position:absolute;left:396.45px;top:383.3px;width:23px;height:8.7px;background:linear-gradient(#d8d890,#d8d890);border:0.5px solid #4a4a4a;border-radius:0.5px;"></div>
<div style="position:absolute;left:403.95px;top:384.9px;width:8.0px;height:2.2px;background:#3a3a10;opacity:0.58;border-radius:0.6px"></div>
<div style="position:absolute;left:406.95px;top:388.8px;width:1.8px;height:2px;background:#3a3a10;opacity:0.5;"></div>
<div style="position:absolute;left:198.8px;top:206.3px;width:26px;height:187.5px;border:2px solid #70c48a;"></div>
<div style="position:absolute;left:69px;top:319.5px;width:4px;height:1.8px;background:#aaa;opacity:0.7;"></div>
<div style="position:absolute;left:69px;top:328px;width:2px;height:1.8px;background:#aaa;opacity:0.7;"></div>
<div style="position:absolute;left:69px;top:338px;width:2px;height:1.8px;background:#aaa;opacity:0.7;"></div>
<div style="position:absolute;left:69px;top:347px;width:2px;height:1.8px;background:#aaa;opacity:0.7;"></div>
<div style="position:absolute;left:69px;top:355px;width:3px;height:1.8px;background:#aaa;opacity:0.7;"></div>
<div style="position:absolute;left:69px;top:361px;width:3px;height:1.8px;background:#aaa;opacity:0.7;"></div>
<div style="position:absolute;left:69px;top:367px;width:3px;height:1.8px;background:#aaa;opacity:0.7;"></div>
<div style="position:absolute;left:69px;top:371px;width:3px;height:1.8px;background:#aaa;opacity:0.7;"></div>
<div style="position:absolute;left:67px;top:312px;width:4px;height:3px;border-radius:50%;background:#999;"></div>
<div style="position:absolute;left:420.5px;top:207px;width:1px;height:186.5px;background:#454545;"></div>
<div style="position:absolute;left:528px;top:28px;width:137px;height:379px;background:#c2c2c2;"></div>
<div style="position:absolute;left:528px;top:28px;width:1px;height:379px;background:#a0a0a0;"></div>
<div style="position:absolute;left:662px;top:28px;width:3px;height:401px;background:#a4a4a4;"></div>
<div style="position:absolute;left:532.5px;top:27.6px;width:129px;height:6.5px;background:linear-gradient(#bebebe,#b2b2b2);"></div>
<div style="position:absolute;left:532.5px;top:27px;width:31.5px;height:8px;background:#d2d2d2;border-radius:1.5px 1.5px 0 0;"></div>
<div style="position:absolute;left:596.5px;top:28px;width:0.6px;height:5.5px;background:#9a9a9a;"></div>
<div style="position:absolute;left:628.5px;top:28px;width:0.6px;height:5.5px;background:#9a9a9a;"></div>
<div style="position:absolute;left:541px;top:29.6px;width:14px;height:2.2px;background:#333;opacity:0.58;border-radius:0.6px"></div>
<div style="position:absolute;left:574px;top:29.6px;width:13px;height:2.2px;background:#333;opacity:0.58;border-radius:0.6px"></div>
<div style="position:absolute;left:609px;top:29.6px;width:9px;height:2.2px;background:#333;opacity:0.58;border-radius:0.6px"></div>
<div style="position:absolute;left:635px;top:29.6px;width:22px;height:2.2px;background:#333;opacity:0.58;border-radius:0.6px"></div>
<div style="position:absolute;left:532.5px;top:34px;width:129.5px;height:41.5px;background:#d0d0d0;"></div>
<div style="position:absolute;left:535.8px;top:37.6px;width:7.4px;height:6.8px;background:linear-gradient(#fafafa,#e0e0e0);border:0.5px solid #9a9a9a;border-radius:1px;"></div>
<div style="position:absolute;left:538px;top:39.5px;width:3px;height:3px;background:linear-gradient(135deg,#333 45%,transparent 50%);"></div>
<div style="position:absolute;left:547.4px;top:37.6px;width:8.9px;height:6.8px;background:radial-gradient(#f4f0b0,#dcd470);border:0.5px solid #b0a850;border-radius:1px;"></div>
<div style="position:absolute;left:549.5px;top:39.2px;width:4.5px;height:3.5px;background:#8a7a40;opacity:.7"></div>
<div style="position:absolute;left:559.5px;top:37.6px;width:8.9px;height:6.8px;background:radial-gradient(#c0d4f8,#7098e0);border:0.5px solid #5070b0;border-radius:1px;"></div>
<div style="position:absolute;left:563px;top:39.5px;width:1.6px;height:3px;background:#223;"></div>
<div style="position:absolute;left:571.6px;top:37.6px;width:7.9px;height:6.8px;background:linear-gradient(#fafafa,#e0e0e0);border:0.5px solid #9a9a9a;border-radius:1px;"></div>
<div style="position:absolute;left:573.5px;top:39.5px;width:4px;height:3px;background:#555;opacity:.6"></div>
<div style="position:absolute;left:583px;top:37.6px;width:9px;height:6.8px;background:radial-gradient(#d0f4d0,#60c060);border:0.5px solid #3a9a3a;border-radius:1px;"></div>
<div style="position:absolute;left:585.5px;top:39.5px;width:4px;height:3px;background:#1a5a1a;opacity:.7"></div>
<div style="position:absolute;left:595.8px;top:38px;width:47.6px;height:5.5px;background:linear-gradient(#fafafa,#e2e2e2);border:0.5px solid #9a9a9a;border-radius:1px;"></div>
<div style="position:absolute;left:597.5px;top:39.6px;width:6px;height:2.3px;background:#222;opacity:0.65;border-radius:0.6px"></div>
<div style="position:absolute;left:606.5px;top:40.2px;width:2px;height:1.6px;background:#333;clip-path:polygon(0 0,100% 0,50% 100%);"></div>
<div style="position:absolute;left:614.5px;top:39.6px;width:6px;height:2.3px;background:#222;opacity:0.65;border-radius:0.6px"></div>
<div style="position:absolute;left:623.5px;top:40.2px;width:2px;height:1.6px;background:#333;clip-path:polygon(0 0,100% 0,50% 100%);"></div>
<div style="position:absolute;left:631.5px;top:39.6px;width:6px;height:2.3px;background:#222;opacity:0.65;border-radius:0.6px"></div>
<div style="position:absolute;left:640.5px;top:40.2px;width:2px;height:1.6px;background:#333;clip-path:polygon(0 0,100% 0,50% 100%);"></div>
<div style="position:absolute;left:612px;top:38.5px;width:0.5px;height:4.5px;background:#aaa;"></div>
<div style="position:absolute;left:629px;top:38.5px;width:0.5px;height:4.5px;background:#aaa;"></div>
<div style="position:absolute;left:535px;top:47.6px;width:20.5px;height:4.6px;background:linear-gradient(#b0b0b0,#909090);border:0.5px solid #777;"></div>
<div style="position:absolute;left:537px;top:48.8px;width:15px;height:2.1px;background:#222;opacity:0.58;border-radius:0.6px"></div>
<div style="position:absolute;left:555.5px;top:47.6px;width:11.5px;height:4.6px;background:linear-gradient(#f4f4f4,#dcdcdc);border:0.5px solid #999;"></div>
<div style="position:absolute;left:558px;top:48.8px;width:6px;height:2.1px;background:#222;opacity:0.58;border-radius:0.6px"></div>
<div style="position:absolute;left:572px;top:47.6px;width:42px;height:4.6px;background:linear-gradient(#fafafa,#e8e8e8);border:0.5px solid #999;"></div>
<div style="position:absolute;left:574px;top:48.8px;width:15px;height:2.1px;background:#222;opacity:0.58;border-radius:0.6px"></div>
<div style="position:absolute;left:612.2px;top:48px;width:0.6px;height:3.8px;background:#555;"></div>
<div style="position:absolute;left:617.6px;top:47.6px;width:7.9px;height:4.6px;background:linear-gradient(#f4f4f4,#dcdcdc);border:0.5px solid #999;"></div>
<div style="position:absolute;left:620.3px;top:48.6px;width:2.5px;height:2.5px;border-radius:50%;border:0.5px solid #333;"></div>
<div style="position:absolute;left:631.3px;top:46.8px;width:27px;height:6px;background:linear-gradient(#f4f4f4,#dcdcdc);border:0.5px solid #999;border-radius:1px;"></div>
<svg style="position:absolute;left:634px;top:47.5px" width="5" height="5" viewBox="0 0 5 5"><path d="M0.5 0.5 L4 4" stroke="#222" stroke-width="1.1"/></svg>
<svg style="position:absolute;left:643px;top:47.5px" width="5" height="5" viewBox="0 0 5 5"><path d="M0.5 0.5 L4 4" stroke="#222" stroke-width="1.1"/></svg>
<svg style="position:absolute;left:652px;top:47.5px" width="5" height="5" viewBox="0 0 5 5"><path d="M0.5 0.5 L4 4" stroke="#222" stroke-width="1.1"/></svg>
<div style="position:absolute;left:534.7px;top:56.6px;width:125px;height:15.8px;background:#b8b8b8;border:0.5px solid #a0a0a0;"></div>
<div style="position:absolute;left:535.2px;top:57.0px;width:30.199999999999953px;height:7px;background:linear-gradient(#f0f0f0,#dedede);"></div>
<div style="position:absolute;left:545.1px;top:59.4px;width:11px;height:2.3px;background:#222;opacity:0.61;border-radius:0.6px"></div>
<div style="position:absolute;left:566px;top:57.0px;width:31.4px;height:7px;background:linear-gradient(#f0f0f0,#dedede);"></div>
<div style="position:absolute;left:567.5px;top:59.4px;width:29px;height:2.3px;background:#222;opacity:0.61;border-radius:0.6px"></div>
<div style="position:absolute;left:598px;top:57.0px;width:28.9px;height:7px;background:linear-gradient(#f0f0f0,#dedede);"></div>
<div style="position:absolute;left:603.75px;top:59.4px;width:18px;height:2.3px;background:#222;opacity:0.61;border-radius:0.6px"></div>
<div style="position:absolute;left:627.5px;top:57.0px;width:31.4px;height:7px;background:linear-gradient(#f0f0f0,#dedede);"></div>
<div style="position:absolute;left:633.0px;top:59.4px;width:21px;height:2.3px;background:#222;opacity:0.61;border-radius:0.6px"></div>
<div style="position:absolute;left:535.2px;top:64.4px;width:30.199999999999953px;height:7px;background:linear-gradient(#f0f0f0,#dedede);"></div>
<div class="t" style="left:535.2px;top:66.14px;line-height:1.3;width:30.799999999999955px;font-size:3.7px;color:#222;text-align:center;overflow:hidden;font-weight:bold;text-shadow:0 0 0.25px #222;opacity:1">Chnl Pressure</div>
<div style="position:absolute;left:566px;top:64.4px;width:31.4px;height:7px;background:linear-gradient(#f0f0f0,#dedede);"></div>
<div style="position:absolute;left:569.0px;top:66.80000000000001px;width:26px;height:2.3px;background:#222;opacity:0.61;border-radius:0.6px"></div>
<div style="position:absolute;left:598px;top:64.4px;width:28.9px;height:7px;background:linear-gradient(#f0f0f0,#dedede);"></div>
<div class="t" style="left:598px;top:66.14px;line-height:1.3;width:29.5px;font-size:3.7px;color:#222;text-align:center;overflow:hidden;font-weight:bold;text-shadow:0 0 0.25px #222;opacity:1">Syst. Exclusive</div>
<div style="position:absolute;left:627.5px;top:64.4px;width:31.4px;height:7px;background:linear-gradient(#9a9a9a,#8a8a8a);"></div>
<div style="position:absolute;left:637.5px;top:66.80000000000001px;width:12px;height:2.3px;background:#222;opacity:0.61;border-radius:0.6px"></div>
<div style="position:absolute;left:533px;top:76.3px;width:129px;height:4.6px;background:linear-gradient(#f0f0f0,#d8d8d8);border-bottom:0.5px solid #8a8a8a;"></div>
<div style="position:absolute;left:534.5px;top:77.5px;width:6px;height:2.2px;background:#222;opacity:0.61;border-radius:0.6px"></div>
<div style="position:absolute;left:574px;top:77.5px;width:6px;height:2.2px;background:#222;opacity:0.61;border-radius:0.6px"></div>
<div style="position:absolute;left:602px;top:77.5px;width:6px;height:2.2px;background:#222;opacity:0.61;border-radius:0.6px"></div>
<div style="position:absolute;left:611px;top:77.5px;width:3px;height:2.2px;background:#222;opacity:0.61;border-radius:0.6px"></div>
<div style="position:absolute;left:624px;top:77.5px;width:16px;height:2.2px;background:#222;opacity:0.61;border-radius:0.6px"></div>
<div class="t" style="left:592px;top:77.36px;line-height:1.3;width:8px;font-size:3.6px;color:#222;text-align:center;overflow:hidden;font-weight:bold;text-shadow:0 0 0.25px #222;opacity:1">Ch</div>
<div style="position:absolute;left:571px;top:76.5px;width:0.5px;height:4px;background:#a8a8a8;"></div>
<div style="position:absolute;left:592px;top:76.5px;width:0.5px;height:4px;background:#a8a8a8;"></div>
<div style="position:absolute;left:600.5px;top:76.5px;width:0.5px;height:4px;background:#a8a8a8;"></div>
<div style="position:absolute;left:609.5px;top:76.5px;width:0.5px;height:4px;background:#a8a8a8;"></div>
<div style="position:absolute;left:621px;top:76.5px;width:0.5px;height:4px;background:#a8a8a8;"></div>
<div style="position:absolute;left:533px;top:81px;width:126px;height:315px;background:#a5a5a5;"></div>
<div style="position:absolute;left:533px;top:81.6px;width:126px;height:315px;overflow:hidden;"><div style="position:absolute;left:0;top:0.00px;width:126px;height:0.6px;background:#b4b4b4"></div><div class="t" style="left:8px;top:1.60px;font-size:3.9px;color:#262626;font-weight:bold">69</div><div class="t" style="left:17.5px;top:1.60px;font-size:3.9px;color:#262626;font-weight:bold">3</div><div class="t" style="left:25px;top:1.60px;font-size:3.9px;color:#262626;font-weight:bold">1</div><div class="t" style="left:34px;top:1.60px;font-size:3.9px;color:#262626;font-weight:bold">1</div><div class="t" style="left:63px;top:1.60px;font-size:3.9px;color:#262626;font-weight:bold">1</div><div class="t" style="left:69px;top:1.60px;font-size:3.9px;color:#262626;font-weight:bold">B3</div><div class="t" style="left:82px;top:1.60px;font-size:3.9px;color:#262626;font-weight:bold">64</div><div class="t" style="left:115px;top:1.60px;font-size:3.9px;color:#262626;font-weight:bold">231</div><div style="position:absolute;left:41px;top:2.40px;width:9px;height:1.8px;background:#333;opacity:.45"></div><div style="position:absolute;left:100px;top:3.40px;width:12px;height:1px;background:repeating-linear-gradient(90deg,#666 0 0.7px,transparent 0.7px 2.4px);opacity:.6"></div><div style="position:absolute;left:0;top:5.69px;width:126px;height:0.6px;background:#b4b4b4"></div><div class="t" style="left:8px;top:7.29px;font-size:3.9px;color:#262626;font-weight:bold">69</div><div class="t" style="left:17.5px;top:7.29px;font-size:3.9px;color:#262626;font-weight:bold">3</div><div class="t" style="left:25px;top:7.29px;font-size:3.9px;color:#262626;font-weight:bold">2</div><div class="t" style="left:34px;top:7.29px;font-size:3.9px;color:#262626;font-weight:bold">1</div><div class="t" style="left:63px;top:7.29px;font-size:3.9px;color:#262626;font-weight:bold">1</div><div class="t" style="left:69px;top:7.29px;font-size:3.9px;color:#262626;font-weight:bold">C#4</div><div class="t" style="left:82px;top:7.29px;font-size:3.9px;color:#262626;font-weight:bold">64</div><div class="t" style="left:115px;top:7.29px;font-size:3.9px;color:#262626;font-weight:bold">231</div><div style="position:absolute;left:41px;top:8.09px;width:9px;height:1.8px;background:#333;opacity:.45"></div><div style="position:absolute;left:100px;top:9.09px;width:12px;height:1px;background:repeating-linear-gradient(90deg,#666 0 0.7px,transparent 0.7px 2.4px);opacity:.6"></div><div style="position:absolute;left:0;top:11.38px;width:126px;height:0.6px;background:#b4b4b4"></div><div class="t" style="left:8px;top:12.98px;font-size:3.9px;color:#262626;font-weight:bold">69</div><div class="t" style="left:17.5px;top:12.98px;font-size:3.9px;color:#262626;font-weight:bold">4</div><div class="t" style="left:25px;top:12.98px;font-size:3.9px;color:#262626;font-weight:bold">1</div><div class="t" style="left:34px;top:12.98px;font-size:3.9px;color:#262626;font-weight:bold">1</div><div class="t" style="left:63px;top:12.98px;font-size:3.9px;color:#262626;font-weight:bold">1</div><div class="t" style="left:69px;top:12.98px;font-size:3.9px;color:#262626;font-weight:bold">D#4</div><div class="t" style="left:82px;top:12.98px;font-size:3.9px;color:#262626;font-weight:bold">64</div><div class="t" style="left:115px;top:12.98px;font-size:3.9px;color:#262626;font-weight:bold">231</div><div style="position:absolute;left:41px;top:13.78px;width:9px;height:1.8px;background:#333;opacity:.45"></div><div style="position:absolute;left:100px;top:14.78px;width:12px;height:1px;background:repeating-linear-gradient(90deg,#666 0 0.7px,transparent 0.7px 2.4px);opacity:.6"></div><div style="position:absolute;left:0;top:17.07px;width:126px;height:0.6px;background:#b4b4b4"></div><div class="t" style="left:8px;top:18.67px;font-size:3.9px;color:#262626;font-weight:bold">69</div><div class="t" style="left:17.5px;top:18.67px;font-size:3.9px;color:#262626;font-weight:bold">4</div><div class="t" style="left:25px;top:18.67px;font-size:3.9px;color:#262626;font-weight:bold">2</div><div class="t" style="left:34px;top:18.67px;font-size:3.9px;color:#262626;font-weight:bold">1</div><div class="t" style="left:63px;top:18.67px;font-size:3.9px;color:#262626;font-weight:bold">1</div><div class="t" style="left:69px;top:18.67px;font-size:3.9px;color:#262626;font-weight:bold">C#4</div><div class="t" style="left:82px;top:18.67px;font-size:3.9px;color:#262626;font-weight:bold">64</div><div class="t" style="left:115px;top:18.67px;font-size:3.9px;color:#262626;font-weight:bold">231</div><div style="position:absolute;left:41px;top:19.47px;width:9px;height:1.8px;background:#333;opacity:.45"></div><div style="position:absolute;left:100px;top:20.47px;width:12px;height:1px;background:repeating-linear-gradient(90deg,#666 0 0.7px,transparent 0.7px 2.4px);opacity:.6"></div><div style="position:absolute;left:0;top:22.76px;width:126px;height:0.6px;background:#b4b4b4"></div><div class="t" style="left:8px;top:24.36px;font-size:3.9px;color:#262626;font-weight:bold">69</div><div class="t" style="left:17.5px;top:24.36px;font-size:3.9px;color:#262626;font-weight:bold">5</div><div class="t" style="left:25px;top:24.36px;font-size:3.9px;color:#262626;font-weight:bold">1</div><div class="t" style="left:34px;top:24.36px;font-size:3.9px;color:#262626;font-weight:bold">1</div><div class="t" style="left:63px;top:24.36px;font-size:3.9px;color:#262626;font-weight:bold">1</div><div class="t" style="left:69px;top:24.36px;font-size:3.9px;color:#262626;font-weight:bold">D#4</div><div class="t" style="left:82px;top:24.36px;font-size:3.9px;color:#262626;font-weight:bold">64</div><div class="t" style="left:115px;top:24.36px;font-size:3.9px;color:#262626;font-weight:bold">231</div><div style="position:absolute;left:41px;top:25.16px;width:9px;height:1.8px;background:#333;opacity:.45"></div><div style="position:absolute;left:100px;top:26.16px;width:12px;height:1px;background:repeating-linear-gradient(90deg,#666 0 0.7px,transparent 0.7px 2.4px);opacity:.6"></div><div style="position:absolute;left:0;top:28.45px;width:126px;height:0.6px;background:#b4b4b4"></div><div class="t" style="left:8px;top:30.05px;font-size:3.9px;color:#262626;font-weight:bold">69</div><div class="t" style="left:17.5px;top:30.05px;font-size:3.9px;color:#262626;font-weight:bold">5</div><div class="t" style="left:25px;top:30.05px;font-size:3.9px;color:#262626;font-weight:bold">2</div><div class="t" style="left:34px;top:30.05px;font-size:3.9px;color:#262626;font-weight:bold">1</div><div class="t" style="left:63px;top:30.05px;font-size:3.9px;color:#262626;font-weight:bold">1</div><div class="t" style="left:69px;top:30.05px;font-size:3.9px;color:#262626;font-weight:bold">D4</div><div class="t" style="left:82px;top:30.05px;font-size:3.9px;color:#262626;font-weight:bold">64</div><div class="t" style="left:115px;top:30.05px;font-size:3.9px;color:#262626;font-weight:bold">231</div><div style="position:absolute;left:41px;top:30.85px;width:9px;height:1.8px;background:#333;opacity:.45"></div><div style="position:absolute;left:100px;top:31.85px;width:12px;height:1px;background:repeating-linear-gradient(90deg,#666 0 0.7px,transparent 0.7px 2.4px);opacity:.6"></div><div style="position:absolute;left:0;top:34.14px;width:126px;height:0.6px;background:#b4b4b4"></div><div class="t" style="left:8px;top:35.74px;font-size:3.9px;color:#262626;font-weight:bold">69</div><div class="t" style="left:17.5px;top:35.74px;font-size:3.9px;color:#262626;font-weight:bold">6</div><div class="t" style="left:25px;top:35.74px;font-size:3.9px;color:#262626;font-weight:bold">1</div><div class="t" style="left:34px;top:35.74px;font-size:3.9px;color:#262626;font-weight:bold">1</div><div class="t" style="left:63px;top:35.74px;font-size:3.9px;color:#262626;font-weight:bold">1</div><div class="t" style="left:69px;top:35.74px;font-size:3.9px;color:#262626;font-weight:bold">C#4</div><div class="t" style="left:82px;top:35.74px;font-size:3.9px;color:#262626;font-weight:bold">64</div><div class="t" style="left:115px;top:35.74px;font-size:3.9px;color:#262626;font-weight:bold">231</div><div style="position:absolute;left:41px;top:36.54px;width:9px;height:1.8px;background:#333;opacity:.45"></div><div style="position:absolute;left:100px;top:37.54px;width:12px;height:1px;background:repeating-linear-gradient(90deg,#666 0 0.7px,transparent 0.7px 2.4px);opacity:.6"></div><div style="position:absolute;left:0;top:39.83px;width:126px;height:0.6px;background:#b4b4b4"></div><div class="t" style="left:8px;top:41.43px;font-size:3.9px;color:#262626;font-weight:bold">69</div><div class="t" style="left:17.5px;top:41.43px;font-size:3.9px;color:#262626;font-weight:bold">6</div><div class="t" style="left:25px;top:41.43px;font-size:3.9px;color:#262626;font-weight:bold">2</div><div class="t" style="left:34px;top:41.43px;font-size:3.9px;color:#262626;font-weight:bold">1</div><div class="t" style="left:63px;top:41.43px;font-size:3.9px;color:#262626;font-weight:bold">1</div><div class="t" style="left:69px;top:41.43px;font-size:3.9px;color:#262626;font-weight:bold">B3</div><div class="t" style="left:82px;top:41.43px;font-size:3.9px;color:#262626;font-weight:bold">64</div><div class="t" style="left:115px;top:41.43px;font-size:3.9px;color:#262626;font-weight:bold">231</div><div style="position:absolute;left:41px;top:42.23px;width:9px;height:1.8px;background:#333;opacity:.45"></div><div style="position:absolute;left:100px;top:43.23px;width:12px;height:1px;background:repeating-linear-gradient(90deg,#666 0 0.7px,transparent 0.7px 2.4px);opacity:.6"></div><div style="position:absolute;left:0;top:45.52px;width:126px;height:0.6px;background:#b4b4b4"></div><div class="t" style="left:8px;top:47.12px;font-size:3.9px;color:#262626;font-weight:bold">70</div><div class="t" style="left:17.5px;top:47.12px;font-size:3.9px;color:#262626;font-weight:bold">1</div><div class="t" style="left:25px;top:47.12px;font-size:3.9px;color:#262626;font-weight:bold">1</div><div class="t" style="left:34px;top:47.12px;font-size:3.9px;color:#262626;font-weight:bold">1</div><div class="t" style="left:63px;top:47.12px;font-size:3.9px;color:#262626;font-weight:bold">1</div><div class="t" style="left:69px;top:47.12px;font-size:3.9px;color:#262626;font-weight:bold">C#4</div><div class="t" style="left:82px;top:47.12px;font-size:3.9px;color:#262626;font-weight:bold">64</div><div class="t" style="left:115px;top:47.12px;font-size:3.9px;color:#262626;font-weight:bold">231</div><div style="position:absolute;left:41px;top:47.92px;width:9px;height:1.8px;background:#333;opacity:.45"></div><div style="position:absolute;left:100px;top:48.92px;width:12px;height:1px;background:repeating-linear-gradient(90deg,#666 0 0.7px,transparent 0.7px 2.4px);opacity:.6"></div><div style="position:absolute;left:0;top:51.21px;width:126px;height:0.6px;background:#b4b4b4"></div><div class="t" style="left:8px;top:52.81px;font-size:3.9px;color:#262626;font-weight:bold">70</div><div class="t" style="left:17.5px;top:52.81px;font-size:3.9px;color:#262626;font-weight:bold">1</div><div class="t" style="left:25px;top:52.81px;font-size:3.9px;color:#262626;font-weight:bold">2</div><div class="t" style="left:34px;top:52.81px;font-size:3.9px;color:#262626;font-weight:bold">1</div><div class="t" style="left:63px;top:52.81px;font-size:3.9px;color:#262626;font-weight:bold">1</div><div class="t" style="left:69px;top:52.81px;font-size:3.9px;color:#262626;font-weight:bold">D#4</div><div class="t" style="left:82px;top:52.81px;font-size:3.9px;color:#262626;font-weight:bold">64</div><div class="t" style="left:115px;top:52.81px;font-size:3.9px;color:#262626;font-weight:bold">231</div><div style="position:absolute;left:41px;top:53.61px;width:9px;height:1.8px;background:#333;opacity:.45"></div><div style="position:absolute;left:100px;top:54.61px;width:12px;height:1px;background:repeating-linear-gradient(90deg,#666 0 0.7px,transparent 0.7px 2.4px);opacity:.6"></div><div style="position:absolute;left:0;top:56.90px;width:126px;height:0.6px;background:#b4b4b4"></div><div class="t" style="left:8px;top:58.50px;font-size:3.9px;color:#262626;font-weight:bold">70</div><div class="t" style="left:17.5px;top:58.50px;font-size:3.9px;color:#262626;font-weight:bold">2</div><div class="t" style="left:25px;top:58.50px;font-size:3.9px;color:#262626;font-weight:bold">1</div><div class="t" style="left:34px;top:58.50px;font-size:3.9px;color:#262626;font-weight:bold">1</div><div class="t" style="left:63px;top:58.50px;font-size:3.9px;color:#262626;font-weight:bold">1</div><div class="t" style="left:69px;top:58.50px;font-size:3.9px;color:#262626;font-weight:bold">B3</div><div class="t" style="left:82px;top:58.50px;font-size:3.9px;color:#262626;font-weight:bold">64</div><div class="t" style="left:115px;top:58.50px;font-size:3.9px;color:#262626;font-weight:bold">231</div><div style="position:absolute;left:41px;top:59.30px;width:9px;height:1.8px;background:#333;opacity:.45"></div><div style="position:absolute;left:100px;top:60.30px;width:12px;height:1px;background:repeating-linear-gradient(90deg,#666 0 0.7px,transparent 0.7px 2.4px);opacity:.6"></div><div style="position:absolute;left:0;top:62.59px;width:126px;height:0.6px;background:#b4b4b4"></div><div class="t" style="left:8px;top:64.19px;font-size:3.9px;color:#262626;font-weight:bold">70</div><div class="t" style="left:17.5px;top:64.19px;font-size:3.9px;color:#262626;font-weight:bold">2</div><div class="t" style="left:25px;top:64.19px;font-size:3.9px;color:#262626;font-weight:bold">2</div><div class="t" style="left:34px;top:64.19px;font-size:3.9px;color:#262626;font-weight:bold">1</div><div class="t" style="left:63px;top:64.19px;font-size:3.9px;color:#262626;font-weight:bold">1</div><div class="t" style="left:69px;top:64.19px;font-size:3.9px;color:#262626;font-weight:bold">C#3</div><div class="t" style="left:82px;top:64.19px;font-size:3.9px;color:#262626;font-weight:bold">64</div><div class="t" style="left:115px;top:64.19px;font-size:3.9px;color:#262626;font-weight:bold">231</div><div style="position:absolute;left:41px;top:64.99px;width:9px;height:1.8px;background:#333;opacity:.45"></div><div style="position:absolute;left:100px;top:65.99px;width:12px;height:1px;background:repeating-linear-gradient(90deg,#666 0 0.7px,transparent 0.7px 2.4px);opacity:.6"></div><div style="position:absolute;left:0;top:68.28px;width:126px;height:0.6px;background:#b4b4b4"></div><div class="t" style="left:8px;top:69.88px;font-size:3.9px;color:#262626;font-weight:bold">70</div><div class="t" style="left:17.5px;top:69.88px;font-size:3.9px;color:#262626;font-weight:bold">3</div><div class="t" style="left:25px;top:69.88px;font-size:3.9px;color:#262626;font-weight:bold">1</div><div class="t" style="left:34px;top:69.88px;font-size:3.9px;color:#262626;font-weight:bold">1</div><div class="t" style="left:63px;top:69.88px;font-size:3.9px;color:#262626;font-weight:bold">1</div><div class="t" style="left:69px;top:69.88px;font-size:3.9px;color:#262626;font-weight:bold">C3</div><div class="t" style="left:82px;top:69.88px;font-size:3.9px;color:#262626;font-weight:bold">64</div><div class="t" style="left:115px;top:69.88px;font-size:3.9px;color:#262626;font-weight:bold">231</div><div style="position:absolute;left:41px;top:70.68px;width:9px;height:1.8px;background:#333;opacity:.45"></div><div style="position:absolute;left:100px;top:71.68px;width:12px;height:1px;background:repeating-linear-gradient(90deg,#666 0 0.7px,transparent 0.7px 2.4px);opacity:.6"></div><div style="position:absolute;left:0;top:73.97px;width:126px;height:0.6px;background:#b4b4b4"></div><div class="t" style="left:8px;top:75.57px;font-size:3.9px;color:#262626;font-weight:bold">70</div><div class="t" style="left:17.5px;top:75.57px;font-size:3.9px;color:#262626;font-weight:bold">3</div><div class="t" style="left:25px;top:75.57px;font-size:3.9px;color:#262626;font-weight:bold">2</div><div class="t" style="left:34px;top:75.57px;font-size:3.9px;color:#262626;font-weight:bold">1</div><div class="t" style="left:63px;top:75.57px;font-size:3.9px;color:#262626;font-weight:bold">1</div><div class="t" style="left:69px;top:75.57px;font-size:3.9px;color:#262626;font-weight:bold">A#3</div><div class="t" style="left:82px;top:75.57px;font-size:3.9px;color:#262626;font-weight:bold">64</div><div class="t" style="left:115px;top:75.57px;font-size:3.9px;color:#262626;font-weight:bold">231</div><div style="position:absolute;left:41px;top:76.37px;width:9px;height:1.8px;background:#333;opacity:.45"></div><div style="position:absolute;left:100px;top:77.37px;width:12px;height:1px;background:repeating-linear-gradient(90deg,#666 0 0.7px,transparent 0.7px 2.4px);opacity:.6"></div><div style="position:absolute;left:0;top:79.66px;width:126px;height:0.6px;background:#b4b4b4"></div><div class="t" style="left:8px;top:81.26px;font-size:3.9px;color:#262626;font-weight:bold">70</div><div class="t" style="left:17.5px;top:81.26px;font-size:3.9px;color:#262626;font-weight:bold">4</div><div class="t" style="left:25px;top:81.26px;font-size:3.9px;color:#262626;font-weight:bold">1</div><div class="t" style="left:34px;top:81.26px;font-size:3.9px;color:#262626;font-weight:bold">1</div><div class="t" style="left:63px;top:81.26px;font-size:3.9px;color:#262626;font-weight:bold">1</div><div class="t" style="left:69px;top:81.26px;font-size:3.9px;color:#262626;font-weight:bold">E3</div><div class="t" style="left:82px;top:81.26px;font-size:3.9px;color:#262626;font-weight:bold">64</div><div class="t" style="left:115px;top:81.26px;font-size:3.9px;color:#262626;font-weight:bold">231</div><div style="position:absolute;left:41px;top:82.06px;width:9px;height:1.8px;background:#333;opacity:.45"></div><div style="position:absolute;left:100px;top:83.06px;width:12px;height:1px;background:repeating-linear-gradient(90deg,#666 0 0.7px,transparent 0.7px 2.4px);opacity:.6"></div><div style="position:absolute;left:0;top:85.35px;width:126px;height:0.6px;background:#b4b4b4"></div><div class="t" style="left:8px;top:86.95px;font-size:3.9px;color:#262626;font-weight:bold">70</div><div class="t" style="left:17.5px;top:86.95px;font-size:3.9px;color:#262626;font-weight:bold">4</div><div class="t" style="left:25px;top:86.95px;font-size:3.9px;color:#262626;font-weight:bold">2</div><div class="t" style="left:34px;top:86.95px;font-size:3.9px;color:#262626;font-weight:bold">1</div><div class="t" style="left:63px;top:86.95px;font-size:3.9px;color:#262626;font-weight:bold">1</div><div class="t" style="left:69px;top:86.95px;font-size:3.9px;color:#262626;font-weight:bold">C3</div><div class="t" style="left:82px;top:86.95px;font-size:3.9px;color:#262626;font-weight:bold">64</div><div class="t" style="left:115px;top:86.95px;font-size:3.9px;color:#262626;font-weight:bold">231</div><div style="position:absolute;left:41px;top:87.75px;width:9px;height:1.8px;background:#333;opacity:.45"></div><div style="position:absolute;left:100px;top:88.75px;width:12px;height:1px;background:repeating-linear-gradient(90deg,#666 0 0.7px,transparent 0.7px 2.4px);opacity:.6"></div><div style="position:absolute;left:0;top:91.04px;width:126px;height:0.6px;background:#b4b4b4"></div><div class="t" style="left:8px;top:92.64px;font-size:3.9px;color:#262626;font-weight:bold">70</div><div class="t" style="left:17.5px;top:92.64px;font-size:3.9px;color:#262626;font-weight:bold">5</div><div class="t" style="left:25px;top:92.64px;font-size:3.9px;color:#262626;font-weight:bold">1</div><div class="t" style="left:34px;top:92.64px;font-size:3.9px;color:#262626;font-weight:bold">1</div><div class="t" style="left:63px;top:92.64px;font-size:3.9px;color:#262626;font-weight:bold">1</div><div class="t" style="left:69px;top:92.64px;font-size:3.9px;color:#262626;font-weight:bold">D3</div><div class="t" style="left:82px;top:92.64px;font-size:3.9px;color:#262626;font-weight:bold">64</div><div class="t" style="left:115px;top:92.64px;font-size:3.9px;color:#262626;font-weight:bold">231</div><div style="position:absolute;left:41px;top:93.44px;width:9px;height:1.8px;background:#333;opacity:.45"></div><div style="position:absolute;left:100px;top:94.44px;width:12px;height:1px;background:repeating-linear-gradient(90deg,#666 0 0.7px,transparent 0.7px 2.4px);opacity:.6"></div><div style="position:absolute;left:0;top:96.73px;width:126px;height:0.6px;background:#b4b4b4"></div><div class="t" style="left:8px;top:98.33px;font-size:3.9px;color:#262626;font-weight:bold">70</div><div class="t" style="left:17.5px;top:98.33px;font-size:3.9px;color:#262626;font-weight:bold">5</div><div class="t" style="left:25px;top:98.33px;font-size:3.9px;color:#262626;font-weight:bold">2</div><div class="t" style="left:34px;top:98.33px;font-size:3.9px;color:#262626;font-weight:bold">1</div><div class="t" style="left:63px;top:98.33px;font-size:3.9px;color:#262626;font-weight:bold">1</div><div class="t" style="left:69px;top:98.33px;font-size:3.9px;color:#262626;font-weight:bold">E3</div><div class="t" style="left:82px;top:98.33px;font-size:3.9px;color:#262626;font-weight:bold">64</div><div class="t" style="left:115px;top:98.33px;font-size:3.9px;color:#262626;font-weight:bold">231</div><div style="position:absolute;left:41px;top:99.13px;width:9px;height:1.8px;background:#333;opacity:.45"></div><div style="position:absolute;left:100px;top:100.13px;width:12px;height:1px;background:repeating-linear-gradient(90deg,#666 0 0.7px,transparent 0.7px 2.4px);opacity:.6"></div><div style="position:absolute;left:0;top:102.42px;width:126px;height:0.6px;background:#b4b4b4"></div><div class="t" style="left:8px;top:104.02px;font-size:3.9px;color:#262626;font-weight:bold">70</div><div class="t" style="left:17.5px;top:104.02px;font-size:3.9px;color:#262626;font-weight:bold">6</div><div class="t" style="left:25px;top:104.02px;font-size:3.9px;color:#262626;font-weight:bold">1</div><div class="t" style="left:34px;top:104.02px;font-size:3.9px;color:#262626;font-weight:bold">1</div><div class="t" style="left:63px;top:104.02px;font-size:3.9px;color:#262626;font-weight:bold">1</div><div class="t" style="left:69px;top:104.02px;font-size:3.9px;color:#262626;font-weight:bold">C3</div><div class="t" style="left:82px;top:104.02px;font-size:3.9px;color:#262626;font-weight:bold">64</div><div class="t" style="left:115px;top:104.02px;font-size:3.9px;color:#262626;font-weight:bold">231</div><div style="position:absolute;left:41px;top:104.82px;width:9px;height:1.8px;background:#333;opacity:.45"></div><div style="position:absolute;left:100px;top:105.82px;width:12px;height:1px;background:repeating-linear-gradient(90deg,#666 0 0.7px,transparent 0.7px 2.4px);opacity:.6"></div><div style="position:absolute;left:0;top:108.11px;width:126px;height:0.6px;background:#b4b4b4"></div><div class="t" style="left:8px;top:109.71px;font-size:3.9px;color:#262626;font-weight:bold">71</div><div class="t" style="left:17.5px;top:109.71px;font-size:3.9px;color:#262626;font-weight:bold">1</div><div class="t" style="left:25px;top:109.71px;font-size:3.9px;color:#262626;font-weight:bold">1</div><div class="t" style="left:34px;top:109.71px;font-size:3.9px;color:#262626;font-weight:bold">1</div><div class="t" style="left:63px;top:109.71px;font-size:3.9px;color:#262626;font-weight:bold">1</div><div class="t" style="left:69px;top:109.71px;font-size:3.9px;color:#262626;font-weight:bold">A3</div><div class="t" style="left:82px;top:109.71px;font-size:3.9px;color:#262626;font-weight:bold">64</div><div class="t" style="left:115px;top:109.71px;font-size:3.9px;color:#262626;font-weight:bold">231</div><div style="position:absolute;left:41px;top:110.51px;width:9px;height:1.8px;background:#333;opacity:.45"></div><div style="position:absolute;left:100px;top:111.51px;width:12px;height:1px;background:repeating-linear-gradient(90deg,#666 0 0.7px,transparent 0.7px 2.4px);opacity:.6"></div><div style="position:absolute;left:0;top:113.80px;width:126px;height:0.6px;background:#b4b4b4"></div><div class="t" style="left:8px;top:115.40px;font-size:3.9px;color:#262626;font-weight:bold">71</div><div class="t" style="left:17.5px;top:115.40px;font-size:3.9px;color:#262626;font-weight:bold">1</div><div class="t" style="left:25px;top:115.40px;font-size:3.9px;color:#262626;font-weight:bold">2</div><div class="t" style="left:34px;top:115.40px;font-size:3.9px;color:#262626;font-weight:bold">1</div><div class="t" style="left:63px;top:115.40px;font-size:3.9px;color:#262626;font-weight:bold">1</div><div class="t" style="left:69px;top:115.40px;font-size:3.9px;color:#262626;font-weight:bold">C3</div><div class="t" style="left:82px;top:115.40px;font-size:3.9px;color:#262626;font-weight:bold">64</div><div class="t" style="left:115px;top:115.40px;font-size:3.9px;color:#262626;font-weight:bold">231</div><div style="position:absolute;left:41px;top:116.20px;width:9px;height:1.8px;background:#333;opacity:.45"></div><div style="position:absolute;left:100px;top:117.20px;width:12px;height:1px;background:repeating-linear-gradient(90deg,#666 0 0.7px,transparent 0.7px 2.4px);opacity:.6"></div><div style="position:absolute;left:0;top:119.49px;width:126px;height:0.6px;background:#b4b4b4"></div><div class="t" style="left:8px;top:121.09px;font-size:3.9px;color:#262626;font-weight:bold">71</div><div class="t" style="left:17.5px;top:121.09px;font-size:3.9px;color:#262626;font-weight:bold">2</div><div class="t" style="left:25px;top:121.09px;font-size:3.9px;color:#262626;font-weight:bold">1</div><div class="t" style="left:34px;top:121.09px;font-size:3.9px;color:#262626;font-weight:bold">1</div><div class="t" style="left:63px;top:121.09px;font-size:3.9px;color:#262626;font-weight:bold">1</div><div class="t" style="left:69px;top:121.09px;font-size:3.9px;color:#262626;font-weight:bold">D3</div><div class="t" style="left:82px;top:121.09px;font-size:3.9px;color:#262626;font-weight:bold">64</div><div class="t" style="left:115px;top:121.09px;font-size:3.9px;color:#262626;font-weight:bold">231</div><div style="position:absolute;left:41px;top:121.89px;width:9px;height:1.8px;background:#333;opacity:.45"></div><div style="position:absolute;left:100px;top:122.89px;width:12px;height:1px;background:repeating-linear-gradient(90deg,#666 0 0.7px,transparent 0.7px 2.4px);opacity:.6"></div><div style="position:absolute;left:0;top:125.18px;width:126px;height:0.6px;background:#b4b4b4"></div><div class="t" style="left:8px;top:126.78px;font-size:3.9px;color:#262626;font-weight:bold">71</div><div class="t" style="left:17.5px;top:126.78px;font-size:3.9px;color:#262626;font-weight:bold">2</div><div class="t" style="left:25px;top:126.78px;font-size:3.9px;color:#262626;font-weight:bold">2</div><div class="t" style="left:34px;top:126.78px;font-size:3.9px;color:#262626;font-weight:bold">1</div><div class="t" style="left:63px;top:126.78px;font-size:3.9px;color:#262626;font-weight:bold">1</div><div class="t" style="left:69px;top:126.78px;font-size:3.9px;color:#262626;font-weight:bold">C#3</div><div class="t" style="left:82px;top:126.78px;font-size:3.9px;color:#262626;font-weight:bold">64</div><div class="t" style="left:115px;top:126.78px;font-size:3.9px;color:#262626;font-weight:bold">231</div><div style="position:absolute;left:41px;top:127.58px;width:9px;height:1.8px;background:#333;opacity:.45"></div><div style="position:absolute;left:100px;top:128.58px;width:12px;height:1px;background:repeating-linear-gradient(90deg,#666 0 0.7px,transparent 0.7px 2.4px);opacity:.6"></div><div style="position:absolute;left:0;top:130.87px;width:126px;height:0.6px;background:#b4b4b4"></div><div class="t" style="left:8px;top:132.47px;font-size:3.9px;color:#262626;font-weight:bold">71</div><div class="t" style="left:17.5px;top:132.47px;font-size:3.9px;color:#262626;font-weight:bold">3</div><div class="t" style="left:25px;top:132.47px;font-size:3.9px;color:#262626;font-weight:bold">1</div><div class="t" style="left:34px;top:132.47px;font-size:3.9px;color:#262626;font-weight:bold">1</div><div class="t" style="left:63px;top:132.47px;font-size:3.9px;color:#262626;font-weight:bold">1</div><div class="t" style="left:69px;top:132.47px;font-size:3.9px;color:#262626;font-weight:bold">E3</div><div class="t" style="left:82px;top:132.47px;font-size:3.9px;color:#262626;font-weight:bold">64</div><div class="t" style="left:115px;top:132.47px;font-size:3.9px;color:#262626;font-weight:bold">231</div><div style="position:absolute;left:41px;top:133.27px;width:9px;height:1.8px;background:#333;opacity:.45"></div><div style="position:absolute;left:100px;top:134.27px;width:12px;height:1px;background:repeating-linear-gradient(90deg,#666 0 0.7px,transparent 0.7px 2.4px);opacity:.6"></div><div style="position:absolute;left:0;top:136.56px;width:126px;height:0.6px;background:#b4b4b4"></div><div class="t" style="left:8px;top:138.16px;font-size:3.9px;color:#262626;font-weight:bold">71</div><div class="t" style="left:17.5px;top:138.16px;font-size:3.9px;color:#262626;font-weight:bold">3</div><div class="t" style="left:25px;top:138.16px;font-size:3.9px;color:#262626;font-weight:bold">2</div><div class="t" style="left:34px;top:138.16px;font-size:3.9px;color:#262626;font-weight:bold">1</div><div class="t" style="left:63px;top:138.16px;font-size:3.9px;color:#262626;font-weight:bold">1</div><div class="t" style="left:69px;top:138.16px;font-size:3.9px;color:#262626;font-weight:bold">B3</div><div class="t" style="left:82px;top:138.16px;font-size:3.9px;color:#262626;font-weight:bold">64</div><div class="t" style="left:115px;top:138.16px;font-size:3.9px;color:#262626;font-weight:bold">231</div><div style="position:absolute;left:41px;top:138.96px;width:9px;height:1.8px;background:#333;opacity:.45"></div><div style="position:absolute;left:100px;top:139.96px;width:12px;height:1px;background:repeating-linear-gradient(90deg,#666 0 0.7px,transparent 0.7px 2.4px);opacity:.6"></div><div style="position:absolute;left:0;top:142.25px;width:126px;height:0.6px;background:#b4b4b4"></div><div class="t" style="left:8px;top:143.85px;font-size:3.9px;color:#262626;font-weight:bold">71</div><div class="t" style="left:17.5px;top:143.85px;font-size:3.9px;color:#262626;font-weight:bold">4</div><div class="t" style="left:25px;top:143.85px;font-size:3.9px;color:#262626;font-weight:bold">1</div><div class="t" style="left:34px;top:143.85px;font-size:3.9px;color:#262626;font-weight:bold">1</div><div class="t" style="left:63px;top:143.85px;font-size:3.9px;color:#262626;font-weight:bold">1</div><div class="t" style="left:69px;top:143.85px;font-size:3.9px;color:#262626;font-weight:bold">C#4</div><div class="t" style="left:82px;top:143.85px;font-size:3.9px;color:#262626;font-weight:bold">64</div><div class="t" style="left:115px;top:143.85px;font-size:3.9px;color:#262626;font-weight:bold">231</div><div style="position:absolute;left:41px;top:144.65px;width:9px;height:1.8px;background:#333;opacity:.45"></div><div style="position:absolute;left:100px;top:145.65px;width:12px;height:1px;background:repeating-linear-gradient(90deg,#666 0 0.7px,transparent 0.7px 2.4px);opacity:.6"></div><div style="position:absolute;left:0;top:147.94px;width:126px;height:0.6px;background:#b4b4b4"></div><div class="t" style="left:8px;top:149.54px;font-size:3.9px;color:#262626;font-weight:bold">71</div><div class="t" style="left:17.5px;top:149.54px;font-size:3.9px;color:#262626;font-weight:bold">4</div><div class="t" style="left:25px;top:149.54px;font-size:3.9px;color:#262626;font-weight:bold">2</div><div class="t" style="left:34px;top:149.54px;font-size:3.9px;color:#262626;font-weight:bold">1</div><div class="t" style="left:63px;top:149.54px;font-size:3.9px;color:#262626;font-weight:bold">1</div><div class="t" style="left:69px;top:149.54px;font-size:3.9px;color:#262626;font-weight:bold">A3</div><div class="t" style="left:82px;top:149.54px;font-size:3.9px;color:#262626;font-weight:bold">64</div><div class="t" style="left:115px;top:149.54px;font-size:3.9px;color:#262626;font-weight:bold">231</div><div style="position:absolute;left:41px;top:150.34px;width:9px;height:1.8px;background:#333;opacity:.45"></div><div style="position:absolute;left:100px;top:151.34px;width:12px;height:1px;background:repeating-linear-gradient(90deg,#666 0 0.7px,transparent 0.7px 2.4px);opacity:.6"></div><div style="position:absolute;left:0;top:153.63px;width:126px;height:0.6px;background:#b4b4b4"></div><div class="t" style="left:8px;top:155.23px;font-size:3.9px;color:#262626;font-weight:bold">71</div><div class="t" style="left:17.5px;top:155.23px;font-size:3.9px;color:#262626;font-weight:bold">5</div><div class="t" style="left:25px;top:155.23px;font-size:3.9px;color:#262626;font-weight:bold">1</div><div class="t" style="left:34px;top:155.23px;font-size:3.9px;color:#262626;font-weight:bold">1</div><div class="t" style="left:63px;top:155.23px;font-size:3.9px;color:#262626;font-weight:bold">1</div><div class="t" style="left:69px;top:155.23px;font-size:3.9px;color:#262626;font-weight:bold">C3</div><div class="t" style="left:82px;top:155.23px;font-size:3.9px;color:#262626;font-weight:bold">64</div><div class="t" style="left:115px;top:155.23px;font-size:3.9px;color:#262626;font-weight:bold">231</div><div style="position:absolute;left:41px;top:156.03px;width:9px;height:1.8px;background:#333;opacity:.45"></div><div style="position:absolute;left:100px;top:157.03px;width:12px;height:1px;background:repeating-linear-gradient(90deg,#666 0 0.7px,transparent 0.7px 2.4px);opacity:.6"></div><div style="position:absolute;left:0;top:159.32px;width:126px;height:0.6px;background:#b4b4b4"></div><div class="t" style="left:8px;top:160.92px;font-size:3.9px;color:#262626;font-weight:bold">71</div><div class="t" style="left:17.5px;top:160.92px;font-size:3.9px;color:#262626;font-weight:bold">5</div><div class="t" style="left:25px;top:160.92px;font-size:3.9px;color:#262626;font-weight:bold">2</div><div class="t" style="left:34px;top:160.92px;font-size:3.9px;color:#262626;font-weight:bold">1</div><div class="t" style="left:63px;top:160.92px;font-size:3.9px;color:#262626;font-weight:bold">1</div><div class="t" style="left:69px;top:160.92px;font-size:3.9px;color:#262626;font-weight:bold">A3</div><div class="t" style="left:82px;top:160.92px;font-size:3.9px;color:#262626;font-weight:bold">64</div><div class="t" style="left:115px;top:160.92px;font-size:3.9px;color:#262626;font-weight:bold">231</div><div style="position:absolute;left:41px;top:161.72px;width:9px;height:1.8px;background:#333;opacity:.45"></div><div style="position:absolute;left:100px;top:162.72px;width:12px;height:1px;background:repeating-linear-gradient(90deg,#666 0 0.7px,transparent 0.7px 2.4px);opacity:.6"></div><div style="position:absolute;left:0;top:165.01px;width:126px;height:0.6px;background:#b4b4b4"></div><div class="t" style="left:8px;top:166.61px;font-size:3.9px;color:#262626;font-weight:bold">71</div><div class="t" style="left:17.5px;top:166.61px;font-size:3.9px;color:#262626;font-weight:bold">6</div><div class="t" style="left:25px;top:166.61px;font-size:3.9px;color:#262626;font-weight:bold">1</div><div class="t" style="left:34px;top:166.61px;font-size:3.9px;color:#262626;font-weight:bold">1</div><div class="t" style="left:63px;top:166.61px;font-size:3.9px;color:#262626;font-weight:bold">1</div><div class="t" style="left:69px;top:166.61px;font-size:3.9px;color:#262626;font-weight:bold">E3</div><div class="t" style="left:82px;top:166.61px;font-size:3.9px;color:#262626;font-weight:bold">64</div><div class="t" style="left:115px;top:166.61px;font-size:3.9px;color:#262626;font-weight:bold">231</div><div style="position:absolute;left:41px;top:167.41px;width:9px;height:1.8px;background:#333;opacity:.45"></div><div style="position:absolute;left:100px;top:168.41px;width:12px;height:1px;background:repeating-linear-gradient(90deg,#666 0 0.7px,transparent 0.7px 2.4px);opacity:.6"></div><div style="position:absolute;left:0;top:170.70px;width:126px;height:0.6px;background:#b4b4b4"></div><div class="t" style="left:8px;top:172.30px;font-size:3.9px;color:#262626;font-weight:bold">71</div><div class="t" style="left:17.5px;top:172.30px;font-size:3.9px;color:#262626;font-weight:bold">6</div><div class="t" style="left:25px;top:172.30px;font-size:3.9px;color:#262626;font-weight:bold">2</div><div class="t" style="left:34px;top:172.30px;font-size:3.9px;color:#262626;font-weight:bold">1</div><div class="t" style="left:63px;top:172.30px;font-size:3.9px;color:#262626;font-weight:bold">1</div><div class="t" style="left:69px;top:172.30px;font-size:3.9px;color:#262626;font-weight:bold">C3</div><div class="t" style="left:82px;top:172.30px;font-size:3.9px;color:#262626;font-weight:bold">64</div><div class="t" style="left:115px;top:172.30px;font-size:3.9px;color:#262626;font-weight:bold">231</div><div style="position:absolute;left:41px;top:173.10px;width:9px;height:1.8px;background:#333;opacity:.45"></div><div style="position:absolute;left:100px;top:174.10px;width:12px;height:1px;background:repeating-linear-gradient(90deg,#666 0 0.7px,transparent 0.7px 2.4px);opacity:.6"></div><div style="position:absolute;left:0;top:176.39px;width:126px;height:0.6px;background:#b4b4b4"></div><div class="t" style="left:8px;top:177.99px;font-size:3.9px;color:#262626;font-weight:bold">72</div><div class="t" style="left:17.5px;top:177.99px;font-size:3.9px;color:#262626;font-weight:bold">1</div><div class="t" style="left:25px;top:177.99px;font-size:3.9px;color:#262626;font-weight:bold">1</div><div class="t" style="left:34px;top:177.99px;font-size:3.9px;color:#262626;font-weight:bold">1</div><div class="t" style="left:63px;top:177.99px;font-size:3.9px;color:#262626;font-weight:bold">1</div><div class="t" style="left:69px;top:177.99px;font-size:3.9px;color:#262626;font-weight:bold">D3</div><div class="t" style="left:82px;top:177.99px;font-size:3.9px;color:#262626;font-weight:bold">64</div><div class="t" style="left:115px;top:177.99px;font-size:3.9px;color:#262626;font-weight:bold">231</div><div style="position:absolute;left:41px;top:178.79px;width:9px;height:1.8px;background:#333;opacity:.45"></div><div style="position:absolute;left:100px;top:179.79px;width:12px;height:1px;background:repeating-linear-gradient(90deg,#666 0 0.7px,transparent 0.7px 2.4px);opacity:.6"></div><div style="position:absolute;left:0;top:182.08px;width:126px;height:0.6px;background:#b4b4b4"></div><div class="t" style="left:8px;top:183.68px;font-size:3.9px;color:#262626;font-weight:bold">72</div><div class="t" style="left:17.5px;top:183.68px;font-size:3.9px;color:#262626;font-weight:bold">1</div><div class="t" style="left:25px;top:183.68px;font-size:3.9px;color:#262626;font-weight:bold">2</div><div class="t" style="left:34px;top:183.68px;font-size:3.9px;color:#262626;font-weight:bold">1</div><div class="t" style="left:63px;top:183.68px;font-size:3.9px;color:#262626;font-weight:bold">1</div><div class="t" style="left:69px;top:183.68px;font-size:3.9px;color:#262626;font-weight:bold">C3</div><div class="t" style="left:82px;top:183.68px;font-size:3.9px;color:#262626;font-weight:bold">64</div><div class="t" style="left:115px;top:183.68px;font-size:3.9px;color:#262626;font-weight:bold">231</div><div style="position:absolute;left:41px;top:184.48px;width:9px;height:1.8px;background:#333;opacity:.45"></div><div style="position:absolute;left:100px;top:185.48px;width:12px;height:1px;background:repeating-linear-gradient(90deg,#666 0 0.7px,transparent 0.7px 2.4px);opacity:.6"></div><div style="position:absolute;left:0;top:187.77px;width:126px;height:0.6px;background:#b4b4b4"></div><div class="t" style="left:8px;top:189.37px;font-size:3.9px;color:#262626;font-weight:bold">72</div><div class="t" style="left:17.5px;top:189.37px;font-size:3.9px;color:#262626;font-weight:bold">2</div><div class="t" style="left:25px;top:189.37px;font-size:3.9px;color:#262626;font-weight:bold">1</div><div class="t" style="left:34px;top:189.37px;font-size:3.9px;color:#262626;font-weight:bold">1</div><div class="t" style="left:63px;top:189.37px;font-size:3.9px;color:#262626;font-weight:bold">1</div><div class="t" style="left:69px;top:189.37px;font-size:3.9px;color:#262626;font-weight:bold">E3</div><div class="t" style="left:82px;top:189.37px;font-size:3.9px;color:#262626;font-weight:bold">64</div><div class="t" style="left:115px;top:189.37px;font-size:3.9px;color:#262626;font-weight:bold">231</div><div style="position:absolute;left:41px;top:190.17px;width:9px;height:1.8px;background:#333;opacity:.45"></div><div style="position:absolute;left:100px;top:191.17px;width:12px;height:1px;background:repeating-linear-gradient(90deg,#666 0 0.7px,transparent 0.7px 2.4px);opacity:.6"></div><div style="position:absolute;left:0;top:193.46px;width:126px;height:0.6px;background:#b4b4b4"></div><div class="t" style="left:8px;top:195.06px;font-size:3.9px;color:#262626;font-weight:bold">72</div><div class="t" style="left:17.5px;top:195.06px;font-size:3.9px;color:#262626;font-weight:bold">2</div><div class="t" style="left:25px;top:195.06px;font-size:3.9px;color:#262626;font-weight:bold">2</div><div class="t" style="left:34px;top:195.06px;font-size:3.9px;color:#262626;font-weight:bold">1</div><div class="t" style="left:63px;top:195.06px;font-size:3.9px;color:#262626;font-weight:bold">1</div><div class="t" style="left:69px;top:195.06px;font-size:3.9px;color:#262626;font-weight:bold">B3</div><div class="t" style="left:82px;top:195.06px;font-size:3.9px;color:#262626;font-weight:bold">64</div><div class="t" style="left:115px;top:195.06px;font-size:3.9px;color:#262626;font-weight:bold">231</div><div style="position:absolute;left:41px;top:195.86px;width:9px;height:1.8px;background:#333;opacity:.45"></div><div style="position:absolute;left:100px;top:196.86px;width:12px;height:1px;background:repeating-linear-gradient(90deg,#666 0 0.7px,transparent 0.7px 2.4px);opacity:.6"></div><div style="position:absolute;left:0;top:199.15px;width:126px;height:0.6px;background:#b4b4b4"></div><div class="t" style="left:8px;top:200.75px;font-size:3.9px;color:#262626;font-weight:bold">72</div><div class="t" style="left:17.5px;top:200.75px;font-size:3.9px;color:#262626;font-weight:bold">3</div><div class="t" style="left:25px;top:200.75px;font-size:3.9px;color:#262626;font-weight:bold">1</div><div class="t" style="left:34px;top:200.75px;font-size:3.9px;color:#262626;font-weight:bold">1</div><div class="t" style="left:63px;top:200.75px;font-size:3.9px;color:#262626;font-weight:bold">1</div><div class="t" style="left:69px;top:200.75px;font-size:3.9px;color:#262626;font-weight:bold">C3</div><div class="t" style="left:82px;top:200.75px;font-size:3.9px;color:#262626;font-weight:bold">64</div><div class="t" style="left:115px;top:200.75px;font-size:3.9px;color:#262626;font-weight:bold">231</div><div style="position:absolute;left:41px;top:201.55px;width:9px;height:1.8px;background:#333;opacity:.45"></div><div style="position:absolute;left:100px;top:202.55px;width:12px;height:1px;background:repeating-linear-gradient(90deg,#666 0 0.7px,transparent 0.7px 2.4px);opacity:.6"></div><div style="position:absolute;left:0;top:204.84px;width:126px;height:0.6px;background:#b4b4b4"></div><div class="t" style="left:8px;top:206.44px;font-size:3.9px;color:#262626;font-weight:bold">72</div><div class="t" style="left:17.5px;top:206.44px;font-size:3.9px;color:#262626;font-weight:bold">3</div><div class="t" style="left:25px;top:206.44px;font-size:3.9px;color:#262626;font-weight:bold">2</div><div class="t" style="left:34px;top:206.44px;font-size:3.9px;color:#262626;font-weight:bold">1</div><div class="t" style="left:63px;top:206.44px;font-size:3.9px;color:#262626;font-weight:bold">1</div><div class="t" style="left:69px;top:206.44px;font-size:3.9px;color:#262626;font-weight:bold">D3</div><div class="t" style="left:82px;top:206.44px;font-size:3.9px;color:#262626;font-weight:bold">64</div><div class="t" style="left:115px;top:206.44px;font-size:3.9px;color:#262626;font-weight:bold">231</div><div style="position:absolute;left:41px;top:207.24px;width:9px;height:1.8px;background:#333;opacity:.45"></div><div style="position:absolute;left:100px;top:208.24px;width:12px;height:1px;background:repeating-linear-gradient(90deg,#666 0 0.7px,transparent 0.7px 2.4px);opacity:.6"></div><div style="position:absolute;left:0;top:210.53px;width:126px;height:0.6px;background:#b4b4b4"></div><div class="t" style="left:8px;top:212.13px;font-size:3.9px;color:#262626;font-weight:bold">72</div><div class="t" style="left:17.5px;top:212.13px;font-size:3.9px;color:#262626;font-weight:bold">4</div><div class="t" style="left:25px;top:212.13px;font-size:3.9px;color:#262626;font-weight:bold">1</div><div class="t" style="left:34px;top:212.13px;font-size:3.9px;color:#262626;font-weight:bold">1</div><div class="t" style="left:63px;top:212.13px;font-size:3.9px;color:#262626;font-weight:bold">1</div><div class="t" style="left:69px;top:212.13px;font-size:3.9px;color:#262626;font-weight:bold">C3</div><div class="t" style="left:82px;top:212.13px;font-size:3.9px;color:#262626;font-weight:bold">64</div><div class="t" style="left:115px;top:212.13px;font-size:3.9px;color:#262626;font-weight:bold">231</div><div style="position:absolute;left:41px;top:212.93px;width:9px;height:1.8px;background:#333;opacity:.45"></div><div style="position:absolute;left:100px;top:213.93px;width:12px;height:1px;background:repeating-linear-gradient(90deg,#666 0 0.7px,transparent 0.7px 2.4px);opacity:.6"></div><div style="position:absolute;left:0;top:216.22px;width:126px;height:0.6px;background:#b4b4b4"></div><div class="t" style="left:8px;top:217.82px;font-size:3.9px;color:#262626;font-weight:bold">72</div><div class="t" style="left:17.5px;top:217.82px;font-size:3.9px;color:#262626;font-weight:bold">4</div><div class="t" style="left:25px;top:217.82px;font-size:3.9px;color:#262626;font-weight:bold">2</div><div class="t" style="left:34px;top:217.82px;font-size:3.9px;color:#262626;font-weight:bold">1</div><div class="t" style="left:63px;top:217.82px;font-size:3.9px;color:#262626;font-weight:bold">1</div><div class="t" style="left:69px;top:217.82px;font-size:3.9px;color:#262626;font-weight:bold">E3</div><div class="t" style="left:82px;top:217.82px;font-size:3.9px;color:#262626;font-weight:bold">64</div><div class="t" style="left:115px;top:217.82px;font-size:3.9px;color:#262626;font-weight:bold">231</div><div style="position:absolute;left:41px;top:218.62px;width:9px;height:1.8px;background:#333;opacity:.45"></div><div style="position:absolute;left:100px;top:219.62px;width:12px;height:1px;background:repeating-linear-gradient(90deg,#666 0 0.7px,transparent 0.7px 2.4px);opacity:.6"></div><div style="position:absolute;left:0;top:221.91px;width:126px;height:0.6px;background:#b4b4b4"></div><div class="t" style="left:8px;top:223.51px;font-size:3.9px;color:#262626;font-weight:bold">72</div><div class="t" style="left:17.5px;top:223.51px;font-size:3.9px;color:#262626;font-weight:bold">5</div><div class="t" style="left:25px;top:223.51px;font-size:3.9px;color:#262626;font-weight:bold">1</div><div class="t" style="left:34px;top:223.51px;font-size:3.9px;color:#262626;font-weight:bold">1</div><div class="t" style="left:63px;top:223.51px;font-size:3.9px;color:#262626;font-weight:bold">1</div><div class="t" style="left:69px;top:223.51px;font-size:3.9px;color:#262626;font-weight:bold">A3</div><div class="t" style="left:82px;top:223.51px;font-size:3.9px;color:#262626;font-weight:bold">64</div><div class="t" style="left:115px;top:223.51px;font-size:3.9px;color:#262626;font-weight:bold">231</div><div style="position:absolute;left:41px;top:224.31px;width:9px;height:1.8px;background:#333;opacity:.45"></div><div style="position:absolute;left:100px;top:225.31px;width:12px;height:1px;background:repeating-linear-gradient(90deg,#666 0 0.7px,transparent 0.7px 2.4px);opacity:.6"></div><div style="position:absolute;left:0;top:227.60px;width:126px;height:0.6px;background:#b4b4b4"></div><div class="t" style="left:8px;top:229.20px;font-size:3.9px;color:#262626;font-weight:bold">72</div><div class="t" style="left:17.5px;top:229.20px;font-size:3.9px;color:#262626;font-weight:bold">5</div><div class="t" style="left:25px;top:229.20px;font-size:3.9px;color:#262626;font-weight:bold">2</div><div class="t" style="left:34px;top:229.20px;font-size:3.9px;color:#262626;font-weight:bold">1</div><div class="t" style="left:63px;top:229.20px;font-size:3.9px;color:#262626;font-weight:bold">1</div><div class="t" style="left:69px;top:229.20px;font-size:3.9px;color:#262626;font-weight:bold">C3</div><div class="t" style="left:82px;top:229.20px;font-size:3.9px;color:#262626;font-weight:bold">64</div><div class="t" style="left:115px;top:229.20px;font-size:3.9px;color:#262626;font-weight:bold">231</div><div style="position:absolute;left:41px;top:230.00px;width:9px;height:1.8px;background:#333;opacity:.45"></div><div style="position:absolute;left:100px;top:231.00px;width:12px;height:1px;background:repeating-linear-gradient(90deg,#666 0 0.7px,transparent 0.7px 2.4px);opacity:.6"></div><div style="position:absolute;left:0;top:233.29px;width:126px;height:0.6px;background:#b4b4b4"></div><div class="t" style="left:8px;top:234.89px;font-size:3.9px;color:#262626;font-weight:bold">72</div><div class="t" style="left:17.5px;top:234.89px;font-size:3.9px;color:#262626;font-weight:bold">6</div><div class="t" style="left:25px;top:234.89px;font-size:3.9px;color:#262626;font-weight:bold">1</div><div class="t" style="left:34px;top:234.89px;font-size:3.9px;color:#262626;font-weight:bold">1</div><div class="t" style="left:63px;top:234.89px;font-size:3.9px;color:#262626;font-weight:bold">1</div><div class="t" style="left:69px;top:234.89px;font-size:3.9px;color:#262626;font-weight:bold">E3</div><div class="t" style="left:82px;top:234.89px;font-size:3.9px;color:#262626;font-weight:bold">64</div><div class="t" style="left:115px;top:234.89px;font-size:3.9px;color:#262626;font-weight:bold">231</div><div style="position:absolute;left:41px;top:235.69px;width:9px;height:1.8px;background:#333;opacity:.45"></div><div style="position:absolute;left:100px;top:236.69px;width:12px;height:1px;background:repeating-linear-gradient(90deg,#666 0 0.7px,transparent 0.7px 2.4px);opacity:.6"></div><div style="position:absolute;left:0;top:238.98px;width:126px;height:0.6px;background:#b4b4b4"></div><div class="t" style="left:8px;top:240.58px;font-size:3.9px;color:#262626;font-weight:bold">72</div><div class="t" style="left:17.5px;top:240.58px;font-size:3.9px;color:#262626;font-weight:bold">6</div><div class="t" style="left:25px;top:240.58px;font-size:3.9px;color:#262626;font-weight:bold">2</div><div class="t" style="left:34px;top:240.58px;font-size:3.9px;color:#262626;font-weight:bold">1</div><div class="t" style="left:63px;top:240.58px;font-size:3.9px;color:#262626;font-weight:bold">1</div><div class="t" style="left:69px;top:240.58px;font-size:3.9px;color:#262626;font-weight:bold">B3</div><div class="t" style="left:82px;top:240.58px;font-size:3.9px;color:#262626;font-weight:bold">64</div><div class="t" style="left:115px;top:240.58px;font-size:3.9px;color:#262626;font-weight:bold">231</div><div style="position:absolute;left:41px;top:241.38px;width:9px;height:1.8px;background:#333;opacity:.45"></div><div style="position:absolute;left:100px;top:242.38px;width:12px;height:1px;background:repeating-linear-gradient(90deg,#666 0 0.7px,transparent 0.7px 2.4px);opacity:.6"></div><div style="position:absolute;left:0;top:244.67px;width:126px;height:0.6px;background:#b4b4b4"></div><div class="t" style="left:8px;top:246.27px;font-size:3.9px;color:#262626;font-weight:bold">73</div><div class="t" style="left:17.5px;top:246.27px;font-size:3.9px;color:#262626;font-weight:bold">1</div><div class="t" style="left:25px;top:246.27px;font-size:3.9px;color:#262626;font-weight:bold">1</div><div class="t" style="left:34px;top:246.27px;font-size:3.9px;color:#262626;font-weight:bold">1</div><div class="t" style="left:63px;top:246.27px;font-size:3.9px;color:#262626;font-weight:bold">1</div><div class="t" style="left:69px;top:246.27px;font-size:3.9px;color:#262626;font-weight:bold">C3</div><div class="t" style="left:82px;top:246.27px;font-size:3.9px;color:#262626;font-weight:bold">64</div><div class="t" style="left:115px;top:246.27px;font-size:3.9px;color:#262626;font-weight:bold">231</div><div style="position:absolute;left:41px;top:247.07px;width:9px;height:1.8px;background:#333;opacity:.45"></div><div style="position:absolute;left:100px;top:248.07px;width:12px;height:1px;background:repeating-linear-gradient(90deg,#666 0 0.7px,transparent 0.7px 2.4px);opacity:.6"></div><div style="position:absolute;left:0;top:250.36px;width:126px;height:0.6px;background:#b4b4b4"></div><div class="t" style="left:8px;top:251.96px;font-size:3.9px;color:#262626;font-weight:bold">73</div><div class="t" style="left:17.5px;top:251.96px;font-size:3.9px;color:#262626;font-weight:bold">1</div><div class="t" style="left:25px;top:251.96px;font-size:3.9px;color:#262626;font-weight:bold">2</div><div class="t" style="left:34px;top:251.96px;font-size:3.9px;color:#262626;font-weight:bold">1</div><div class="t" style="left:63px;top:251.96px;font-size:3.9px;color:#262626;font-weight:bold">1</div><div class="t" style="left:69px;top:251.96px;font-size:3.9px;color:#262626;font-weight:bold">D3</div><div class="t" style="left:82px;top:251.96px;font-size:3.9px;color:#262626;font-weight:bold">64</div><div class="t" style="left:115px;top:251.96px;font-size:3.9px;color:#262626;font-weight:bold">231</div><div style="position:absolute;left:41px;top:252.76px;width:9px;height:1.8px;background:#333;opacity:.45"></div><div style="position:absolute;left:100px;top:253.76px;width:12px;height:1px;background:repeating-linear-gradient(90deg,#666 0 0.7px,transparent 0.7px 2.4px);opacity:.6"></div><div style="position:absolute;left:0;top:256.05px;width:126px;height:0.6px;background:#b4b4b4"></div><div class="t" style="left:8px;top:257.65px;font-size:3.9px;color:#262626;font-weight:bold">73</div><div class="t" style="left:17.5px;top:257.65px;font-size:3.9px;color:#262626;font-weight:bold">2</div><div class="t" style="left:25px;top:257.65px;font-size:3.9px;color:#262626;font-weight:bold">1</div><div class="t" style="left:34px;top:257.65px;font-size:3.9px;color:#262626;font-weight:bold">1</div><div class="t" style="left:63px;top:257.65px;font-size:3.9px;color:#262626;font-weight:bold">1</div><div class="t" style="left:69px;top:257.65px;font-size:3.9px;color:#262626;font-weight:bold">C#4</div><div class="t" style="left:82px;top:257.65px;font-size:3.9px;color:#262626;font-weight:bold">64</div><div class="t" style="left:115px;top:257.65px;font-size:3.9px;color:#262626;font-weight:bold">231</div><div style="position:absolute;left:41px;top:258.45px;width:9px;height:1.8px;background:#333;opacity:.45"></div><div style="position:absolute;left:100px;top:259.45px;width:12px;height:1px;background:repeating-linear-gradient(90deg,#666 0 0.7px,transparent 0.7px 2.4px);opacity:.6"></div><div style="position:absolute;left:0;top:261.74px;width:126px;height:0.6px;background:#b4b4b4"></div><div class="t" style="left:8px;top:263.34px;font-size:3.9px;color:#262626;font-weight:bold">73</div><div class="t" style="left:17.5px;top:263.34px;font-size:3.9px;color:#262626;font-weight:bold">2</div><div class="t" style="left:25px;top:263.34px;font-size:3.9px;color:#262626;font-weight:bold">2</div><div class="t" style="left:34px;top:263.34px;font-size:3.9px;color:#262626;font-weight:bold">1</div><div class="t" style="left:63px;top:263.34px;font-size:3.9px;color:#262626;font-weight:bold">1</div><div class="t" style="left:69px;top:263.34px;font-size:3.9px;color:#262626;font-weight:bold">D4</div><div class="t" style="left:82px;top:263.34px;font-size:3.9px;color:#262626;font-weight:bold">64</div><div class="t" style="left:115px;top:263.34px;font-size:3.9px;color:#262626;font-weight:bold">231</div><div style="position:absolute;left:41px;top:264.14px;width:9px;height:1.8px;background:#333;opacity:.45"></div><div style="position:absolute;left:100px;top:265.14px;width:12px;height:1px;background:repeating-linear-gradient(90deg,#666 0 0.7px,transparent 0.7px 2.4px);opacity:.6"></div><div style="position:absolute;left:0;top:267.43px;width:126px;height:0.6px;background:#b4b4b4"></div><div class="t" style="left:8px;top:269.03px;font-size:3.9px;color:#262626;font-weight:bold">73</div><div class="t" style="left:17.5px;top:269.03px;font-size:3.9px;color:#262626;font-weight:bold">3</div><div class="t" style="left:25px;top:269.03px;font-size:3.9px;color:#262626;font-weight:bold">1</div><div class="t" style="left:34px;top:269.03px;font-size:3.9px;color:#262626;font-weight:bold">1</div><div class="t" style="left:63px;top:269.03px;font-size:3.9px;color:#262626;font-weight:bold">1</div><div class="t" style="left:69px;top:269.03px;font-size:3.9px;color:#262626;font-weight:bold">C#4</div><div class="t" style="left:82px;top:269.03px;font-size:3.9px;color:#262626;font-weight:bold">64</div><div class="t" style="left:115px;top:269.03px;font-size:3.9px;color:#262626;font-weight:bold">231</div><div style="position:absolute;left:41px;top:269.83px;width:9px;height:1.8px;background:#333;opacity:.45"></div><div style="position:absolute;left:100px;top:270.83px;width:12px;height:1px;background:repeating-linear-gradient(90deg,#666 0 0.7px,transparent 0.7px 2.4px);opacity:.6"></div><div style="position:absolute;left:0;top:273.12px;width:126px;height:0.6px;background:#b4b4b4"></div><div class="t" style="left:8px;top:274.72px;font-size:3.9px;color:#262626;font-weight:bold">73</div><div class="t" style="left:17.5px;top:274.72px;font-size:3.9px;color:#262626;font-weight:bold">3</div><div class="t" style="left:25px;top:274.72px;font-size:3.9px;color:#262626;font-weight:bold">2</div><div class="t" style="left:34px;top:274.72px;font-size:3.9px;color:#262626;font-weight:bold">1</div><div class="t" style="left:63px;top:274.72px;font-size:3.9px;color:#262626;font-weight:bold">1</div><div class="t" style="left:69px;top:274.72px;font-size:3.9px;color:#262626;font-weight:bold">D#4</div><div class="t" style="left:82px;top:274.72px;font-size:3.9px;color:#262626;font-weight:bold">64</div><div class="t" style="left:115px;top:274.72px;font-size:3.9px;color:#262626;font-weight:bold">231</div><div style="position:absolute;left:41px;top:275.52px;width:9px;height:1.8px;background:#333;opacity:.45"></div><div style="position:absolute;left:100px;top:276.52px;width:12px;height:1px;background:repeating-linear-gradient(90deg,#666 0 0.7px,transparent 0.7px 2.4px);opacity:.6"></div><div style="position:absolute;left:0;top:278.81px;width:126px;height:0.6px;background:#b4b4b4"></div><div class="t" style="left:8px;top:280.41px;font-size:3.9px;color:#262626;font-weight:bold">73</div><div class="t" style="left:17.5px;top:280.41px;font-size:3.9px;color:#262626;font-weight:bold">4</div><div class="t" style="left:25px;top:280.41px;font-size:3.9px;color:#262626;font-weight:bold">1</div><div class="t" style="left:34px;top:280.41px;font-size:3.9px;color:#262626;font-weight:bold">1</div><div class="t" style="left:63px;top:280.41px;font-size:3.9px;color:#262626;font-weight:bold">1</div><div class="t" style="left:69px;top:280.41px;font-size:3.9px;color:#262626;font-weight:bold">E4</div><div class="t" style="left:82px;top:280.41px;font-size:3.9px;color:#262626;font-weight:bold">64</div><div class="t" style="left:115px;top:280.41px;font-size:3.9px;color:#262626;font-weight:bold">231</div><div style="position:absolute;left:41px;top:281.21px;width:9px;height:1.8px;background:#333;opacity:.45"></div><div style="position:absolute;left:100px;top:282.21px;width:12px;height:1px;background:repeating-linear-gradient(90deg,#666 0 0.7px,transparent 0.7px 2.4px);opacity:.6"></div><div style="position:absolute;left:0;top:284.50px;width:126px;height:0.6px;background:#b4b4b4"></div><div class="t" style="left:8px;top:286.10px;font-size:3.9px;color:#262626;font-weight:bold">73</div><div class="t" style="left:17.5px;top:286.10px;font-size:3.9px;color:#262626;font-weight:bold">4</div><div class="t" style="left:25px;top:286.10px;font-size:3.9px;color:#262626;font-weight:bold">2</div><div class="t" style="left:34px;top:286.10px;font-size:3.9px;color:#262626;font-weight:bold">1</div><div class="t" style="left:63px;top:286.10px;font-size:3.9px;color:#262626;font-weight:bold">1</div><div class="t" style="left:69px;top:286.10px;font-size:3.9px;color:#262626;font-weight:bold">C#4</div><div class="t" style="left:82px;top:286.10px;font-size:3.9px;color:#262626;font-weight:bold">64</div><div class="t" style="left:115px;top:286.10px;font-size:3.9px;color:#262626;font-weight:bold">231</div><div style="position:absolute;left:41px;top:286.90px;width:9px;height:1.8px;background:#333;opacity:.45"></div><div style="position:absolute;left:100px;top:287.90px;width:12px;height:1px;background:repeating-linear-gradient(90deg,#666 0 0.7px,transparent 0.7px 2.4px);opacity:.6"></div><div style="position:absolute;left:0;top:290.19px;width:126px;height:0.6px;background:#b4b4b4"></div><div class="t" style="left:8px;top:291.79px;font-size:3.9px;color:#262626;font-weight:bold">73</div><div class="t" style="left:17.5px;top:291.79px;font-size:3.9px;color:#262626;font-weight:bold">5</div><div class="t" style="left:25px;top:291.79px;font-size:3.9px;color:#262626;font-weight:bold">1</div><div class="t" style="left:34px;top:291.79px;font-size:3.9px;color:#262626;font-weight:bold">1</div><div class="t" style="left:63px;top:291.79px;font-size:3.9px;color:#262626;font-weight:bold">1</div><div class="t" style="left:69px;top:291.79px;font-size:3.9px;color:#262626;font-weight:bold">D4</div><div class="t" style="left:82px;top:291.79px;font-size:3.9px;color:#262626;font-weight:bold">64</div><div class="t" style="left:115px;top:291.79px;font-size:3.9px;color:#262626;font-weight:bold">231</div><div style="position:absolute;left:41px;top:292.59px;width:9px;height:1.8px;background:#333;opacity:.45"></div><div style="position:absolute;left:100px;top:293.59px;width:12px;height:1px;background:repeating-linear-gradient(90deg,#666 0 0.7px,transparent 0.7px 2.4px);opacity:.6"></div><div style="position:absolute;left:0;top:295.88px;width:126px;height:0.6px;background:#b4b4b4"></div><div class="t" style="left:8px;top:297.48px;font-size:3.9px;color:#262626;font-weight:bold">73</div><div class="t" style="left:17.5px;top:297.48px;font-size:3.9px;color:#262626;font-weight:bold">5</div><div class="t" style="left:25px;top:297.48px;font-size:3.9px;color:#262626;font-weight:bold">2</div><div class="t" style="left:34px;top:297.48px;font-size:3.9px;color:#262626;font-weight:bold">1</div><div class="t" style="left:63px;top:297.48px;font-size:3.9px;color:#262626;font-weight:bold">1</div><div class="t" style="left:69px;top:297.48px;font-size:3.9px;color:#262626;font-weight:bold">C#4</div><div class="t" style="left:82px;top:297.48px;font-size:3.9px;color:#262626;font-weight:bold">64</div><div class="t" style="left:115px;top:297.48px;font-size:3.9px;color:#262626;font-weight:bold">231</div><div style="position:absolute;left:41px;top:298.28px;width:9px;height:1.8px;background:#333;opacity:.45"></div><div style="position:absolute;left:100px;top:299.28px;width:12px;height:1px;background:repeating-linear-gradient(90deg,#666 0 0.7px,transparent 0.7px 2.4px);opacity:.6"></div><div style="position:absolute;left:0;top:301.57px;width:126px;height:0.6px;background:#b4b4b4"></div><div class="t" style="left:8px;top:303.17px;font-size:3.9px;color:#262626;font-weight:bold">73</div><div class="t" style="left:17.5px;top:303.17px;font-size:3.9px;color:#262626;font-weight:bold">6</div><div class="t" style="left:25px;top:303.17px;font-size:3.9px;color:#262626;font-weight:bold">1</div><div class="t" style="left:34px;top:303.17px;font-size:3.9px;color:#262626;font-weight:bold">1</div><div class="t" style="left:63px;top:303.17px;font-size:3.9px;color:#262626;font-weight:bold">1</div><div class="t" style="left:69px;top:303.17px;font-size:3.9px;color:#262626;font-weight:bold">D4</div><div class="t" style="left:82px;top:303.17px;font-size:3.9px;color:#262626;font-weight:bold">64</div><div class="t" style="left:115px;top:303.17px;font-size:3.9px;color:#262626;font-weight:bold">231</div><div style="position:absolute;left:41px;top:303.97px;width:9px;height:1.8px;background:#333;opacity:.45"></div><div style="position:absolute;left:100px;top:304.97px;width:12px;height:1px;background:repeating-linear-gradient(90deg,#666 0 0.7px,transparent 0.7px 2.4px);opacity:.6"></div><div style="position:absolute;left:0;top:307.26px;width:126px;height:0.6px;background:#b4b4b4"></div><div class="t" style="left:8px;top:308.86px;font-size:3.9px;color:#262626;font-weight:bold">73</div><div class="t" style="left:17.5px;top:308.86px;font-size:3.9px;color:#262626;font-weight:bold">6</div><div class="t" style="left:25px;top:308.86px;font-size:3.9px;color:#262626;font-weight:bold">2</div><div class="t" style="left:34px;top:308.86px;font-size:3.9px;color:#262626;font-weight:bold">1</div><div class="t" style="left:63px;top:308.86px;font-size:3.9px;color:#262626;font-weight:bold">1</div><div class="t" style="left:69px;top:308.86px;font-size:3.9px;color:#262626;font-weight:bold">B3</div><div class="t" style="left:82px;top:308.86px;font-size:3.9px;color:#262626;font-weight:bold">64</div><div class="t" style="left:115px;top:308.86px;font-size:3.9px;color:#262626;font-weight:bold">231</div><div style="position:absolute;left:41px;top:309.66px;width:9px;height:1.8px;background:#333;opacity:.45"></div><div style="position:absolute;left:100px;top:310.66px;width:12px;height:1px;background:repeating-linear-gradient(90deg,#666 0 0.7px,transparent 0.7px 2.4px);opacity:.6"></div></div>
<div style="position:absolute;left:658.5px;top:76px;width:3.5px;height:320px;background:linear-gradient(90deg,#d0d0d0,#f4f4f4 60%,#e0e0e0);border-left:0.5px solid #999;"></div>
<div style="position:absolute;left:659px;top:81px;width:3px;height:5px;background:#b0b0b0;border-radius:1px;"></div>
<div style="position:absolute;left:533px;top:396px;width:129px;height:3px;background:#bcbcbc;"></div>
<div style="position:absolute;left:533px;top:398.6px;width:129px;height:7.6px;background:linear-gradient(#dadada,#cacaca);border-top:0.5px solid #999;border-bottom:0.5px solid #999;"></div>
<div class="t" style="left:533px;top:400.76px;line-height:1.3;width:44px;font-size:3.6px;color:#444;text-align:center;overflow:hidden;opacity:1">Classical Acoustic Guitar</div>
<div style="position:absolute;left:63px;top:393.5px;width:465px;height:5px;background:#c4c4c4;"></div>
<div style="position:absolute;left:63px;top:398.5px;width:465px;height:8.5px;background:linear-gradient(#d2d2d2,#c4c4c4);border-top:0.5px solid #a0a0a0;"></div>
<div style="position:absolute;left:63px;top:398.5px;width:31px;height:8.5px;background:linear-gradient(#b8b8b8,#a8a8a8);"></div>
<div style="position:absolute;left:75.8px;top:393.5px;width:0.6px;height:5px;background:#8a8a8a;"></div>
<div style="position:absolute;left:71px;top:401.5px;width:14px;height:2.4px;background:#222;opacity:0.65;border-radius:0.6px"></div>
<div style="position:absolute;left:97px;top:401.5px;width:26px;height:2.4px;background:#222;opacity:0.65;border-radius:0.6px"></div>
<div style="position:absolute;left:131px;top:401.5px;width:19px;height:2.4px;background:#222;opacity:0.65;border-radius:0.6px"></div>
<div style="position:absolute;left:165px;top:401.5px;width:9px;height:2.4px;background:#222;opacity:0.65;border-radius:0.6px"></div>
<div style="position:absolute;left:194px;top:401.5px;width:20px;height:2.4px;background:#222;opacity:0.65;border-radius:0.6px"></div>
<div style="position:absolute;left:0px;top:406.2px;width:665px;height:1px;background:#9a9a9a;"></div>
<div style="position:absolute;left:0px;top:407px;width:665px;height:22px;background:linear-gradient(#dedede,#d2d2d2 50%,#c8c8c8);"></div>
<div style="position:absolute;left:2px;top:408px;width:660px;height:19.5px;border:0.6px solid #b4b4b4;border-radius:2px;background:linear-gradient(#e4e4e4,#d4d4d4);"></div>
<div style="position:absolute;left:0px;top:427.3px;width:665px;height:1.7px;background:#6a6a6a;"></div>
<div style="position:absolute;left:0px;top:407px;width:1.5px;height:22px;background:#8a8a8a;"></div>
<div style="position:absolute;left:135.60000000000002px;top:412.3px;width:10.4px;height:10.4px;border-radius:50%;background:radial-gradient(circle at 50% 35%,#fafafa,#d8d8d8 60%,#c0c0c0);border:0.6px solid #8a8a8a;"></div>
<div style="position:absolute;left:146.5px;top:412.3px;width:10.4px;height:10.4px;border-radius:50%;background:radial-gradient(circle at 50% 35%,#fafafa,#d8d8d8 60%,#c0c0c0);border:0.6px solid #8a8a8a;"></div>
<div style="position:absolute;left:158.4px;top:412.3px;width:10.4px;height:10.4px;border-radius:50%;background:radial-gradient(circle at 50% 35%,#fafafa,#d8d8d8 60%,#c0c0c0);border:0.6px solid #8a8a8a;"></div>
<div style="position:absolute;left:169.8px;top:412.3px;width:10.4px;height:10.4px;border-radius:50%;background:radial-gradient(circle at 50% 35%,#fafafa,#d8d8d8 60%,#c0c0c0);border:0.6px solid #8a8a8a;"></div>
<div style="position:absolute;left:182.5px;top:412.3px;width:10.4px;height:10.4px;border-radius:50%;background:radial-gradient(circle at 50% 40%,#d0d0d0,#a4a4a4);border:0.6px solid #8a8a8a;"></div>
<div style="position:absolute;left:193.8px;top:412.3px;width:10.4px;height:10.4px;border-radius:50%;background:radial-gradient(circle at 50% 35%,#fafafa,#d8d8d8 60%,#c0c0c0);border:0.6px solid #8a8a8a;"></div>
<div style="position:absolute;left:205.4px;top:412.3px;width:10.4px;height:10.4px;border-radius:50%;background:radial-gradient(circle at 50% 35%,#fafafa,#d8d8d8 60%,#c0c0c0);border:0.6px solid #8a8a8a;"></div>
<div style="position:absolute;left:217.20000000000002px;top:412.3px;width:10.4px;height:10.4px;border-radius:50%;background:radial-gradient(circle at 50% 35%,#fafafa,#d8d8d8 60%,#c0c0c0);border:0.6px solid #8a8a8a;"></div>
<svg style="position:absolute;left:136.8px;top:413.5px" width="8" height="8" viewBox="-4 -4 8 8"><path d="M0 -1.5 L-1.8 0 L0 1.5Z M0.6 -1.5 L1.2 -1.5 L1.2 1.5 L0.6 1.5Z" fill="#333" stroke="#333" stroke-width="0.5"/></svg>
<svg style="position:absolute;left:147.7px;top:413.5px" width="8" height="8" viewBox="-4 -4 8 8"><path d="M-1 -1.5 L-1 1.5 M1 -1.5 L-1 0 L1 1.5" fill="#333" stroke="#333" stroke-width="0.5"/></svg>
<svg style="position:absolute;left:159.6px;top:413.5px" width="8" height="8" viewBox="-4 -4 8 8"><path d="M-0.2 -1.5 L-2.4 0 L-0.2 1.5Z M2.2 -1.5 L0 0 L2.2 1.5Z" fill="#333" stroke="#333" stroke-width="0.5"/></svg>
<svg style="position:absolute;left:171px;top:413.5px" width="8" height="8" viewBox="-4 -4 8 8"><path d="M0.2 -1.5 L2.4 0 L0.2 1.5Z M-2.2 -1.5 L0 0 L-2.2 1.5Z" fill="#333" stroke="#333" stroke-width="0.5"/></svg>
<svg style="position:absolute;left:183.7px;top:413.5px" width="8" height="8" viewBox="-4 -4 8 8"><path d="M-1.3 -1.3 L1.3 -1.3 L1.3 1.3 L-1.3 1.3Z" fill="#333" stroke="#333" stroke-width="0.5"/></svg>
<svg style="position:absolute;left:195px;top:413.5px" width="8" height="8" viewBox="-4 -4 8 8"><path d="M-1 -1.6 L1.8 0 L-1 1.6Z" fill="#333" stroke="#333" stroke-width="0.5"/></svg>
<svg style="position:absolute;left:206.6px;top:413.5px" width="8" height="8" viewBox="-4 -4 8 8"><path d="M-1.6 -1.5 L-0.6 -1.5 L-0.6 1.5 L-1.6 1.5Z M0.6 -1.5 L1.6 -1.5 L1.6 1.5 L0.6 1.5Z" fill="#333" stroke="#333" stroke-width="0.5"/></svg>
<svg style="position:absolute;left:218.4px;top:413.5px" width="8" height="8" viewBox="-4 -4 8 8"><path d="M-1.3 -1.3 L1.3 -1.3 L1.3 1.3 L-1.3 1.3Z" fill="#333" stroke="#333" stroke-width="0.5"/></svg>
<div style="position:absolute;left:437.40000000000003px;top:412.3px;width:10.4px;height:10.4px;border-radius:50%;background:radial-gradient(circle at 50% 35%,#fafafa,#d8d8d8 60%,#c0c0c0);border:0.6px solid #8a8a8a;"></div>
<div style="position:absolute;left:440.8px;top:415.8px;width:3.6px;height:3.4px;background:#444;border-radius:1px;"></div>
<div style="position:absolute;left:448.3px;top:412.3px;width:10.4px;height:10.4px;border-radius:50%;background:radial-gradient(circle at 50% 35%,#fafafa,#d8d8d8 60%,#c0c0c0);border:0.6px solid #8a8a8a;"></div>
<div style="position:absolute;left:451.7px;top:415.8px;width:3.6px;height:3.4px;background:#444;border-radius:1px;"></div>
<div style="position:absolute;left:460.0px;top:412.3px;width:10.4px;height:10.4px;border-radius:50%;background:radial-gradient(circle at 50% 35%,#fafafa,#d8d8d8 60%,#c0c0c0);border:0.6px solid #8a8a8a;"></div>
<div style="position:absolute;left:463.4px;top:415.8px;width:3.6px;height:3.4px;background:#444;border-radius:1px;"></div>
<div style="position:absolute;left:472.1px;top:412.3px;width:10.4px;height:10.4px;border-radius:50%;background:radial-gradient(circle at 50% 35%,#fafafa,#d8d8d8 60%,#c0c0c0);border:0.6px solid #8a8a8a;"></div>
<div style="position:absolute;left:475.5px;top:415.8px;width:3.6px;height:3.4px;background:#444;border-radius:1px;"></div>
<div style="position:absolute;left:483.5px;top:412.3px;width:10.4px;height:10.4px;border-radius:50%;background:radial-gradient(circle at 50% 35%,#fafafa,#d8d8d8 60%,#c0c0c0);border:0.6px solid #8a8a8a;"></div>
<div style="position:absolute;left:486.9px;top:415.8px;width:3.6px;height:3.4px;background:#444;border-radius:1px;"></div>
<div style="position:absolute;left:495.6px;top:412.3px;width:10.4px;height:10.4px;border-radius:50%;background:radial-gradient(circle at 50% 35%,#fafafa,#d8d8d8 60%,#c0c0c0);border:0.6px solid #8a8a8a;"></div>
<div style="position:absolute;left:499.0px;top:415.8px;width:3.6px;height:3.4px;background:#444;border-radius:1px;"></div>
<div style="position:absolute;left:235.8px;top:411.2px;width:193.6px;height:12.6px;background:linear-gradient(#2a2a2a,#181818);border-radius:2px;border:0.6px solid #555;"></div>
<div class="t" style="left:238.5px;top:412.6px;font-size:4.4px;color:#e4e4e4;font-weight:bold;letter-spacing:0.12px">01&nbsp;:&nbsp;05&nbsp;:&nbsp;06&nbsp;:&nbsp;07.33</div>
<div class="t" style="left:244.5px;top:418.4px;font-size:4.4px;color:#e4e4e4;font-weight:bold;letter-spacing:0.12px">137&nbsp;&nbsp;&nbsp;1&nbsp;&nbsp;&nbsp;2&nbsp;&nbsp;140.</div>
<div class="t" style="left:292.5px;top:412.8px;font-size:4.4px;color:#e4e4e4;font-weight:bold;letter-spacing:0.12px">8</div>
<div class="t" style="left:290.5px;top:418.5px;font-size:4.4px;color:#e4e4e4;font-weight:bold;letter-spacing:0.12px">16</div>
<div class="t" style="left:301.5px;top:412.8px;font-size:4.4px;color:#e4e4e4;font-weight:bold;letter-spacing:0.12px">1</div>
<div class="t" style="left:301.5px;top:418.5px;font-size:4.4px;color:#e4e4e4;font-weight:bold;letter-spacing:0.12px">1</div>
<div class="t" style="left:310.5px;top:412.8px;font-size:4.4px;color:#e4e4e4;font-weight:bold;letter-spacing:0.12px">1</div>
<div class="t" style="left:310.5px;top:418.5px;font-size:4.4px;color:#e4e4e4;font-weight:bold;letter-spacing:0.12px">1</div>
<div class="t" style="left:320.5px;top:412.8px;font-size:4.4px;color:#e4e4e4;font-weight:bold;letter-spacing:0.12px">1</div>
<div class="t" style="left:320.5px;top:418.5px;font-size:4.4px;color:#e4e4e4;font-weight:bold;letter-spacing:0.12px">1</div>
<div class="t" style="left:330px;top:412.6px;font-size:4.4px;color:#e4e4e4;font-weight:bold;letter-spacing:0.12px">80.0000</div>
<div class="t" style="left:337px;top:418.4px;font-size:4.4px;color:#e4e4e4;font-weight:bold;letter-spacing:0.12px">138</div>
<div style="position:absolute;left:357px;top:413.6px;width:6px;height:2.6px;background:#e0e0e0;opacity:0.54;border-radius:0.6px"></div>
<div class="t" style="left:357px;top:418.5px;font-size:4.4px;color:#e4e4e4;font-weight:bold;letter-spacing:0.12px">/16</div>
<div style="position:absolute;left:375px;top:413.5px;width:18px;height:2.7px;background:#e0e0e0;opacity:0.50;border-radius:0.6px"></div>
<div style="position:absolute;left:375px;top:419.2px;width:18px;height:2.7px;background:#e0e0e0;opacity:0.50;border-radius:0.6px"></div>
<div class="t" style="left:406px;top:412.8px;font-size:4.4px;color:#e4e4e4;font-weight:bold;letter-spacing:0.12px">---</div>
<div class="t" style="left:408px;top:418.5px;font-size:4.4px;color:#e4e4e4;font-weight:bold;letter-spacing:0.12px">∞</div>
<div style="position:absolute;left:614px;top:415.6px;width:3.6px;height:3.2px;background:#333;clip-path:polygon(0 50%,100% 0,100% 100%);"></div>
<div style="position:absolute;left:619px;top:416.8px;width:27px;height:1px;background:#8a8a8a;"></div>
<div style="position:absolute;left:637px;top:415.3px;width:3.8px;height:3.8px;border-radius:50%;background:#f4f4f4;border:0.5px solid #777;"></div>
<div style="position:absolute;left:646.5px;top:415.2px;width:5.5px;height:4px;background:#333;clip-path:polygon(0 50%,45% 20%,45% 0,100% 0,100% 100%,45% 100%,45% 80%);"></div>
<div style="position:absolute;left:7.8px;top:231.6px;width:20px;height:3.5px;background:linear-gradient(#fafafa,#dcdcdc);box-shadow:0 0 0 0.5px #555;"></div>
<div class="t" style="left:7.5px;top:231.91px;line-height:1.3;width:20.5px;font-size:3.3px;color:#111;text-align:center;overflow:hidden;font-weight:bold;text-shadow:0 0 0.25px #111;opacity:1">Acoustic ...</div>
<div style="position:absolute;left:7.5px;top:238px;width:20px;height:8px;background:#1e2126;border:0.5px solid #111;"></div>
<div class="t" style="left:7.5px;top:248.12px;line-height:1.3;width:20.5px;font-size:3.2px;color:#8a8a8a;text-align:center;overflow:hidden;opacity:1">Inserts</div>
<div style="position:absolute;left:7.8px;top:251.2px;width:20px;height:4.6px;background:linear-gradient(#a8ecf8,#70cce0);box-shadow:0 0 0 0.5px #e0f8fc,0 0 0 1px #5a9aa8;"></div>
<div class="t" style="left:7.5px;top:251.96px;line-height:1.3;width:20.5px;font-size:3.6px;color:#0a3038;text-align:center;overflow:hidden;font-weight:bold;text-shadow:0 0 0.25px #0a3038;opacity:1">Attack</div>
<div style="position:absolute;left:7.8px;top:257.2px;width:20px;height:4.6px;background:linear-gradient(#a8ecf8,#70cce0);box-shadow:0 0 0 0.5px #e0f8fc,0 0 0 1px #5a9aa8;"></div>
<div class="t" style="left:7.5px;top:257.96px;line-height:1.3;width:20.5px;font-size:3.6px;color:#0a3038;text-align:center;overflow:hidden;font-weight:bold;text-shadow:0 0 0.25px #0a3038;opacity:1">Chan EQ</div>
<div style="position:absolute;left:7.8px;top:263.2px;width:20px;height:4.6px;background:linear-gradient(#a8ecf8,#70cce0);box-shadow:0 0 0 0.5px #e0f8fc,0 0 0 1px #5a9aa8;"></div>
<div class="t" style="left:7.5px;top:263.96px;line-height:1.3;width:20.5px;font-size:3.6px;color:#0a3038;text-align:center;overflow:hidden;font-weight:bold;text-shadow:0 0 0.25px #0a3038;opacity:1">DirAmpPro</div>
<div style="position:absolute;left:7.8px;top:269.2px;width:20px;height:4.6px;background:linear-gradient(#a8ecf8,#70cce0);box-shadow:0 0 0 0.5px #e0f8fc,0 0 0 1px #5a9aa8;"></div>
<div class="t" style="left:7.5px;top:269.96px;line-height:1.3;width:20.5px;font-size:3.6px;color:#0a3038;text-align:center;overflow:hidden;font-weight:bold;text-shadow:0 0 0.25px #0a3038;opacity:1">Compressor</div>
<div style="position:absolute;left:8px;top:275px;width:19.5px;height:4.5px;background:#cecece;border:0.5px solid #b0b0b0;"></div>
<div style="position:absolute;left:8px;top:281px;width:19.5px;height:4.5px;background:#cecece;border:0.5px solid #b0b0b0;"></div>
<div class="t" style="left:7.5px;top:289.52px;line-height:1.3;width:20.5px;font-size:3.2px;color:#8a8a8a;text-align:center;overflow:hidden;opacity:1">Sends</div>
<div style="position:absolute;left:8px;top:293px;width:19.5px;height:3px;background:#cecece;border:0.5px solid #b0b0b0;"></div>
<div style="position:absolute;left:8px;top:297px;width:19.5px;height:3px;background:#cecece;border:0.5px solid #b0b0b0;"></div>
<div class="t" style="left:7.5px;top:306.12px;line-height:1.3;width:20.5px;font-size:3.2px;color:#777;text-align:center;overflow:hidden;opacity:1">I/O</div>
<div style="position:absolute;left:7.8px;top:310.6px;width:20px;height:4.2px;background:linear-gradient(#a8ecf8,#70cce0);box-shadow:0 0 0 0.5px #e0f8fc,0 0 0 1px #5a9aa8;"></div>
<div class="t" style="left:7.5px;top:311.08px;line-height:1.3;width:20.5px;font-size:3.5px;color:#0a3038;text-align:center;overflow:hidden;font-weight:bold;text-shadow:0 0 0.25px #0a3038;opacity:1">EXS24</div>
<div style="position:absolute;left:7.8px;top:315.7px;width:20px;height:4.2px;background:#ececec;box-shadow:0 0 0 0.5px #888;"></div>
<div class="t" style="left:7.5px;top:316.08px;line-height:1.3;width:20.5px;font-size:3.5px;color:#802020;text-align:center;overflow:hidden;font-weight:bold;text-shadow:0 0 0.25px #802020;opacity:1">Out 1-2</div>
<div class="t" style="left:7.5px;top:322.68px;line-height:1.3;width:20.5px;font-size:3.5px;color:#777;text-align:center;overflow:hidden;opacity:1">Inst 3</div>
<div style="position:absolute;left:7.5px;top:327.3px;width:20.5px;height:5.3px;background:linear-gradient(#a8a8a8,#bcbcbc);"></div>
<div style="position:absolute;left:15px;top:335.3px;width:1.6px;height:1.6px;background:#333;opacity:0.8;"></div>
<div style="position:absolute;left:17.5px;top:335.2px;width:4px;height:2px;background:#333;opacity:0.6;"></div>
<div style="position:absolute;left:7px;top:340.5px;width:6px;height:55.5px;background:linear-gradient(90deg,#2a1810,#4a2818 50%,#2a1810);"></div>
<div style="position:absolute;left:7px;top:340.5px;width:6px;height:4.5px;background:#d88838;"></div>
<div style="position:absolute;left:15.5px;top:341px;width:11px;height:11px;border-radius:50%;background:radial-gradient(circle,#f8f8f8 45%,#c8c8c8 60%,#8a8a8a 75%,#d8d8d8 85%);"></div>
<div style="position:absolute;left:19px;top:345.5px;width:4px;height:2px;background:#222;opacity:0.7;"></div>
<div style="position:absolute;left:16.5px;top:359.7px;width:10px;height:4.3px;background:#2a3a38;border:0.5px solid #666;"></div>
<div style="position:absolute;left:16px;top:364px;width:1.6px;height:26px;background:#8cc8d8;"></div>
<div style="position:absolute;left:18px;top:364px;width:7px;height:26px;background:linear-gradient(90deg,#c8d8dc,#d8d0d8);opacity:.6;"></div>
<div style="position:absolute;left:15px;top:391.5px;width:5px;height:3px;background:#ddd;border:0.5px solid #999;"></div>
<div style="position:absolute;left:22px;top:391.5px;width:5px;height:3px;background:#ddd;border:0.5px solid #999;"></div>
<div style="position:absolute;left:35px;top:231.5px;width:21px;height:3.5px;background:#c8c8c8;border:0.5px solid #aaa;"></div>
<div style="position:absolute;left:35.5px;top:238.5px;width:19.5px;height:7.5px;background:#dedede;border:0.5px solid #aaa;"></div>
<div class="t" style="left:35px;top:248.12px;line-height:1.3;width:21px;font-size:3.2px;color:#8a8a8a;text-align:center;overflow:hidden;opacity:1">Inserts</div>
<div style="position:absolute;left:35.5px;top:252px;width:20px;height:4.5px;background:#d4d4d4;border:0.5px solid #b0b0b0;"></div>
<div style="position:absolute;left:35.5px;top:258px;width:20px;height:4.5px;background:#d4d4d4;border:0.5px solid #b0b0b0;"></div>
<div style="position:absolute;left:35.5px;top:264px;width:20px;height:4.5px;background:#d4d4d4;border:0.5px solid #b0b0b0;"></div>
<div style="position:absolute;left:35.5px;top:270px;width:20px;height:4.5px;background:#d4d4d4;border:0.5px solid #b0b0b0;"></div>
<div style="position:absolute;left:35.5px;top:276px;width:20px;height:4.5px;background:#d4d4d4;border:0.5px solid #b0b0b0;"></div>
<div style="position:absolute;left:35.5px;top:282px;width:20px;height:4.5px;background:#d4d4d4;border:0.5px solid #b0b0b0;"></div>
<div class="t" style="left:35px;top:322.68px;line-height:1.3;width:21px;font-size:3.5px;color:#777;text-align:center;overflow:hidden;opacity:1">Out 1-2</div>
<div style="position:absolute;left:35px;top:327.3px;width:21px;height:5.3px;background:linear-gradient(#a8a8a8,#bcbcbc);"></div>
<div style="position:absolute;left:43px;top:335.3px;width:1.6px;height:1.6px;background:#333;opacity:0.8;"></div>
<div style="position:absolute;left:45.5px;top:335.2px;width:4px;height:2px;background:#333;opacity:0.6;"></div>
<div style="position:absolute;left:36px;top:340.5px;width:6px;height:55.5px;background:linear-gradient(90deg,#2a1810,#4a2818 50%,#2a1810);"></div>
<div style="position:absolute;left:36px;top:340.5px;width:6px;height:4px;background:#d83838;"></div>
<div style="position:absolute;left:36px;top:344.5px;width:6px;height:1px;background:#40a040;"></div>
<div style="position:absolute;left:44.5px;top:341px;width:11px;height:11px;border-radius:50%;background:radial-gradient(circle,#f4f4f4 45%,#c8c8c8 60%,#8a8a8a 75%,#d8d8d8 85%);"></div>
<div style="position:absolute;left:46px;top:363px;width:10px;height:4px;background:#2a3a38;border:0.5px solid #666;"></div>
<div style="position:absolute;left:45px;top:367px;width:1.6px;height:23px;background:#8cc8d8;"></div>
<div style="position:absolute;left:34px;top:398px;width:7px;height:3.5px;background:#eee;border:0.5px solid #999;"></div>
<div style="position:absolute;left:46px;top:398px;width:11px;height:3.5px;background:#eee;border:0.5px solid #999;"></div>
<div style="position:absolute;left:3px;top:405.5px;width:58px;height:1px;background:#9a9a9a;"></div>
</body></html>
